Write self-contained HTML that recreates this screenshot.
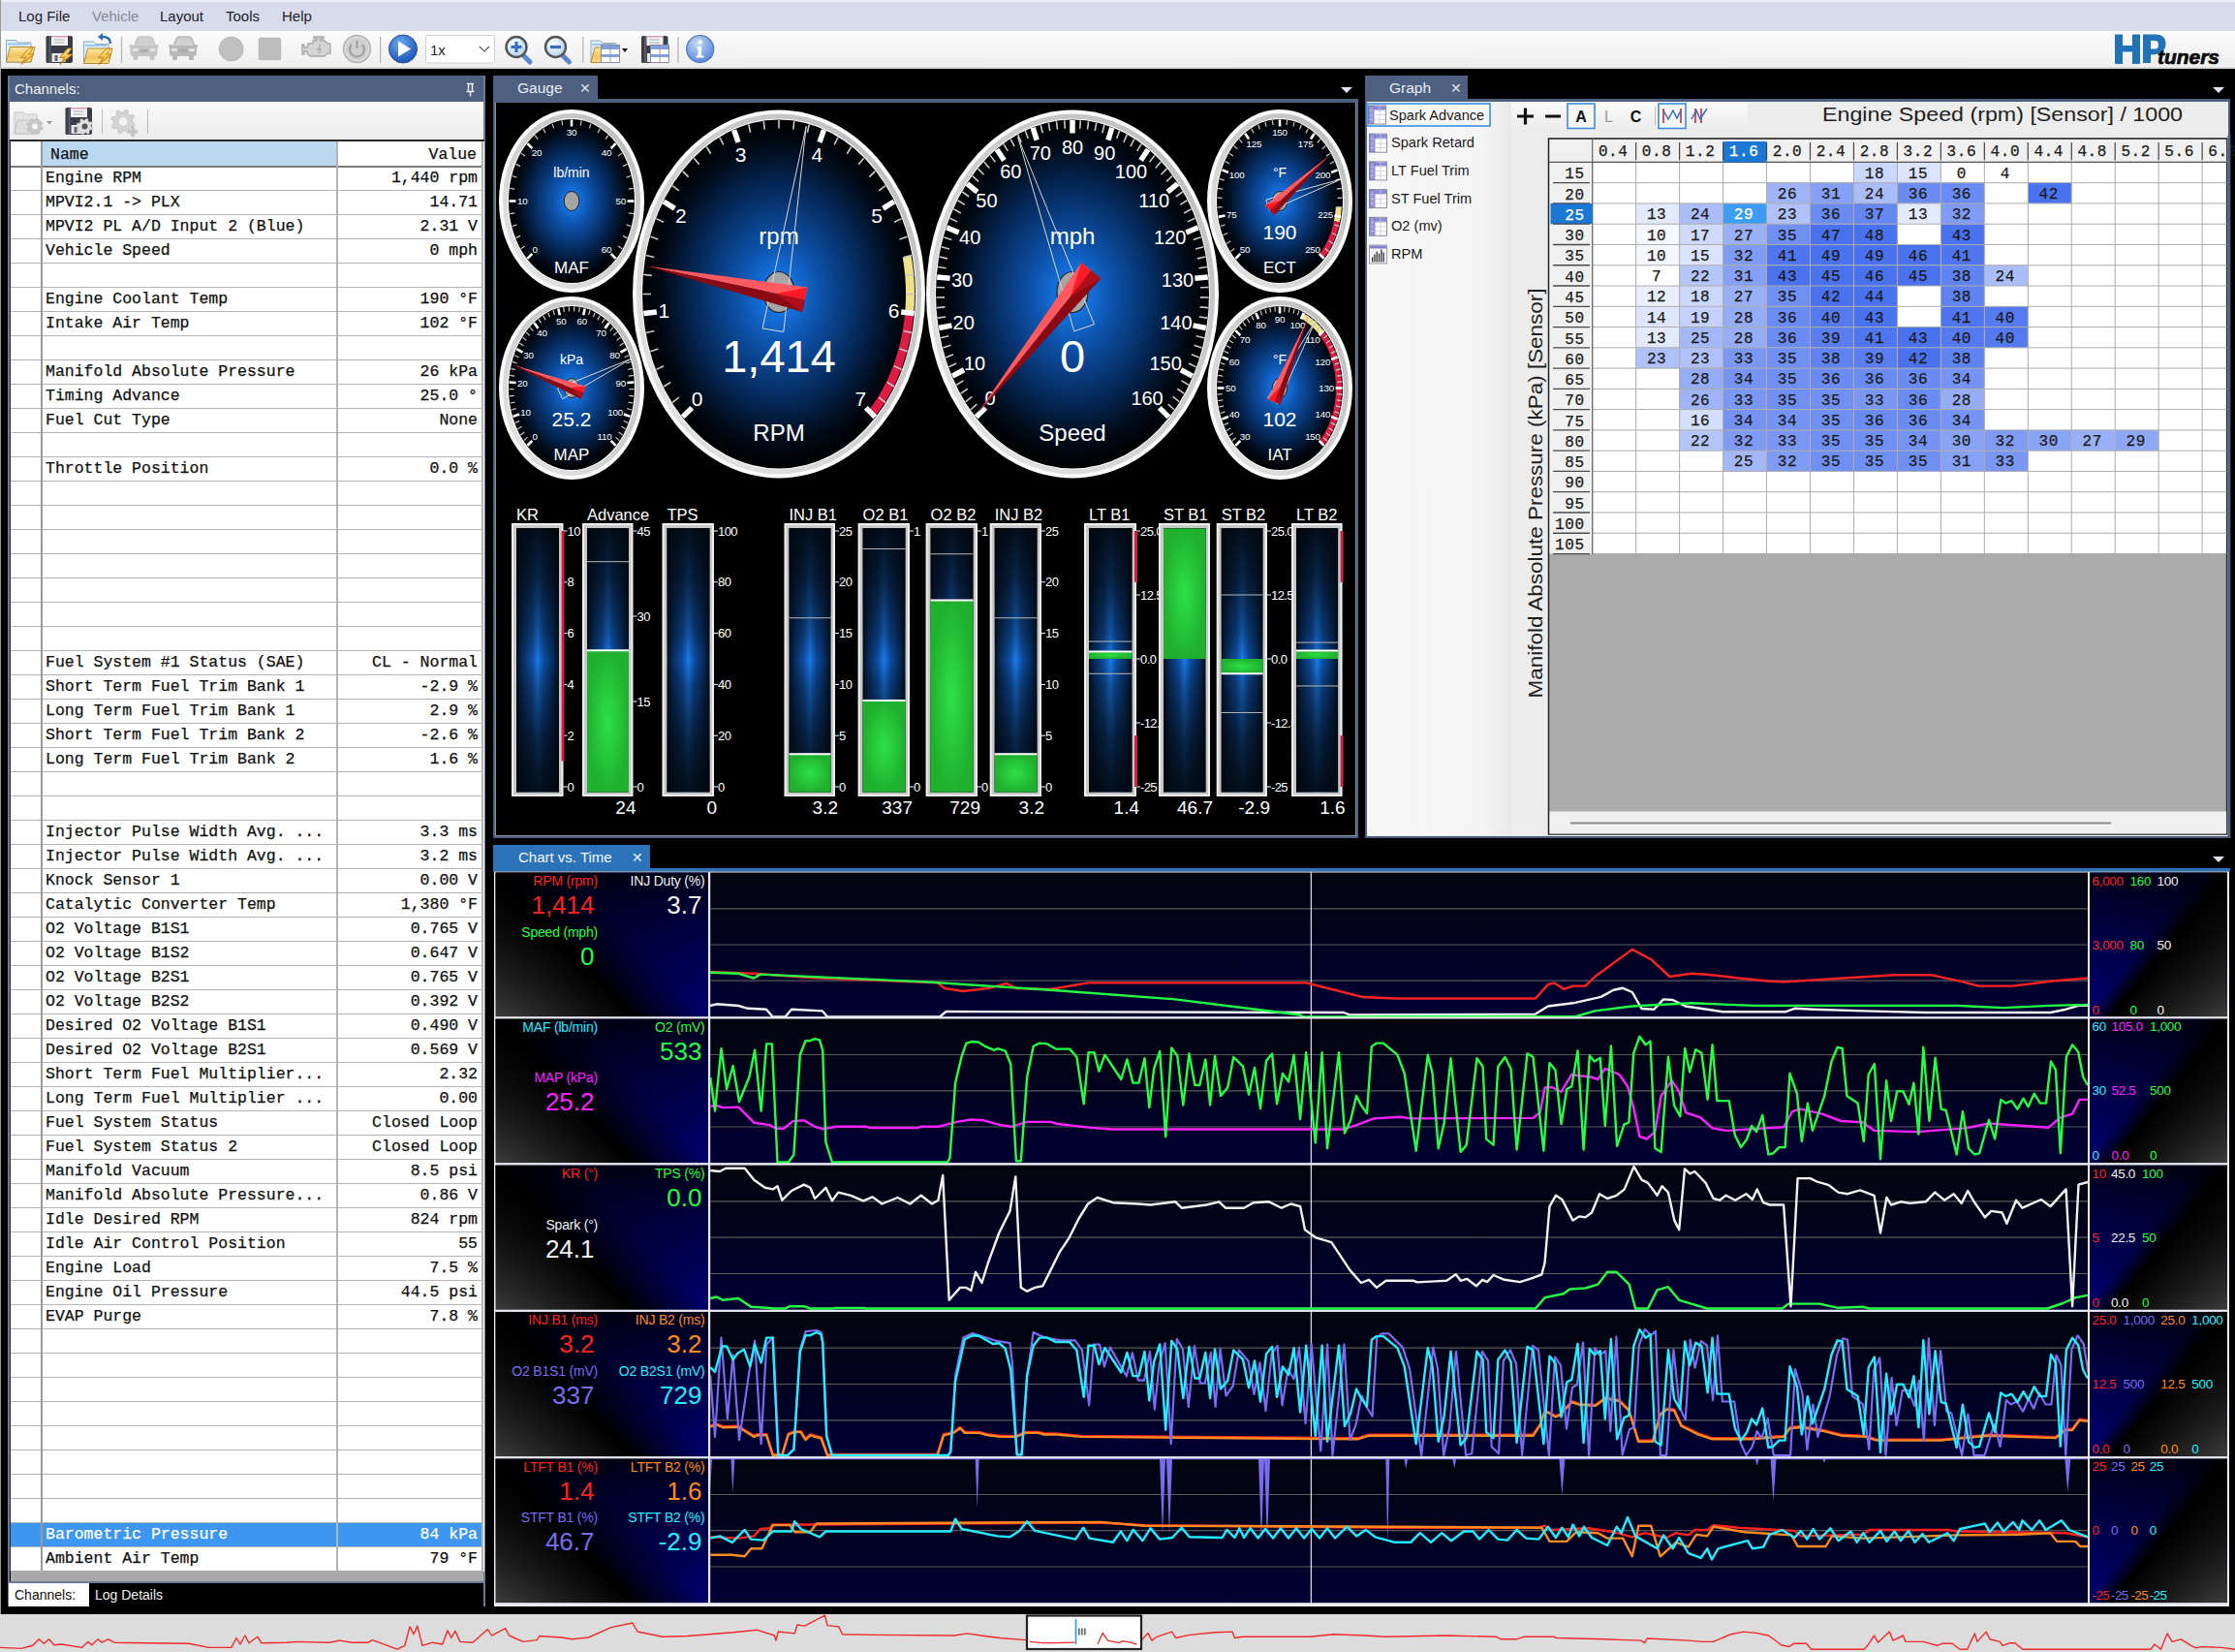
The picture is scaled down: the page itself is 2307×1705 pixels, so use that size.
<!DOCTYPE html><html><head><meta charset="utf-8"><style>html,body{margin:0;padding:0;width:2307px;height:1705px;overflow:hidden;background:#000}</style></head><body><div style="position:relative;width:2307px;height:1705px;overflow:hidden"><div style="position:absolute;left:0px;top:0px;width:2307px;height:1705px;background:#000"></div>
<div style="position:absolute;left:0px;top:0px;width:2307px;height:32px;background:#d8dbe9"></div>
<div style="position:absolute;left:0px;top:0px;width:2307px;height:2px;background:#eeeff5"></div>
<div style="position:absolute;left:19px;top:8px;white-space:pre;font-family:'Liberation Sans',sans-serif;font-size:15px;color:#1e1e2e;line-height:18px">Log File</div>
<div style="position:absolute;left:95px;top:8px;white-space:pre;font-family:'Liberation Sans',sans-serif;font-size:15px;color:#8a8a96;line-height:18px">Vehicle</div>
<div style="position:absolute;left:165px;top:8px;white-space:pre;font-family:'Liberation Sans',sans-serif;font-size:15px;color:#1e1e2e;line-height:18px">Layout</div>
<div style="position:absolute;left:233px;top:8px;white-space:pre;font-family:'Liberation Sans',sans-serif;font-size:15px;color:#1e1e2e;line-height:18px">Tools</div>
<div style="position:absolute;left:291px;top:8px;white-space:pre;font-family:'Liberation Sans',sans-serif;font-size:15px;color:#1e1e2e;line-height:18px">Help</div>
<div style="position:absolute;left:0px;top:32px;width:2307px;height:39px;background:linear-gradient(#fbfbfb,#eeeeee)"></div>
<div style="position:absolute;left:0px;top:0px;width:1px;height:1705px;background:#9a9a9a"></div>
<div style="position:absolute;left:9px;top:78px;width:492px;height:27px;background:#4e6080"></div>
<div style="position:absolute;left:15px;top:83px;white-space:pre;font-family:'Liberation Sans',sans-serif;font-size:15px;color:#f2f2f2;line-height:18px">Channels:</div>
<div style="position:absolute;left:9px;top:105px;width:492px;height:39px;background:linear-gradient(#f9f9f9,#ececec)"></div>
<div style="position:absolute;left:8px;top:78px;width:2px;height:1580px;background:#6c7a96"></div>
<div style="position:absolute;left:499px;top:78px;width:2px;height:1580px;background:#6c7a96"></div>
<div style="position:absolute;left:10px;top:144px;width:490px;height:1478px;background:#fff;"></div>
<div style="position:absolute;left:10px;top:144px;width:490px;height:2px;background:#2a2a2a"></div>
<div style="position:absolute;left:10px;top:144px;width:1px;height:1478px;background:#2a2a2a"></div>
<div style="position:absolute;left:42px;top:146px;width:306px;height:25px;background:#bad8f0"></div>
<div style="position:absolute;left:11px;top:1571px;width:488px;height:25px;background:#3d96f0"></div>
<div style="position:absolute;left:11px;top:171px;width:488px;height:2px;background:#7a7a7a"></div>
<div style="position:absolute;left:11px;top:196px;width:488px;height:1px;background:#b4b4b4"></div>
<div style="position:absolute;left:11px;top:221px;width:488px;height:1px;background:#b4b4b4"></div>
<div style="position:absolute;left:11px;top:246px;width:488px;height:1px;background:#b4b4b4"></div>
<div style="position:absolute;left:11px;top:271px;width:488px;height:1px;background:#b4b4b4"></div>
<div style="position:absolute;left:11px;top:296px;width:488px;height:1px;background:#b4b4b4"></div>
<div style="position:absolute;left:11px;top:321px;width:488px;height:1px;background:#b4b4b4"></div>
<div style="position:absolute;left:11px;top:346px;width:488px;height:1px;background:#b4b4b4"></div>
<div style="position:absolute;left:11px;top:371px;width:488px;height:1px;background:#b4b4b4"></div>
<div style="position:absolute;left:11px;top:396px;width:488px;height:1px;background:#b4b4b4"></div>
<div style="position:absolute;left:11px;top:421px;width:488px;height:1px;background:#b4b4b4"></div>
<div style="position:absolute;left:11px;top:446px;width:488px;height:1px;background:#b4b4b4"></div>
<div style="position:absolute;left:11px;top:471px;width:488px;height:1px;background:#b4b4b4"></div>
<div style="position:absolute;left:11px;top:496px;width:488px;height:1px;background:#b4b4b4"></div>
<div style="position:absolute;left:11px;top:521px;width:488px;height:1px;background:#b4b4b4"></div>
<div style="position:absolute;left:11px;top:546px;width:488px;height:1px;background:#b4b4b4"></div>
<div style="position:absolute;left:11px;top:571px;width:488px;height:1px;background:#b4b4b4"></div>
<div style="position:absolute;left:11px;top:596px;width:488px;height:1px;background:#b4b4b4"></div>
<div style="position:absolute;left:11px;top:621px;width:488px;height:1px;background:#b4b4b4"></div>
<div style="position:absolute;left:11px;top:646px;width:488px;height:1px;background:#b4b4b4"></div>
<div style="position:absolute;left:11px;top:671px;width:488px;height:1px;background:#b4b4b4"></div>
<div style="position:absolute;left:11px;top:696px;width:488px;height:1px;background:#b4b4b4"></div>
<div style="position:absolute;left:11px;top:721px;width:488px;height:1px;background:#b4b4b4"></div>
<div style="position:absolute;left:11px;top:746px;width:488px;height:1px;background:#b4b4b4"></div>
<div style="position:absolute;left:11px;top:771px;width:488px;height:1px;background:#b4b4b4"></div>
<div style="position:absolute;left:11px;top:796px;width:488px;height:1px;background:#b4b4b4"></div>
<div style="position:absolute;left:11px;top:821px;width:488px;height:1px;background:#b4b4b4"></div>
<div style="position:absolute;left:11px;top:846px;width:488px;height:1px;background:#b4b4b4"></div>
<div style="position:absolute;left:11px;top:871px;width:488px;height:1px;background:#b4b4b4"></div>
<div style="position:absolute;left:11px;top:896px;width:488px;height:1px;background:#b4b4b4"></div>
<div style="position:absolute;left:11px;top:921px;width:488px;height:1px;background:#b4b4b4"></div>
<div style="position:absolute;left:11px;top:946px;width:488px;height:1px;background:#b4b4b4"></div>
<div style="position:absolute;left:11px;top:971px;width:488px;height:1px;background:#b4b4b4"></div>
<div style="position:absolute;left:11px;top:996px;width:488px;height:1px;background:#b4b4b4"></div>
<div style="position:absolute;left:11px;top:1021px;width:488px;height:1px;background:#b4b4b4"></div>
<div style="position:absolute;left:11px;top:1046px;width:488px;height:1px;background:#b4b4b4"></div>
<div style="position:absolute;left:11px;top:1071px;width:488px;height:1px;background:#b4b4b4"></div>
<div style="position:absolute;left:11px;top:1096px;width:488px;height:1px;background:#b4b4b4"></div>
<div style="position:absolute;left:11px;top:1121px;width:488px;height:1px;background:#b4b4b4"></div>
<div style="position:absolute;left:11px;top:1146px;width:488px;height:1px;background:#b4b4b4"></div>
<div style="position:absolute;left:11px;top:1171px;width:488px;height:1px;background:#b4b4b4"></div>
<div style="position:absolute;left:11px;top:1196px;width:488px;height:1px;background:#b4b4b4"></div>
<div style="position:absolute;left:11px;top:1221px;width:488px;height:1px;background:#b4b4b4"></div>
<div style="position:absolute;left:11px;top:1246px;width:488px;height:1px;background:#b4b4b4"></div>
<div style="position:absolute;left:11px;top:1271px;width:488px;height:1px;background:#b4b4b4"></div>
<div style="position:absolute;left:11px;top:1296px;width:488px;height:1px;background:#b4b4b4"></div>
<div style="position:absolute;left:11px;top:1321px;width:488px;height:1px;background:#b4b4b4"></div>
<div style="position:absolute;left:11px;top:1346px;width:488px;height:1px;background:#b4b4b4"></div>
<div style="position:absolute;left:11px;top:1371px;width:488px;height:1px;background:#b4b4b4"></div>
<div style="position:absolute;left:11px;top:1396px;width:488px;height:1px;background:#b4b4b4"></div>
<div style="position:absolute;left:11px;top:1421px;width:488px;height:1px;background:#b4b4b4"></div>
<div style="position:absolute;left:11px;top:1446px;width:488px;height:1px;background:#b4b4b4"></div>
<div style="position:absolute;left:11px;top:1471px;width:488px;height:1px;background:#b4b4b4"></div>
<div style="position:absolute;left:11px;top:1496px;width:488px;height:1px;background:#b4b4b4"></div>
<div style="position:absolute;left:11px;top:1521px;width:488px;height:1px;background:#b4b4b4"></div>
<div style="position:absolute;left:11px;top:1546px;width:488px;height:1px;background:#b4b4b4"></div>
<div style="position:absolute;left:11px;top:1571px;width:488px;height:1px;background:#b4b4b4"></div>
<div style="position:absolute;left:11px;top:1596px;width:488px;height:1px;background:#b4b4b4"></div>
<div style="position:absolute;left:11px;top:1621px;width:488px;height:1px;background:#b4b4b4"></div>
<div style="position:absolute;left:42px;top:146px;width:2px;height:1475px;background:#9a9a9a"></div>
<div style="position:absolute;left:347px;top:146px;width:2px;height:1475px;background:#b4b4b4"></div>
<div style="position:absolute;left:497px;top:146px;width:2px;height:1475px;background:#b4b4b4"></div>
<div style="position:absolute;left:52px;top:150px;white-space:pre;font-family:'Liberation Mono',monospace;font-size:16.5px;letter-spacing:0px;line-height:20px;-webkit-text-stroke:0.25px currentColor;color:#111">Name</div>
<div style="position:absolute;right:1815px;top:150px;white-space:pre;text-align:right;font-family:'Liberation Mono',monospace;font-size:16.5px;letter-spacing:0px;line-height:20px;-webkit-text-stroke:0.25px currentColor;color:#111">Value</div>
<div style="position:absolute;left:47px;top:174px;white-space:pre;font-family:'Liberation Mono',monospace;font-size:16.5px;letter-spacing:0px;line-height:20px;-webkit-text-stroke:0.25px currentColor;color:#111">Engine RPM</div>
<div style="position:absolute;right:1814px;top:174px;white-space:pre;text-align:right;font-family:'Liberation Mono',monospace;font-size:16.5px;letter-spacing:0px;line-height:20px;-webkit-text-stroke:0.25px currentColor;color:#111">1,440 rpm</div>
<div style="position:absolute;left:47px;top:199px;white-space:pre;font-family:'Liberation Mono',monospace;font-size:16.5px;letter-spacing:0px;line-height:20px;-webkit-text-stroke:0.25px currentColor;color:#111">MPVI2.1 -> PLX</div>
<div style="position:absolute;right:1814px;top:199px;white-space:pre;text-align:right;font-family:'Liberation Mono',monospace;font-size:16.5px;letter-spacing:0px;line-height:20px;-webkit-text-stroke:0.25px currentColor;color:#111">14.71</div>
<div style="position:absolute;left:47px;top:224px;white-space:pre;font-family:'Liberation Mono',monospace;font-size:16.5px;letter-spacing:0px;line-height:20px;-webkit-text-stroke:0.25px currentColor;color:#111">MPVI2 PL A/D Input 2 (Blue)</div>
<div style="position:absolute;right:1814px;top:224px;white-space:pre;text-align:right;font-family:'Liberation Mono',monospace;font-size:16.5px;letter-spacing:0px;line-height:20px;-webkit-text-stroke:0.25px currentColor;color:#111">2.31 V</div>
<div style="position:absolute;left:47px;top:249px;white-space:pre;font-family:'Liberation Mono',monospace;font-size:16.5px;letter-spacing:0px;line-height:20px;-webkit-text-stroke:0.25px currentColor;color:#111">Vehicle Speed</div>
<div style="position:absolute;right:1814px;top:249px;white-space:pre;text-align:right;font-family:'Liberation Mono',monospace;font-size:16.5px;letter-spacing:0px;line-height:20px;-webkit-text-stroke:0.25px currentColor;color:#111">0 mph</div>
<div style="position:absolute;left:47px;top:299px;white-space:pre;font-family:'Liberation Mono',monospace;font-size:16.5px;letter-spacing:0px;line-height:20px;-webkit-text-stroke:0.25px currentColor;color:#111">Engine Coolant Temp</div>
<div style="position:absolute;right:1814px;top:299px;white-space:pre;text-align:right;font-family:'Liberation Mono',monospace;font-size:16.5px;letter-spacing:0px;line-height:20px;-webkit-text-stroke:0.25px currentColor;color:#111">190 °F</div>
<div style="position:absolute;left:47px;top:324px;white-space:pre;font-family:'Liberation Mono',monospace;font-size:16.5px;letter-spacing:0px;line-height:20px;-webkit-text-stroke:0.25px currentColor;color:#111">Intake Air Temp</div>
<div style="position:absolute;right:1814px;top:324px;white-space:pre;text-align:right;font-family:'Liberation Mono',monospace;font-size:16.5px;letter-spacing:0px;line-height:20px;-webkit-text-stroke:0.25px currentColor;color:#111">102 °F</div>
<div style="position:absolute;left:47px;top:374px;white-space:pre;font-family:'Liberation Mono',monospace;font-size:16.5px;letter-spacing:0px;line-height:20px;-webkit-text-stroke:0.25px currentColor;color:#111">Manifold Absolute Pressure</div>
<div style="position:absolute;right:1814px;top:374px;white-space:pre;text-align:right;font-family:'Liberation Mono',monospace;font-size:16.5px;letter-spacing:0px;line-height:20px;-webkit-text-stroke:0.25px currentColor;color:#111">26 kPa</div>
<div style="position:absolute;left:47px;top:399px;white-space:pre;font-family:'Liberation Mono',monospace;font-size:16.5px;letter-spacing:0px;line-height:20px;-webkit-text-stroke:0.25px currentColor;color:#111">Timing Advance</div>
<div style="position:absolute;right:1814px;top:399px;white-space:pre;text-align:right;font-family:'Liberation Mono',monospace;font-size:16.5px;letter-spacing:0px;line-height:20px;-webkit-text-stroke:0.25px currentColor;color:#111">25.0 °</div>
<div style="position:absolute;left:47px;top:424px;white-space:pre;font-family:'Liberation Mono',monospace;font-size:16.5px;letter-spacing:0px;line-height:20px;-webkit-text-stroke:0.25px currentColor;color:#111">Fuel Cut Type</div>
<div style="position:absolute;right:1814px;top:424px;white-space:pre;text-align:right;font-family:'Liberation Mono',monospace;font-size:16.5px;letter-spacing:0px;line-height:20px;-webkit-text-stroke:0.25px currentColor;color:#111">None</div>
<div style="position:absolute;left:47px;top:474px;white-space:pre;font-family:'Liberation Mono',monospace;font-size:16.5px;letter-spacing:0px;line-height:20px;-webkit-text-stroke:0.25px currentColor;color:#111">Throttle Position</div>
<div style="position:absolute;right:1814px;top:474px;white-space:pre;text-align:right;font-family:'Liberation Mono',monospace;font-size:16.5px;letter-spacing:0px;line-height:20px;-webkit-text-stroke:0.25px currentColor;color:#111">0.0 %</div>
<div style="position:absolute;left:47px;top:674px;white-space:pre;font-family:'Liberation Mono',monospace;font-size:16.5px;letter-spacing:0px;line-height:20px;-webkit-text-stroke:0.25px currentColor;color:#111">Fuel System #1 Status (SAE)</div>
<div style="position:absolute;right:1814px;top:674px;white-space:pre;text-align:right;font-family:'Liberation Mono',monospace;font-size:16.5px;letter-spacing:0px;line-height:20px;-webkit-text-stroke:0.25px currentColor;color:#111">CL - Normal</div>
<div style="position:absolute;left:47px;top:699px;white-space:pre;font-family:'Liberation Mono',monospace;font-size:16.5px;letter-spacing:0px;line-height:20px;-webkit-text-stroke:0.25px currentColor;color:#111">Short Term Fuel Trim Bank 1</div>
<div style="position:absolute;right:1814px;top:699px;white-space:pre;text-align:right;font-family:'Liberation Mono',monospace;font-size:16.5px;letter-spacing:0px;line-height:20px;-webkit-text-stroke:0.25px currentColor;color:#111">-2.9 %</div>
<div style="position:absolute;left:47px;top:724px;white-space:pre;font-family:'Liberation Mono',monospace;font-size:16.5px;letter-spacing:0px;line-height:20px;-webkit-text-stroke:0.25px currentColor;color:#111">Long Term Fuel Trim Bank 1</div>
<div style="position:absolute;right:1814px;top:724px;white-space:pre;text-align:right;font-family:'Liberation Mono',monospace;font-size:16.5px;letter-spacing:0px;line-height:20px;-webkit-text-stroke:0.25px currentColor;color:#111">2.9 %</div>
<div style="position:absolute;left:47px;top:749px;white-space:pre;font-family:'Liberation Mono',monospace;font-size:16.5px;letter-spacing:0px;line-height:20px;-webkit-text-stroke:0.25px currentColor;color:#111">Short Term Fuel Trim Bank 2</div>
<div style="position:absolute;right:1814px;top:749px;white-space:pre;text-align:right;font-family:'Liberation Mono',monospace;font-size:16.5px;letter-spacing:0px;line-height:20px;-webkit-text-stroke:0.25px currentColor;color:#111">-2.6 %</div>
<div style="position:absolute;left:47px;top:774px;white-space:pre;font-family:'Liberation Mono',monospace;font-size:16.5px;letter-spacing:0px;line-height:20px;-webkit-text-stroke:0.25px currentColor;color:#111">Long Term Fuel Trim Bank 2</div>
<div style="position:absolute;right:1814px;top:774px;white-space:pre;text-align:right;font-family:'Liberation Mono',monospace;font-size:16.5px;letter-spacing:0px;line-height:20px;-webkit-text-stroke:0.25px currentColor;color:#111">1.6 %</div>
<div style="position:absolute;left:47px;top:849px;white-space:pre;font-family:'Liberation Mono',monospace;font-size:16.5px;letter-spacing:0px;line-height:20px;-webkit-text-stroke:0.25px currentColor;color:#111">Injector Pulse Width Avg. ...</div>
<div style="position:absolute;right:1814px;top:849px;white-space:pre;text-align:right;font-family:'Liberation Mono',monospace;font-size:16.5px;letter-spacing:0px;line-height:20px;-webkit-text-stroke:0.25px currentColor;color:#111">3.3 ms</div>
<div style="position:absolute;left:47px;top:874px;white-space:pre;font-family:'Liberation Mono',monospace;font-size:16.5px;letter-spacing:0px;line-height:20px;-webkit-text-stroke:0.25px currentColor;color:#111">Injector Pulse Width Avg. ...</div>
<div style="position:absolute;right:1814px;top:874px;white-space:pre;text-align:right;font-family:'Liberation Mono',monospace;font-size:16.5px;letter-spacing:0px;line-height:20px;-webkit-text-stroke:0.25px currentColor;color:#111">3.2 ms</div>
<div style="position:absolute;left:47px;top:899px;white-space:pre;font-family:'Liberation Mono',monospace;font-size:16.5px;letter-spacing:0px;line-height:20px;-webkit-text-stroke:0.25px currentColor;color:#111">Knock Sensor 1</div>
<div style="position:absolute;right:1814px;top:899px;white-space:pre;text-align:right;font-family:'Liberation Mono',monospace;font-size:16.5px;letter-spacing:0px;line-height:20px;-webkit-text-stroke:0.25px currentColor;color:#111">0.00 V</div>
<div style="position:absolute;left:47px;top:924px;white-space:pre;font-family:'Liberation Mono',monospace;font-size:16.5px;letter-spacing:0px;line-height:20px;-webkit-text-stroke:0.25px currentColor;color:#111">Catalytic Converter Temp</div>
<div style="position:absolute;right:1814px;top:924px;white-space:pre;text-align:right;font-family:'Liberation Mono',monospace;font-size:16.5px;letter-spacing:0px;line-height:20px;-webkit-text-stroke:0.25px currentColor;color:#111">1,380 °F</div>
<div style="position:absolute;left:47px;top:949px;white-space:pre;font-family:'Liberation Mono',monospace;font-size:16.5px;letter-spacing:0px;line-height:20px;-webkit-text-stroke:0.25px currentColor;color:#111">O2 Voltage B1S1</div>
<div style="position:absolute;right:1814px;top:949px;white-space:pre;text-align:right;font-family:'Liberation Mono',monospace;font-size:16.5px;letter-spacing:0px;line-height:20px;-webkit-text-stroke:0.25px currentColor;color:#111">0.765 V</div>
<div style="position:absolute;left:47px;top:974px;white-space:pre;font-family:'Liberation Mono',monospace;font-size:16.5px;letter-spacing:0px;line-height:20px;-webkit-text-stroke:0.25px currentColor;color:#111">O2 Voltage B1S2</div>
<div style="position:absolute;right:1814px;top:974px;white-space:pre;text-align:right;font-family:'Liberation Mono',monospace;font-size:16.5px;letter-spacing:0px;line-height:20px;-webkit-text-stroke:0.25px currentColor;color:#111">0.647 V</div>
<div style="position:absolute;left:47px;top:999px;white-space:pre;font-family:'Liberation Mono',monospace;font-size:16.5px;letter-spacing:0px;line-height:20px;-webkit-text-stroke:0.25px currentColor;color:#111">O2 Voltage B2S1</div>
<div style="position:absolute;right:1814px;top:999px;white-space:pre;text-align:right;font-family:'Liberation Mono',monospace;font-size:16.5px;letter-spacing:0px;line-height:20px;-webkit-text-stroke:0.25px currentColor;color:#111">0.765 V</div>
<div style="position:absolute;left:47px;top:1024px;white-space:pre;font-family:'Liberation Mono',monospace;font-size:16.5px;letter-spacing:0px;line-height:20px;-webkit-text-stroke:0.25px currentColor;color:#111">O2 Voltage B2S2</div>
<div style="position:absolute;right:1814px;top:1024px;white-space:pre;text-align:right;font-family:'Liberation Mono',monospace;font-size:16.5px;letter-spacing:0px;line-height:20px;-webkit-text-stroke:0.25px currentColor;color:#111">0.392 V</div>
<div style="position:absolute;left:47px;top:1049px;white-space:pre;font-family:'Liberation Mono',monospace;font-size:16.5px;letter-spacing:0px;line-height:20px;-webkit-text-stroke:0.25px currentColor;color:#111">Desired O2 Voltage B1S1</div>
<div style="position:absolute;right:1814px;top:1049px;white-space:pre;text-align:right;font-family:'Liberation Mono',monospace;font-size:16.5px;letter-spacing:0px;line-height:20px;-webkit-text-stroke:0.25px currentColor;color:#111">0.490 V</div>
<div style="position:absolute;left:47px;top:1074px;white-space:pre;font-family:'Liberation Mono',monospace;font-size:16.5px;letter-spacing:0px;line-height:20px;-webkit-text-stroke:0.25px currentColor;color:#111">Desired O2 Voltage B2S1</div>
<div style="position:absolute;right:1814px;top:1074px;white-space:pre;text-align:right;font-family:'Liberation Mono',monospace;font-size:16.5px;letter-spacing:0px;line-height:20px;-webkit-text-stroke:0.25px currentColor;color:#111">0.569 V</div>
<div style="position:absolute;left:47px;top:1099px;white-space:pre;font-family:'Liberation Mono',monospace;font-size:16.5px;letter-spacing:0px;line-height:20px;-webkit-text-stroke:0.25px currentColor;color:#111">Short Term Fuel Multiplier...</div>
<div style="position:absolute;right:1814px;top:1099px;white-space:pre;text-align:right;font-family:'Liberation Mono',monospace;font-size:16.5px;letter-spacing:0px;line-height:20px;-webkit-text-stroke:0.25px currentColor;color:#111">2.32</div>
<div style="position:absolute;left:47px;top:1124px;white-space:pre;font-family:'Liberation Mono',monospace;font-size:16.5px;letter-spacing:0px;line-height:20px;-webkit-text-stroke:0.25px currentColor;color:#111">Long Term Fuel Multiplier ...</div>
<div style="position:absolute;right:1814px;top:1124px;white-space:pre;text-align:right;font-family:'Liberation Mono',monospace;font-size:16.5px;letter-spacing:0px;line-height:20px;-webkit-text-stroke:0.25px currentColor;color:#111">0.00</div>
<div style="position:absolute;left:47px;top:1149px;white-space:pre;font-family:'Liberation Mono',monospace;font-size:16.5px;letter-spacing:0px;line-height:20px;-webkit-text-stroke:0.25px currentColor;color:#111">Fuel System Status</div>
<div style="position:absolute;right:1814px;top:1149px;white-space:pre;text-align:right;font-family:'Liberation Mono',monospace;font-size:16.5px;letter-spacing:0px;line-height:20px;-webkit-text-stroke:0.25px currentColor;color:#111">Closed Loop</div>
<div style="position:absolute;left:47px;top:1174px;white-space:pre;font-family:'Liberation Mono',monospace;font-size:16.5px;letter-spacing:0px;line-height:20px;-webkit-text-stroke:0.25px currentColor;color:#111">Fuel System Status 2</div>
<div style="position:absolute;right:1814px;top:1174px;white-space:pre;text-align:right;font-family:'Liberation Mono',monospace;font-size:16.5px;letter-spacing:0px;line-height:20px;-webkit-text-stroke:0.25px currentColor;color:#111">Closed Loop</div>
<div style="position:absolute;left:47px;top:1199px;white-space:pre;font-family:'Liberation Mono',monospace;font-size:16.5px;letter-spacing:0px;line-height:20px;-webkit-text-stroke:0.25px currentColor;color:#111">Manifold Vacuum</div>
<div style="position:absolute;right:1814px;top:1199px;white-space:pre;text-align:right;font-family:'Liberation Mono',monospace;font-size:16.5px;letter-spacing:0px;line-height:20px;-webkit-text-stroke:0.25px currentColor;color:#111">8.5 psi</div>
<div style="position:absolute;left:47px;top:1224px;white-space:pre;font-family:'Liberation Mono',monospace;font-size:16.5px;letter-spacing:0px;line-height:20px;-webkit-text-stroke:0.25px currentColor;color:#111">Manifold Absolute Pressure...</div>
<div style="position:absolute;right:1814px;top:1224px;white-space:pre;text-align:right;font-family:'Liberation Mono',monospace;font-size:16.5px;letter-spacing:0px;line-height:20px;-webkit-text-stroke:0.25px currentColor;color:#111">0.86 V</div>
<div style="position:absolute;left:47px;top:1249px;white-space:pre;font-family:'Liberation Mono',monospace;font-size:16.5px;letter-spacing:0px;line-height:20px;-webkit-text-stroke:0.25px currentColor;color:#111">Idle Desired RPM</div>
<div style="position:absolute;right:1814px;top:1249px;white-space:pre;text-align:right;font-family:'Liberation Mono',monospace;font-size:16.5px;letter-spacing:0px;line-height:20px;-webkit-text-stroke:0.25px currentColor;color:#111">824 rpm</div>
<div style="position:absolute;left:47px;top:1274px;white-space:pre;font-family:'Liberation Mono',monospace;font-size:16.5px;letter-spacing:0px;line-height:20px;-webkit-text-stroke:0.25px currentColor;color:#111">Idle Air Control Position</div>
<div style="position:absolute;right:1814px;top:1274px;white-space:pre;text-align:right;font-family:'Liberation Mono',monospace;font-size:16.5px;letter-spacing:0px;line-height:20px;-webkit-text-stroke:0.25px currentColor;color:#111">55</div>
<div style="position:absolute;left:47px;top:1299px;white-space:pre;font-family:'Liberation Mono',monospace;font-size:16.5px;letter-spacing:0px;line-height:20px;-webkit-text-stroke:0.25px currentColor;color:#111">Engine Load</div>
<div style="position:absolute;right:1814px;top:1299px;white-space:pre;text-align:right;font-family:'Liberation Mono',monospace;font-size:16.5px;letter-spacing:0px;line-height:20px;-webkit-text-stroke:0.25px currentColor;color:#111">7.5 %</div>
<div style="position:absolute;left:47px;top:1324px;white-space:pre;font-family:'Liberation Mono',monospace;font-size:16.5px;letter-spacing:0px;line-height:20px;-webkit-text-stroke:0.25px currentColor;color:#111">Engine Oil Pressure</div>
<div style="position:absolute;right:1814px;top:1324px;white-space:pre;text-align:right;font-family:'Liberation Mono',monospace;font-size:16.5px;letter-spacing:0px;line-height:20px;-webkit-text-stroke:0.25px currentColor;color:#111">44.5 psi</div>
<div style="position:absolute;left:47px;top:1349px;white-space:pre;font-family:'Liberation Mono',monospace;font-size:16.5px;letter-spacing:0px;line-height:20px;-webkit-text-stroke:0.25px currentColor;color:#111">EVAP Purge</div>
<div style="position:absolute;right:1814px;top:1349px;white-space:pre;text-align:right;font-family:'Liberation Mono',monospace;font-size:16.5px;letter-spacing:0px;line-height:20px;-webkit-text-stroke:0.25px currentColor;color:#111">7.8 %</div>
<div style="position:absolute;left:47px;top:1574px;white-space:pre;font-family:'Liberation Mono',monospace;font-size:16.5px;letter-spacing:0px;line-height:20px;-webkit-text-stroke:0.25px currentColor;color:#fff">Barometric Pressure</div>
<div style="position:absolute;right:1814px;top:1574px;white-space:pre;text-align:right;font-family:'Liberation Mono',monospace;font-size:16.5px;letter-spacing:0px;line-height:20px;-webkit-text-stroke:0.25px currentColor;color:#fff">84 kPa</div>
<div style="position:absolute;left:47px;top:1599px;white-space:pre;font-family:'Liberation Mono',monospace;font-size:16.5px;letter-spacing:0px;line-height:20px;-webkit-text-stroke:0.25px currentColor;color:#111">Ambient Air Temp</div>
<div style="position:absolute;right:1814px;top:1599px;white-space:pre;text-align:right;font-family:'Liberation Mono',monospace;font-size:16.5px;letter-spacing:0px;line-height:20px;-webkit-text-stroke:0.25px currentColor;color:#111">79 °F</div>
<div style="position:absolute;left:11px;top:1621px;width:488px;height:11px;background:#a9a9a9"></div>
<div style="position:absolute;left:10px;top:1632px;width:490px;height:2px;background:#6c7a96"></div>
<div style="position:absolute;left:9px;top:1634px;width:83px;height:24px;background:#fdfdfd"></div>
<div style="position:absolute;left:15px;top:1638px;white-space:pre;font-family:'Liberation Sans',sans-serif;font-size:14px;color:#111;line-height:17px">Channels:</div>
<div style="position:absolute;left:98px;top:1638px;white-space:pre;font-family:'Liberation Sans',sans-serif;font-size:14px;color:#f0f0f0;line-height:17px">Log Details</div>
<div style="position:absolute;left:0px;top:1666px;width:2307px;height:39px;background:#dcdcdc"></div>
<div style="position:absolute;left:509px;top:78px;width:108px;height:24px;background:#4e6080"></div>
<div style="position:absolute;left:534px;top:82px;white-space:pre;font-family:'Liberation Sans',sans-serif;font-size:15.5px;color:#e8ecf4;line-height:18px">Gauge</div>
<div style="position:absolute;left:598px;top:82px;white-space:pre;font-family:'Liberation Sans',sans-serif;font-size:14px;color:#dfe4ee;line-height:18px">✕</div>
<div style="position:absolute;left:509px;top:102px;width:893px;height:763px;background:#4e6080"></div>
<div style="position:absolute;left:511px;top:106px;width:889px;height:757px;background:#000"></div>
<div style="position:absolute;left:511px;top:106px;width:1px;height:757px;background:#8892aa"></div>
<div style="position:absolute;left:1399px;top:106px;width:1px;height:757px;background:#8892aa"></div>
<div style="position:absolute;left:511px;top:862px;width:889px;height:1px;background:#8892aa"></div>
<svg style="position:absolute;left:0;top:0" width="2307" height="1705" viewBox="0 0 2307 1705"><defs><radialGradient id="facerpm" cx="50%" cy="50%" r="50%"><stop offset="0" stop-color="#1a86ff"/><stop offset="0.3" stop-color="#0d52aa"/><stop offset="0.62" stop-color="#052858"/><stop offset="0.86" stop-color="#010a16"/><stop offset="1" stop-color="#000"/></radialGradient><linearGradient id="bezrpm" x1="0" y1="1" x2="1" y2="0"><stop offset="0" stop-color="#e8e8e8"/><stop offset="0.5" stop-color="#cfcfcf"/><stop offset="1" stop-color="#bcbcbc"/></linearGradient></defs><ellipse cx="804" cy="303.5" rx="151" ry="190" fill="#fafafa"/><ellipse cx="804" cy="303.5" rx="144.5" ry="183.5" fill="none" stroke="url(#bezrpm)" stroke-width="5"/><ellipse cx="804" cy="303.5" rx="141" ry="180" fill="url(#facerpm)"/><polygon fill="#efe08a" points="940.49,263.67 940.83,265.63 941.15,267.59 941.46,269.56 941.75,271.54 942.02,273.52 942.28,275.5 942.51,277.48 942.73,279.47 942.94,281.46 943.12,283.46 943.29,285.46 943.44,287.45 943.57,289.46 943.68,291.46 943.78,293.46 943.86,295.47 943.92,297.48 943.96,299.48 943.99,301.49 944,303.5 943.99,305.51 943.96,307.52 943.92,309.52 943.86,311.53 943.78,313.54 943.68,315.54 943.57,317.54 943.44,319.55 943.29,321.54 943.12,323.54 934.18,322.53 934.33,320.64 934.47,318.74 934.6,316.84 934.7,314.94 934.79,313.03 934.87,311.13 934.93,309.22 934.97,307.31 934.99,305.41 935,303.5 934.99,301.59 934.97,299.69 934.93,297.78 934.87,295.87 934.79,293.97 934.7,292.06 934.6,290.16 934.47,288.26 934.33,286.36 934.18,284.47 934,282.57 933.81,280.68 933.61,278.79 933.39,276.91 933.15,275.02 932.89,273.15 932.62,271.27 932.34,269.4 932.03,267.53 931.72,265.67"/><polygon fill="#dc1c44" points="943.12,323.54 942.73,327.53 942.28,331.5 941.75,335.46 941.15,339.41 940.49,343.33 939.76,347.24 938.95,351.12 938.09,354.98 937.15,358.81 936.14,362.62 935.07,366.4 933.94,370.14 932.73,373.85 931.47,377.53 930.14,381.17 928.74,384.76 927.28,388.32 925.76,391.84 924.18,395.31 922.54,398.73 920.84,402.11 919.08,405.44 917.26,408.71 915.39,411.94 913.46,415.1 911.47,418.22 909.43,421.27 907.34,424.27 905.19,427.2 902.99,430.07 896.63,423.71 898.69,420.98 900.69,418.19 902.65,415.35 904.56,412.45 906.42,409.49 908.23,406.48 909.98,403.42 911.68,400.31 913.33,397.15 914.92,393.95 916.46,390.69 917.94,387.4 919.36,384.06 920.72,380.68 922.03,377.26 923.27,373.8 924.46,370.31 925.58,366.79 926.65,363.23 927.65,359.65 928.59,356.03 929.47,352.39 930.28,348.73 931.03,345.04 931.72,341.33 932.34,337.6 932.89,333.85 933.39,330.09 933.81,326.32 934.18,322.53"/><line x1="704.65" y1="430.43" x2="714.2" y2="420.88" stroke="#ffffff" stroke-width="5.5"/><line x1="694.15" y1="415.42" x2="700.8" y2="410.12" stroke="#c8c8c8" stroke-width="1.6"/><line x1="685.04" y1="399" x2="692.23" y2="394.48" stroke="#c8c8c8" stroke-width="1.6"/><line x1="677.41" y1="381.38" x2="685.07" y2="377.69" stroke="#c8c8c8" stroke-width="1.6"/><line x1="671.38" y1="362.79" x2="679.41" y2="359.98" stroke="#c8c8c8" stroke-width="1.6"/><line x1="667.02" y1="343.44" x2="675.31" y2="341.55" stroke="#c8c8c8" stroke-width="1.6"/><line x1="664.38" y1="323.6" x2="677.8" y2="322.09" stroke="#ffffff" stroke-width="5.5"/><line x1="663.5" y1="303.5" x2="672" y2="303.5" stroke="#c8c8c8" stroke-width="1.6"/><line x1="664.38" y1="283.4" x2="672.83" y2="284.35" stroke="#c8c8c8" stroke-width="1.6"/><line x1="667.02" y1="263.56" x2="675.31" y2="265.45" stroke="#c8c8c8" stroke-width="1.6"/><line x1="671.38" y1="244.21" x2="679.41" y2="247.02" stroke="#c8c8c8" stroke-width="1.6"/><line x1="677.41" y1="225.62" x2="685.07" y2="229.31" stroke="#c8c8c8" stroke-width="1.6"/><line x1="685.04" y1="208" x2="696.47" y2="215.18" stroke="#ffffff" stroke-width="5.5"/><line x1="694.15" y1="191.58" x2="700.8" y2="196.88" stroke="#c8c8c8" stroke-width="1.6"/><line x1="704.65" y1="176.57" x2="710.66" y2="182.58" stroke="#c8c8c8" stroke-width="1.6"/><line x1="716.4" y1="163.16" x2="721.7" y2="169.81" stroke="#c8c8c8" stroke-width="1.6"/><line x1="729.25" y1="151.51" x2="733.77" y2="158.71" stroke="#c8c8c8" stroke-width="1.6"/><line x1="743.04" y1="141.78" x2="746.73" y2="149.43" stroke="#c8c8c8" stroke-width="1.6"/><line x1="757.6" y1="134.07" x2="762.05" y2="146.82" stroke="#ffffff" stroke-width="5.5"/><line x1="772.74" y1="128.5" x2="774.63" y2="136.79" stroke="#c8c8c8" stroke-width="1.6"/><line x1="788.27" y1="125.13" x2="789.22" y2="133.58" stroke="#c8c8c8" stroke-width="1.6"/><line x1="804" y1="124" x2="804" y2="132.5" stroke="#c8c8c8" stroke-width="1.6"/><line x1="819.73" y1="125.13" x2="818.78" y2="133.58" stroke="#c8c8c8" stroke-width="1.6"/><line x1="835.26" y1="128.5" x2="833.37" y2="136.79" stroke="#c8c8c8" stroke-width="1.6"/><line x1="850.4" y1="134.07" x2="845.95" y2="146.82" stroke="#ffffff" stroke-width="5.5"/><line x1="864.96" y1="141.78" x2="861.27" y2="149.43" stroke="#c8c8c8" stroke-width="1.6"/><line x1="878.75" y1="151.51" x2="874.23" y2="158.71" stroke="#c8c8c8" stroke-width="1.6"/><line x1="891.6" y1="163.16" x2="886.3" y2="169.81" stroke="#c8c8c8" stroke-width="1.6"/><line x1="903.35" y1="176.57" x2="897.34" y2="182.58" stroke="#c8c8c8" stroke-width="1.6"/><line x1="913.85" y1="191.58" x2="907.2" y2="196.88" stroke="#c8c8c8" stroke-width="1.6"/><line x1="922.96" y1="208" x2="911.53" y2="215.18" stroke="#ffffff" stroke-width="5.5"/><line x1="930.59" y1="225.62" x2="922.93" y2="229.31" stroke="#c8c8c8" stroke-width="1.6"/><line x1="936.62" y1="244.21" x2="928.59" y2="247.02" stroke="#c8c8c8" stroke-width="1.6"/><line x1="940.98" y1="263.56" x2="932.69" y2="265.45" stroke="#c8c8c8" stroke-width="1.6"/><line x1="943.62" y1="283.4" x2="935.17" y2="284.35" stroke="#c8c8c8" stroke-width="1.6"/><line x1="944.5" y1="303.5" x2="936" y2="303.5" stroke="#c8c8c8" stroke-width="1.6"/><line x1="943.62" y1="323.6" x2="930.2" y2="322.09" stroke="#ffffff" stroke-width="5.5"/><line x1="940.98" y1="343.44" x2="932.69" y2="341.55" stroke="#c8c8c8" stroke-width="1.6"/><line x1="936.62" y1="362.79" x2="928.59" y2="359.98" stroke="#c8c8c8" stroke-width="1.6"/><line x1="930.59" y1="381.38" x2="922.93" y2="377.69" stroke="#c8c8c8" stroke-width="1.6"/><line x1="922.96" y1="399" x2="915.77" y2="394.48" stroke="#c8c8c8" stroke-width="1.6"/><line x1="913.85" y1="415.42" x2="907.2" y2="410.12" stroke="#c8c8c8" stroke-width="1.6"/><line x1="903.35" y1="430.43" x2="893.8" y2="420.88" stroke="#ffffff" stroke-width="5.5"/><text x="719.61" y="418.69" fill="#fff" font-size="21" text-anchor="middle" font-family='Liberation Sans',sans-serif>0</text><text x="685.4" y="328.05" fill="#fff" font-size="21" text-anchor="middle" font-family='Liberation Sans',sans-serif>1</text><text x="702.94" y="229.97" fill="#fff" font-size="21" text-anchor="middle" font-family='Liberation Sans',sans-serif>2</text><text x="764.58" y="167.25" fill="#fff" font-size="21" text-anchor="middle" font-family='Liberation Sans',sans-serif>3</text><text x="843.42" y="167.25" fill="#fff" font-size="21" text-anchor="middle" font-family='Liberation Sans',sans-serif>4</text><text x="905.06" y="229.97" fill="#fff" font-size="21" text-anchor="middle" font-family='Liberation Sans',sans-serif>5</text><text x="922.6" y="328.05" fill="#fff" font-size="21" text-anchor="middle" font-family='Liberation Sans',sans-serif>6</text><text x="888.39" y="418.69" fill="#fff" font-size="21" text-anchor="middle" font-family='Liberation Sans',sans-serif>7</text><text x="804" y="252" fill="#fff" font-size="24" text-anchor="middle" font-family='Liberation Sans',sans-serif>rpm</text><text x="804" y="384" fill="#fff" font-size="47" text-anchor="middle" font-family='Liberation Sans',sans-serif>1,414</text><text x="804" y="455" fill="#fff" font-size="24" text-anchor="middle" font-family='Liberation Sans',sans-serif>RPM</text><ellipse cx="804" cy="301.5" rx="16" ry="21" fill="#a6a6a6" stroke="#222" stroke-width="1.2"/><polygon points="832.17,130.39 808.8,342.49 787.09,338.96" fill="none" stroke="#d8d8d8" stroke-width="1"/><polygon points="667,274.53 833.49,296.45 830.8,309.17" fill="#ff5a60"/><polygon points="667,274.53 830.8,309.17 828.11,321.89" fill="#8c0a12"/><polygon points="801.32,302.93 833.49,296.45 830.8,309.17" fill="#ff1a26"/><polygon points="801.32,302.93 830.8,309.17 828.11,321.89" fill="#b0101a"/><defs><radialGradient id="facespd" cx="50%" cy="50%" r="50%"><stop offset="0" stop-color="#1a86ff"/><stop offset="0.3" stop-color="#0d52aa"/><stop offset="0.62" stop-color="#052858"/><stop offset="0.86" stop-color="#010a16"/><stop offset="1" stop-color="#000"/></radialGradient><linearGradient id="bezspd" x1="0" y1="1" x2="1" y2="0"><stop offset="0" stop-color="#e8e8e8"/><stop offset="0.5" stop-color="#cfcfcf"/><stop offset="1" stop-color="#bcbcbc"/></linearGradient></defs><ellipse cx="1107" cy="303.5" rx="151" ry="190" fill="#fafafa"/><ellipse cx="1107" cy="303.5" rx="144.5" ry="183.5" fill="none" stroke="url(#bezspd)" stroke-width="5"/><ellipse cx="1107" cy="303.5" rx="141" ry="180" fill="url(#facespd)"/><line x1="1007.65" y1="430.43" x2="1017.2" y2="420.88" stroke="#ffffff" stroke-width="5.5"/><line x1="1001.98" y1="422.73" x2="1008.33" y2="417.09" stroke="#c8c8c8" stroke-width="1.6"/><line x1="996.66" y1="414.63" x2="1003.34" y2="409.37" stroke="#c8c8c8" stroke-width="1.6"/><line x1="991.73" y1="406.14" x2="998.71" y2="401.28" stroke="#c8c8c8" stroke-width="1.6"/><line x1="987.2" y1="397.29" x2="994.45" y2="392.85" stroke="#c8c8c8" stroke-width="1.6"/><line x1="983.09" y1="388.12" x2="995" y2="381.75" stroke="#ffffff" stroke-width="5.5"/><line x1="979.41" y1="378.65" x2="987.13" y2="375.09" stroke="#c8c8c8" stroke-width="1.6"/><line x1="976.16" y1="368.92" x2="984.08" y2="365.82" stroke="#c8c8c8" stroke-width="1.6"/><line x1="973.38" y1="358.97" x2="981.46" y2="356.34" stroke="#c8c8c8" stroke-width="1.6"/><line x1="971.05" y1="348.82" x2="979.28" y2="346.68" stroke="#c8c8c8" stroke-width="1.6"/><line x1="969.2" y1="338.52" x2="982.44" y2="335.88" stroke="#ffffff" stroke-width="5.5"/><line x1="967.83" y1="328.09" x2="976.24" y2="326.93" stroke="#c8c8c8" stroke-width="1.6"/><line x1="966.93" y1="317.58" x2="975.41" y2="316.92" stroke="#c8c8c8" stroke-width="1.6"/><line x1="966.53" y1="307.02" x2="975.03" y2="306.86" stroke="#c8c8c8" stroke-width="1.6"/><line x1="966.61" y1="296.45" x2="975.1" y2="296.79" stroke="#c8c8c8" stroke-width="1.6"/><line x1="967.18" y1="285.91" x2="980.61" y2="287.23" stroke="#ffffff" stroke-width="5.5"/><line x1="968.23" y1="275.42" x2="976.63" y2="276.75" stroke="#c8c8c8" stroke-width="1.6"/><line x1="969.76" y1="265.03" x2="978.07" y2="266.85" stroke="#c8c8c8" stroke-width="1.6"/><line x1="971.78" y1="254.78" x2="979.96" y2="257.08" stroke="#c8c8c8" stroke-width="1.6"/><line x1="974.25" y1="244.69" x2="982.29" y2="247.48" stroke="#c8c8c8" stroke-width="1.6"/><line x1="977.19" y1="234.81" x2="989.67" y2="239.97" stroke="#ffffff" stroke-width="5.5"/><line x1="980.59" y1="225.16" x2="988.23" y2="228.87" stroke="#c8c8c8" stroke-width="1.6"/><line x1="984.41" y1="215.79" x2="991.83" y2="219.95" stroke="#c8c8c8" stroke-width="1.6"/><line x1="988.67" y1="206.72" x2="995.83" y2="211.31" stroke="#c8c8c8" stroke-width="1.6"/><line x1="993.33" y1="197.99" x2="1000.21" y2="202.99" stroke="#c8c8c8" stroke-width="1.6"/><line x1="998.39" y1="189.63" x2="1008.83" y2="198.19" stroke="#ffffff" stroke-width="5.5"/><line x1="1003.83" y1="181.66" x2="1010.07" y2="187.43" stroke="#c8c8c8" stroke-width="1.6"/><line x1="1009.62" y1="174.11" x2="1015.51" y2="180.23" stroke="#c8c8c8" stroke-width="1.6"/><line x1="1015.75" y1="167.01" x2="1021.27" y2="173.47" stroke="#c8c8c8" stroke-width="1.6"/><line x1="1022.2" y1="160.38" x2="1027.33" y2="167.16" stroke="#c8c8c8" stroke-width="1.6"/><line x1="1028.94" y1="154.25" x2="1036.44" y2="165.48" stroke="#ffffff" stroke-width="5.5"/><line x1="1035.96" y1="148.64" x2="1040.25" y2="155.97" stroke="#c8c8c8" stroke-width="1.6"/><line x1="1043.21" y1="143.56" x2="1047.07" y2="151.14" stroke="#c8c8c8" stroke-width="1.6"/><line x1="1050.69" y1="139.04" x2="1054.1" y2="146.83" stroke="#c8c8c8" stroke-width="1.6"/><line x1="1058.37" y1="135.09" x2="1061.31" y2="143.07" stroke="#c8c8c8" stroke-width="1.6"/><line x1="1066.22" y1="131.73" x2="1070.13" y2="144.65" stroke="#ffffff" stroke-width="5.5"/><line x1="1074.2" y1="128.96" x2="1076.19" y2="137.22" stroke="#c8c8c8" stroke-width="1.6"/><line x1="1082.3" y1="126.8" x2="1083.79" y2="135.16" stroke="#c8c8c8" stroke-width="1.6"/><line x1="1090.49" y1="125.24" x2="1091.49" y2="133.69" stroke="#c8c8c8" stroke-width="1.6"/><line x1="1098.73" y1="124.31" x2="1099.23" y2="132.8" stroke="#c8c8c8" stroke-width="1.6"/><line x1="1107" y1="124" x2="1107" y2="137.5" stroke="#ffffff" stroke-width="5.5"/><line x1="1115.27" y1="124.31" x2="1114.77" y2="132.8" stroke="#c8c8c8" stroke-width="1.6"/><line x1="1123.51" y1="125.24" x2="1122.51" y2="133.69" stroke="#c8c8c8" stroke-width="1.6"/><line x1="1131.7" y1="126.8" x2="1130.21" y2="135.16" stroke="#c8c8c8" stroke-width="1.6"/><line x1="1139.8" y1="128.96" x2="1137.81" y2="137.22" stroke="#c8c8c8" stroke-width="1.6"/><line x1="1147.78" y1="131.73" x2="1143.87" y2="144.65" stroke="#ffffff" stroke-width="5.5"/><line x1="1155.63" y1="135.09" x2="1152.69" y2="143.07" stroke="#c8c8c8" stroke-width="1.6"/><line x1="1163.31" y1="139.04" x2="1159.9" y2="146.83" stroke="#c8c8c8" stroke-width="1.6"/><line x1="1170.79" y1="143.56" x2="1166.93" y2="151.14" stroke="#c8c8c8" stroke-width="1.6"/><line x1="1178.04" y1="148.64" x2="1173.75" y2="155.97" stroke="#c8c8c8" stroke-width="1.6"/><line x1="1185.06" y1="154.25" x2="1177.56" y2="165.48" stroke="#ffffff" stroke-width="5.5"/><line x1="1191.8" y1="160.38" x2="1186.67" y2="167.16" stroke="#c8c8c8" stroke-width="1.6"/><line x1="1198.25" y1="167.01" x2="1192.73" y2="173.47" stroke="#c8c8c8" stroke-width="1.6"/><line x1="1204.38" y1="174.11" x2="1198.49" y2="180.23" stroke="#c8c8c8" stroke-width="1.6"/><line x1="1210.17" y1="181.66" x2="1203.93" y2="187.43" stroke="#c8c8c8" stroke-width="1.6"/><line x1="1215.61" y1="189.63" x2="1205.17" y2="198.19" stroke="#ffffff" stroke-width="5.5"/><line x1="1220.67" y1="197.99" x2="1213.79" y2="202.99" stroke="#c8c8c8" stroke-width="1.6"/><line x1="1225.33" y1="206.72" x2="1218.17" y2="211.31" stroke="#c8c8c8" stroke-width="1.6"/><line x1="1229.59" y1="215.79" x2="1222.17" y2="219.95" stroke="#c8c8c8" stroke-width="1.6"/><line x1="1233.41" y1="225.16" x2="1225.77" y2="228.87" stroke="#c8c8c8" stroke-width="1.6"/><line x1="1236.81" y1="234.81" x2="1224.33" y2="239.97" stroke="#ffffff" stroke-width="5.5"/><line x1="1239.75" y1="244.69" x2="1231.71" y2="247.48" stroke="#c8c8c8" stroke-width="1.6"/><line x1="1242.22" y1="254.78" x2="1234.04" y2="257.08" stroke="#c8c8c8" stroke-width="1.6"/><line x1="1244.24" y1="265.03" x2="1235.93" y2="266.85" stroke="#c8c8c8" stroke-width="1.6"/><line x1="1245.77" y1="275.42" x2="1237.37" y2="276.75" stroke="#c8c8c8" stroke-width="1.6"/><line x1="1246.82" y1="285.91" x2="1233.39" y2="287.23" stroke="#ffffff" stroke-width="5.5"/><line x1="1247.39" y1="296.45" x2="1238.9" y2="296.79" stroke="#c8c8c8" stroke-width="1.6"/><line x1="1247.47" y1="307.02" x2="1238.97" y2="306.86" stroke="#c8c8c8" stroke-width="1.6"/><line x1="1247.07" y1="317.58" x2="1238.59" y2="316.92" stroke="#c8c8c8" stroke-width="1.6"/><line x1="1246.17" y1="328.09" x2="1237.76" y2="326.93" stroke="#c8c8c8" stroke-width="1.6"/><line x1="1244.8" y1="338.52" x2="1231.56" y2="335.88" stroke="#ffffff" stroke-width="5.5"/><line x1="1242.95" y1="348.82" x2="1234.72" y2="346.68" stroke="#c8c8c8" stroke-width="1.6"/><line x1="1240.62" y1="358.97" x2="1232.54" y2="356.34" stroke="#c8c8c8" stroke-width="1.6"/><line x1="1237.84" y1="368.92" x2="1229.92" y2="365.82" stroke="#c8c8c8" stroke-width="1.6"/><line x1="1234.59" y1="378.65" x2="1226.87" y2="375.09" stroke="#c8c8c8" stroke-width="1.6"/><line x1="1230.91" y1="388.12" x2="1219" y2="381.75" stroke="#ffffff" stroke-width="5.5"/><line x1="1226.8" y1="397.29" x2="1219.55" y2="392.85" stroke="#c8c8c8" stroke-width="1.6"/><line x1="1222.27" y1="406.14" x2="1215.29" y2="401.28" stroke="#c8c8c8" stroke-width="1.6"/><line x1="1217.34" y1="414.63" x2="1210.66" y2="409.37" stroke="#c8c8c8" stroke-width="1.6"/><line x1="1212.02" y1="422.73" x2="1205.67" y2="417.09" stroke="#c8c8c8" stroke-width="1.6"/><line x1="1206.35" y1="430.43" x2="1196.8" y2="420.88" stroke="#ffffff" stroke-width="5.5"/><text x="1022.15" y="417.98" fill="#fff" font-size="20" text-anchor="middle" font-family='Liberation Sans',sans-serif>0</text><text x="1006.02" y="382.15" fill="#fff" font-size="20" text-anchor="middle" font-family='Liberation Sans',sans-serif>10</text><text x="994.7" y="340.15" fill="#fff" font-size="20" text-anchor="middle" font-family='Liberation Sans',sans-serif>20</text><text x="993.05" y="295.6" fill="#fff" font-size="20" text-anchor="middle" font-family='Liberation Sans',sans-serif>30</text><text x="1001.22" y="252.33" fill="#fff" font-size="20" text-anchor="middle" font-family='Liberation Sans',sans-serif>40</text><text x="1018.49" y="214.07" fill="#fff" font-size="20" text-anchor="middle" font-family='Liberation Sans',sans-serif>50</text><text x="1043.39" y="184.12" fill="#fff" font-size="20" text-anchor="middle" font-family='Liberation Sans',sans-serif>60</text><text x="1073.76" y="165.05" fill="#fff" font-size="20" text-anchor="middle" font-family='Liberation Sans',sans-serif>70</text><text x="1107" y="158.5" fill="#fff" font-size="20" text-anchor="middle" font-family='Liberation Sans',sans-serif>80</text><text x="1140.24" y="165.05" fill="#fff" font-size="20" text-anchor="middle" font-family='Liberation Sans',sans-serif>90</text><text x="1167.56" y="184.12" fill="#fff" font-size="20" text-anchor="middle" font-family='Liberation Sans',sans-serif>100</text><text x="1191.26" y="214.07" fill="#fff" font-size="20" text-anchor="middle" font-family='Liberation Sans',sans-serif>110</text><text x="1207.7" y="252.33" fill="#fff" font-size="20" text-anchor="middle" font-family='Liberation Sans',sans-serif>120</text><text x="1215.48" y="295.6" fill="#fff" font-size="20" text-anchor="middle" font-family='Liberation Sans',sans-serif>130</text><text x="1213.91" y="340.15" fill="#fff" font-size="20" text-anchor="middle" font-family='Liberation Sans',sans-serif>140</text><text x="1203.13" y="382.15" fill="#fff" font-size="20" text-anchor="middle" font-family='Liberation Sans',sans-serif>150</text><text x="1184.07" y="417.98" fill="#fff" font-size="20" text-anchor="middle" font-family='Liberation Sans',sans-serif>160</text><text x="1107" y="252" fill="#fff" font-size="24" text-anchor="middle" font-family='Liberation Sans',sans-serif>mph</text><text x="1107" y="384" fill="#fff" font-size="47" text-anchor="middle" font-family='Liberation Sans',sans-serif>0</text><text x="1107" y="455" fill="#fff" font-size="24" text-anchor="middle" font-family='Liberation Sans',sans-serif>Speed</text><ellipse cx="1107" cy="301.5" rx="16" ry="21" fill="#a6a6a6" stroke="#222" stroke-width="1.2"/><polygon points="1050.72,141.61 1129.49,334.7 1108.71,341.93" fill="none" stroke="#d8d8d8" stroke-width="1"/><polygon points="1008.77,427.1 1116.04,271.23 1126.22,279.32" fill="#ff5a60"/><polygon points="1008.77,427.1 1126.22,279.32 1136.4,287.41" fill="#8c0a12"/><polygon points="1105.08,305.92 1116.04,271.23 1126.22,279.32" fill="#ff1a26"/><polygon points="1105.08,305.92 1126.22,279.32 1136.4,287.41" fill="#b0101a"/><defs><radialGradient id="facemaf" cx="50%" cy="50%" r="50%"><stop offset="0" stop-color="#1a86ff"/><stop offset="0.3" stop-color="#0d52aa"/><stop offset="0.62" stop-color="#052858"/><stop offset="0.86" stop-color="#010a16"/><stop offset="1" stop-color="#000"/></radialGradient><linearGradient id="bezmaf" x1="0" y1="1" x2="1" y2="0"><stop offset="0" stop-color="#e8e8e8"/><stop offset="0.5" stop-color="#cfcfcf"/><stop offset="1" stop-color="#bcbcbc"/></linearGradient></defs><ellipse cx="590" cy="207.5" rx="75" ry="94.5" fill="#fafafa"/><ellipse cx="590" cy="207.5" rx="68.5" ry="88" fill="none" stroke="url(#bezmaf)" stroke-width="5"/><ellipse cx="590" cy="207.5" rx="65" ry="84.5" fill="url(#facemaf)"/><line x1="544.39" y1="266.9" x2="549.34" y2="261.95" stroke="#ffffff" stroke-width="2.6"/><line x1="537.82" y1="256.87" x2="541.86" y2="253.94" stroke="#c8c8c8" stroke-width="1.2"/><line x1="532.53" y1="245.64" x2="536.99" y2="243.37" stroke="#c8c8c8" stroke-width="1.2"/><line x1="528.66" y1="233.46" x2="533.41" y2="231.91" stroke="#c8c8c8" stroke-width="1.2"/><line x1="526.29" y1="220.64" x2="531.23" y2="219.86" stroke="#c8c8c8" stroke-width="1.2"/><line x1="525.5" y1="207.5" x2="532.5" y2="207.5" stroke="#ffffff" stroke-width="2.6"/><line x1="526.29" y1="194.36" x2="531.23" y2="195.14" stroke="#c8c8c8" stroke-width="1.2"/><line x1="528.66" y1="181.54" x2="533.41" y2="183.09" stroke="#c8c8c8" stroke-width="1.2"/><line x1="532.53" y1="169.36" x2="536.99" y2="171.63" stroke="#c8c8c8" stroke-width="1.2"/><line x1="537.82" y1="158.13" x2="541.86" y2="161.06" stroke="#c8c8c8" stroke-width="1.2"/><line x1="544.39" y1="148.1" x2="549.34" y2="153.05" stroke="#ffffff" stroke-width="2.6"/><line x1="552.09" y1="139.54" x2="555.03" y2="143.59" stroke="#c8c8c8" stroke-width="1.2"/><line x1="560.72" y1="132.66" x2="562.99" y2="137.11" stroke="#c8c8c8" stroke-width="1.2"/><line x1="570.07" y1="127.61" x2="571.61" y2="132.37" stroke="#c8c8c8" stroke-width="1.2"/><line x1="579.91" y1="124.53" x2="580.69" y2="129.47" stroke="#c8c8c8" stroke-width="1.2"/><line x1="590" y1="123.5" x2="590" y2="130.5" stroke="#ffffff" stroke-width="2.6"/><line x1="600.09" y1="124.53" x2="599.31" y2="129.47" stroke="#c8c8c8" stroke-width="1.2"/><line x1="609.93" y1="127.61" x2="608.39" y2="132.37" stroke="#c8c8c8" stroke-width="1.2"/><line x1="619.28" y1="132.66" x2="617.01" y2="137.11" stroke="#c8c8c8" stroke-width="1.2"/><line x1="627.91" y1="139.54" x2="624.97" y2="143.59" stroke="#c8c8c8" stroke-width="1.2"/><line x1="635.61" y1="148.1" x2="630.66" y2="153.05" stroke="#ffffff" stroke-width="2.6"/><line x1="642.18" y1="158.13" x2="638.14" y2="161.06" stroke="#c8c8c8" stroke-width="1.2"/><line x1="647.47" y1="169.36" x2="643.01" y2="171.63" stroke="#c8c8c8" stroke-width="1.2"/><line x1="651.34" y1="181.54" x2="646.59" y2="183.09" stroke="#c8c8c8" stroke-width="1.2"/><line x1="653.71" y1="194.36" x2="648.77" y2="195.14" stroke="#c8c8c8" stroke-width="1.2"/><line x1="654.5" y1="207.5" x2="647.5" y2="207.5" stroke="#ffffff" stroke-width="2.6"/><line x1="653.71" y1="220.64" x2="648.77" y2="219.86" stroke="#c8c8c8" stroke-width="1.2"/><line x1="651.34" y1="233.46" x2="646.59" y2="231.91" stroke="#c8c8c8" stroke-width="1.2"/><line x1="647.47" y1="245.64" x2="643.01" y2="243.37" stroke="#c8c8c8" stroke-width="1.2"/><line x1="642.18" y1="256.87" x2="638.14" y2="253.94" stroke="#c8c8c8" stroke-width="1.2"/><line x1="635.61" y1="266.9" x2="630.66" y2="261.95" stroke="#ffffff" stroke-width="2.6"/><text x="552.17" y="261.3" fill="#fff" font-size="9.8" text-anchor="middle" letter-spacing="-0.2" font-family='Liberation Sans',sans-serif>0</text><text x="539.2" y="211.1" fill="#fff" font-size="9.8" text-anchor="middle" letter-spacing="-0.2" font-family='Liberation Sans',sans-serif>10</text><text x="554.08" y="160.9" fill="#fff" font-size="9.8" text-anchor="middle" letter-spacing="-0.2" font-family='Liberation Sans',sans-serif>20</text><text x="590" y="140.1" fill="#fff" font-size="9.8" text-anchor="middle" letter-spacing="-0.2" font-family='Liberation Sans',sans-serif>30</text><text x="625.92" y="160.9" fill="#fff" font-size="9.8" text-anchor="middle" letter-spacing="-0.2" font-family='Liberation Sans',sans-serif>40</text><text x="640.8" y="211.1" fill="#fff" font-size="9.8" text-anchor="middle" letter-spacing="-0.2" font-family='Liberation Sans',sans-serif>50</text><text x="625.92" y="261.3" fill="#fff" font-size="9.8" text-anchor="middle" letter-spacing="-0.2" font-family='Liberation Sans',sans-serif>60</text><text x="590" y="182.5" fill="#fff" font-size="14" text-anchor="middle" font-family='Liberation Sans',sans-serif>lb/min</text><text x="590" y="281.5" fill="#fff" font-size="17" text-anchor="middle" font-family='Liberation Sans',sans-serif>MAF</text><ellipse cx="590" cy="207.5" rx="7.8" ry="10" fill="#a6a6a6" stroke="#222" stroke-width="1"/><defs><radialGradient id="facemap" cx="50%" cy="50%" r="50%"><stop offset="0" stop-color="#1a86ff"/><stop offset="0.3" stop-color="#0d52aa"/><stop offset="0.62" stop-color="#052858"/><stop offset="0.86" stop-color="#010a16"/><stop offset="1" stop-color="#000"/></radialGradient><linearGradient id="bezmap" x1="0" y1="1" x2="1" y2="0"><stop offset="0" stop-color="#e8e8e8"/><stop offset="0.5" stop-color="#cfcfcf"/><stop offset="1" stop-color="#bcbcbc"/></linearGradient></defs><ellipse cx="590" cy="400.5" rx="75" ry="94.5" fill="#fafafa"/><ellipse cx="590" cy="400.5" rx="68.5" ry="88" fill="none" stroke="url(#bezmap)" stroke-width="5"/><ellipse cx="590" cy="400.5" rx="65" ry="84.5" fill="url(#facemap)"/><line x1="544.39" y1="459.9" x2="549.34" y2="454.95" stroke="#ffffff" stroke-width="2.6"/><line x1="540.66" y1="454.6" x2="544.48" y2="451.38" stroke="#c8c8c8" stroke-width="1.2"/><line x1="537.28" y1="448.9" x2="541.37" y2="446.02" stroke="#c8c8c8" stroke-width="1.2"/><line x1="534.3" y1="442.85" x2="538.61" y2="440.33" stroke="#c8c8c8" stroke-width="1.2"/><line x1="531.72" y1="436.48" x2="536.24" y2="434.34" stroke="#c8c8c8" stroke-width="1.2"/><line x1="529.57" y1="429.85" x2="536.13" y2="427.41" stroke="#ffffff" stroke-width="2.6"/><line x1="527.86" y1="423.01" x2="532.68" y2="421.67" stroke="#c8c8c8" stroke-width="1.2"/><line x1="526.61" y1="416" x2="531.52" y2="415.08" stroke="#c8c8c8" stroke-width="1.2"/><line x1="525.82" y1="408.88" x2="530.8" y2="408.38" stroke="#c8c8c8" stroke-width="1.2"/><line x1="525.51" y1="401.7" x2="530.51" y2="401.63" stroke="#c8c8c8" stroke-width="1.2"/><line x1="525.66" y1="394.51" x2="532.65" y2="395.01" stroke="#ffffff" stroke-width="2.6"/><line x1="526.29" y1="387.36" x2="531.23" y2="388.14" stroke="#c8c8c8" stroke-width="1.2"/><line x1="527.39" y1="380.31" x2="532.24" y2="381.51" stroke="#c8c8c8" stroke-width="1.2"/><line x1="528.95" y1="373.4" x2="533.68" y2="375.02" stroke="#c8c8c8" stroke-width="1.2"/><line x1="530.95" y1="366.7" x2="535.53" y2="368.71" stroke="#c8c8c8" stroke-width="1.2"/><line x1="533.39" y1="360.24" x2="539.53" y2="363.6" stroke="#ffffff" stroke-width="2.6"/><line x1="536.24" y1="354.08" x2="540.41" y2="356.84" stroke="#c8c8c8" stroke-width="1.2"/><line x1="539.49" y1="348.26" x2="543.41" y2="351.37" stroke="#c8c8c8" stroke-width="1.2"/><line x1="543.11" y1="342.82" x2="546.74" y2="346.26" stroke="#c8c8c8" stroke-width="1.2"/><line x1="547.07" y1="337.81" x2="550.4" y2="341.54" stroke="#c8c8c8" stroke-width="1.2"/><line x1="551.35" y1="333.25" x2="555.54" y2="338.86" stroke="#ffffff" stroke-width="2.6"/><line x1="555.91" y1="329.19" x2="558.55" y2="333.44" stroke="#c8c8c8" stroke-width="1.2"/><line x1="560.72" y1="325.66" x2="562.99" y2="330.11" stroke="#c8c8c8" stroke-width="1.2"/><line x1="565.74" y1="322.67" x2="567.62" y2="327.3" stroke="#c8c8c8" stroke-width="1.2"/><line x1="570.95" y1="320.25" x2="572.42" y2="325.03" stroke="#c8c8c8" stroke-width="1.2"/><line x1="576.29" y1="318.42" x2="577.78" y2="325.26" stroke="#ffffff" stroke-width="2.6"/><line x1="581.73" y1="317.19" x2="582.37" y2="322.15" stroke="#c8c8c8" stroke-width="1.2"/><line x1="587.24" y1="316.58" x2="587.45" y2="321.57" stroke="#c8c8c8" stroke-width="1.2"/><line x1="592.76" y1="316.58" x2="592.55" y2="321.57" stroke="#c8c8c8" stroke-width="1.2"/><line x1="598.27" y1="317.19" x2="597.63" y2="322.15" stroke="#c8c8c8" stroke-width="1.2"/><line x1="603.71" y1="318.42" x2="602.22" y2="325.26" stroke="#ffffff" stroke-width="2.6"/><line x1="609.05" y1="320.25" x2="607.58" y2="325.03" stroke="#c8c8c8" stroke-width="1.2"/><line x1="614.26" y1="322.67" x2="612.38" y2="327.3" stroke="#c8c8c8" stroke-width="1.2"/><line x1="619.28" y1="325.66" x2="617.01" y2="330.11" stroke="#c8c8c8" stroke-width="1.2"/><line x1="624.09" y1="329.19" x2="621.45" y2="333.44" stroke="#c8c8c8" stroke-width="1.2"/><line x1="628.65" y1="333.25" x2="624.46" y2="338.86" stroke="#ffffff" stroke-width="2.6"/><line x1="632.93" y1="337.81" x2="629.6" y2="341.54" stroke="#c8c8c8" stroke-width="1.2"/><line x1="636.89" y1="342.82" x2="633.26" y2="346.26" stroke="#c8c8c8" stroke-width="1.2"/><line x1="640.51" y1="348.26" x2="636.59" y2="351.37" stroke="#c8c8c8" stroke-width="1.2"/><line x1="643.76" y1="354.08" x2="639.59" y2="356.84" stroke="#c8c8c8" stroke-width="1.2"/><line x1="646.61" y1="360.24" x2="640.47" y2="363.6" stroke="#ffffff" stroke-width="2.6"/><line x1="649.05" y1="366.7" x2="644.47" y2="368.71" stroke="#c8c8c8" stroke-width="1.2"/><line x1="651.05" y1="373.4" x2="646.32" y2="375.02" stroke="#c8c8c8" stroke-width="1.2"/><line x1="652.61" y1="380.31" x2="647.76" y2="381.51" stroke="#c8c8c8" stroke-width="1.2"/><line x1="653.71" y1="387.36" x2="648.77" y2="388.14" stroke="#c8c8c8" stroke-width="1.2"/><line x1="654.34" y1="394.51" x2="647.35" y2="395.01" stroke="#ffffff" stroke-width="2.6"/><line x1="654.49" y1="401.7" x2="649.49" y2="401.63" stroke="#c8c8c8" stroke-width="1.2"/><line x1="654.18" y1="408.88" x2="649.2" y2="408.38" stroke="#c8c8c8" stroke-width="1.2"/><line x1="653.39" y1="416" x2="648.48" y2="415.08" stroke="#c8c8c8" stroke-width="1.2"/><line x1="652.14" y1="423.01" x2="647.32" y2="421.67" stroke="#c8c8c8" stroke-width="1.2"/><line x1="650.43" y1="429.85" x2="643.87" y2="427.41" stroke="#ffffff" stroke-width="2.6"/><line x1="648.28" y1="436.48" x2="643.76" y2="434.34" stroke="#c8c8c8" stroke-width="1.2"/><line x1="645.7" y1="442.85" x2="641.39" y2="440.33" stroke="#c8c8c8" stroke-width="1.2"/><line x1="642.72" y1="448.9" x2="638.63" y2="446.02" stroke="#c8c8c8" stroke-width="1.2"/><line x1="639.34" y1="454.6" x2="635.52" y2="451.38" stroke="#c8c8c8" stroke-width="1.2"/><line x1="635.61" y1="459.9" x2="630.66" y2="454.95" stroke="#ffffff" stroke-width="2.6"/><text x="552.17" y="454.3" fill="#fff" font-size="9.8" text-anchor="middle" letter-spacing="-0.2" font-family='Liberation Sans',sans-serif>0</text><text x="542.4" y="428.91" fill="#fff" font-size="9.8" text-anchor="middle" letter-spacing="-0.2" font-family='Liberation Sans',sans-serif>10</text><text x="539.33" y="399.03" fill="#fff" font-size="9.8" text-anchor="middle" letter-spacing="-0.2" font-family='Liberation Sans',sans-serif>20</text><text x="545.41" y="370.07" fill="#fff" font-size="9.8" text-anchor="middle" letter-spacing="-0.2" font-family='Liberation Sans',sans-serif>30</text><text x="559.56" y="347.26" fill="#fff" font-size="9.8" text-anchor="middle" letter-spacing="-0.2" font-family='Liberation Sans',sans-serif>40</text><text x="579.2" y="334.72" fill="#fff" font-size="9.8" text-anchor="middle" letter-spacing="-0.2" font-family='Liberation Sans',sans-serif>50</text><text x="600.8" y="334.72" fill="#fff" font-size="9.8" text-anchor="middle" letter-spacing="-0.2" font-family='Liberation Sans',sans-serif>60</text><text x="620.44" y="347.26" fill="#fff" font-size="9.8" text-anchor="middle" letter-spacing="-0.2" font-family='Liberation Sans',sans-serif>70</text><text x="634.59" y="370.07" fill="#fff" font-size="9.8" text-anchor="middle" letter-spacing="-0.2" font-family='Liberation Sans',sans-serif>80</text><text x="640.67" y="399.03" fill="#fff" font-size="9.8" text-anchor="middle" letter-spacing="-0.2" font-family='Liberation Sans',sans-serif>90</text><text x="635.07" y="428.91" fill="#fff" font-size="9.8" text-anchor="middle" letter-spacing="-0.2" font-family='Liberation Sans',sans-serif>100</text><text x="624.01" y="454.3" fill="#fff" font-size="9.8" text-anchor="middle" letter-spacing="-0.2" font-family='Liberation Sans',sans-serif>110</text><text x="590" y="375.5" fill="#fff" font-size="14" text-anchor="middle" font-family='Liberation Sans',sans-serif>kPa</text><text x="590" y="439.5" fill="#fff" font-size="21" text-anchor="middle" font-family='Liberation Sans',sans-serif>25.2</text><text x="590" y="474.5" fill="#fff" font-size="17" text-anchor="middle" font-family='Liberation Sans',sans-serif>MAP</text><ellipse cx="590" cy="400.5" rx="7.8" ry="10" fill="#a6a6a6" stroke="#222" stroke-width="1"/><polygon points="651.5,370.33 580.76,411.72 575.48,400.94" fill="none" stroke="#d8d8d8" stroke-width="1"/><polygon points="528.43,376.27 604.73,398.78 602.17,405.29" fill="#ff5a60"/><polygon points="528.43,376.27 602.17,405.29 599.61,411.8" fill="#8c0a12"/><polygon points="588.9,400.07 604.73,398.78 602.17,405.29" fill="#ff1a26"/><polygon points="588.9,400.07 602.17,405.29 599.61,411.8" fill="#b0101a"/><defs><radialGradient id="faceect" cx="50%" cy="50%" r="50%"><stop offset="0" stop-color="#1a86ff"/><stop offset="0.3" stop-color="#0d52aa"/><stop offset="0.62" stop-color="#052858"/><stop offset="0.86" stop-color="#010a16"/><stop offset="1" stop-color="#000"/></radialGradient><linearGradient id="bezect" x1="0" y1="1" x2="1" y2="0"><stop offset="0" stop-color="#e8e8e8"/><stop offset="0.5" stop-color="#cfcfcf"/><stop offset="1" stop-color="#bcbcbc"/></linearGradient></defs><ellipse cx="1321" cy="207.5" rx="75" ry="94.5" fill="#fafafa"/><ellipse cx="1321" cy="207.5" rx="68.5" ry="88" fill="none" stroke="url(#bezect)" stroke-width="5"/><ellipse cx="1321" cy="207.5" rx="65" ry="84.5" fill="url(#faceect)"/><polygon fill="#efe08a" points="1384.8,214.05 1384.77,214.57 1384.73,215.1 1384.7,215.62 1384.66,216.14 1384.61,216.66 1384.57,217.18 1384.52,217.71 1384.47,218.23 1384.42,218.75 1384.36,219.27 1384.3,219.78 1384.24,220.3 1384.18,220.82 1384.11,221.34 1384.05,221.86 1383.98,222.37 1383.9,222.89 1383.83,223.4 1383.75,223.92 1383.67,224.43 1383.59,224.95 1383.5,225.46 1383.41,225.97 1383.32,226.48 1383.23,226.99 1383.14,227.5 1383.04,228.01 1382.94,228.52 1382.84,229.03 1382.73,229.53 1376.94,227.95 1377.04,227.48 1377.13,227.01 1377.22,226.54 1377.31,226.07 1377.4,225.59 1377.48,225.12 1377.56,224.64 1377.64,224.17 1377.72,223.69 1377.79,223.22 1377.87,222.74 1377.94,222.26 1378.01,221.78 1378.07,221.3 1378.14,220.82 1378.2,220.34 1378.26,219.86 1378.31,219.38 1378.37,218.9 1378.42,218.42 1378.47,217.94 1378.52,217.45 1378.57,216.97 1378.61,216.49 1378.65,216 1378.69,215.52 1378.73,215.04 1378.76,214.55 1378.79,214.07 1378.82,213.58"/><polygon fill="#dc1c44" points="1382.73,229.53 1382.43,230.92 1382.11,232.3 1381.77,233.68 1381.42,235.04 1381.04,236.4 1380.65,237.75 1380.24,239.09 1379.82,240.42 1379.37,241.74 1378.91,243.05 1378.43,244.35 1377.93,245.64 1377.42,246.92 1376.89,248.19 1376.34,249.44 1375.78,250.68 1375.2,251.91 1374.6,253.12 1373.99,254.33 1373.36,255.51 1372.72,256.69 1372.06,257.84 1371.38,258.99 1370.7,260.12 1369.99,261.23 1369.27,262.32 1368.54,263.4 1367.79,264.47 1367.03,265.51 1366.25,266.54 1362.01,262.3 1362.71,261.35 1363.4,260.37 1364.08,259.39 1364.75,258.39 1365.4,257.37 1366.04,256.34 1366.66,255.29 1367.27,254.23 1367.87,253.15 1368.45,252.06 1369.02,250.96 1369.58,249.85 1370.12,248.72 1370.64,247.58 1371.15,246.43 1371.65,245.26 1372.13,244.09 1372.6,242.9 1373.05,241.7 1373.48,240.5 1373.9,239.28 1374.3,238.06 1374.69,236.82 1375.06,235.58 1375.42,234.32 1375.75,233.06 1376.08,231.8 1376.38,230.52 1376.67,229.24 1376.94,227.95"/><line x1="1275.39" y1="266.9" x2="1280.34" y2="261.95" stroke="#ffffff" stroke-width="2.6"/><line x1="1270.35" y1="259.5" x2="1274.27" y2="256.41" stroke="#c8c8c8" stroke-width="1.2"/><line x1="1266" y1="251.39" x2="1270.27" y2="248.78" stroke="#c8c8c8" stroke-width="1.2"/><line x1="1262.42" y1="242.67" x2="1266.97" y2="240.57" stroke="#c8c8c8" stroke-width="1.2"/><line x1="1259.66" y1="233.46" x2="1264.41" y2="231.91" stroke="#c8c8c8" stroke-width="1.2"/><line x1="1257.74" y1="223.89" x2="1264.6" y2="222.52" stroke="#ffffff" stroke-width="2.6"/><line x1="1256.7" y1="214.09" x2="1261.68" y2="213.7" stroke="#c8c8c8" stroke-width="1.2"/><line x1="1256.55" y1="204.2" x2="1261.55" y2="204.4" stroke="#c8c8c8" stroke-width="1.2"/><line x1="1257.29" y1="194.36" x2="1262.23" y2="195.14" stroke="#c8c8c8" stroke-width="1.2"/><line x1="1258.92" y1="184.7" x2="1263.73" y2="186.06" stroke="#c8c8c8" stroke-width="1.2"/><line x1="1261.41" y1="175.35" x2="1267.88" y2="178.03" stroke="#ffffff" stroke-width="2.6"/><line x1="1264.72" y1="166.46" x2="1269.09" y2="168.9" stroke="#c8c8c8" stroke-width="1.2"/><line x1="1268.82" y1="158.13" x2="1272.86" y2="161.06" stroke="#c8c8c8" stroke-width="1.2"/><line x1="1273.64" y1="150.48" x2="1277.31" y2="153.87" stroke="#c8c8c8" stroke-width="1.2"/><line x1="1279.11" y1="143.63" x2="1282.36" y2="147.43" stroke="#c8c8c8" stroke-width="1.2"/><line x1="1285.17" y1="137.66" x2="1289.05" y2="143.48" stroke="#ffffff" stroke-width="2.6"/><line x1="1291.72" y1="132.66" x2="1293.99" y2="137.11" stroke="#c8c8c8" stroke-width="1.2"/><line x1="1298.68" y1="128.69" x2="1300.41" y2="133.38" stroke="#c8c8c8" stroke-width="1.2"/><line x1="1305.94" y1="125.82" x2="1307.11" y2="130.68" stroke="#c8c8c8" stroke-width="1.2"/><line x1="1313.42" y1="124.08" x2="1314.01" y2="129.05" stroke="#c8c8c8" stroke-width="1.2"/><line x1="1321" y1="123.5" x2="1321" y2="130.5" stroke="#ffffff" stroke-width="2.6"/><line x1="1328.58" y1="124.08" x2="1327.99" y2="129.05" stroke="#c8c8c8" stroke-width="1.2"/><line x1="1336.06" y1="125.82" x2="1334.89" y2="130.68" stroke="#c8c8c8" stroke-width="1.2"/><line x1="1343.32" y1="128.69" x2="1341.59" y2="133.38" stroke="#c8c8c8" stroke-width="1.2"/><line x1="1350.28" y1="132.66" x2="1348.01" y2="137.11" stroke="#c8c8c8" stroke-width="1.2"/><line x1="1356.83" y1="137.66" x2="1352.95" y2="143.48" stroke="#ffffff" stroke-width="2.6"/><line x1="1362.89" y1="143.63" x2="1359.64" y2="147.43" stroke="#c8c8c8" stroke-width="1.2"/><line x1="1368.36" y1="150.48" x2="1364.69" y2="153.87" stroke="#c8c8c8" stroke-width="1.2"/><line x1="1373.18" y1="158.13" x2="1369.14" y2="161.06" stroke="#c8c8c8" stroke-width="1.2"/><line x1="1377.28" y1="166.46" x2="1372.91" y2="168.9" stroke="#c8c8c8" stroke-width="1.2"/><line x1="1380.59" y1="175.35" x2="1374.12" y2="178.03" stroke="#ffffff" stroke-width="2.6"/><line x1="1383.08" y1="184.7" x2="1378.27" y2="186.06" stroke="#c8c8c8" stroke-width="1.2"/><line x1="1384.71" y1="194.36" x2="1379.77" y2="195.14" stroke="#c8c8c8" stroke-width="1.2"/><line x1="1385.45" y1="204.2" x2="1380.45" y2="204.4" stroke="#c8c8c8" stroke-width="1.2"/><line x1="1385.3" y1="214.09" x2="1380.32" y2="213.7" stroke="#c8c8c8" stroke-width="1.2"/><line x1="1384.26" y1="223.89" x2="1377.4" y2="222.52" stroke="#ffffff" stroke-width="2.6"/><line x1="1382.34" y1="233.46" x2="1377.59" y2="231.91" stroke="#c8c8c8" stroke-width="1.2"/><line x1="1379.58" y1="242.67" x2="1375.03" y2="240.57" stroke="#c8c8c8" stroke-width="1.2"/><line x1="1376" y1="251.39" x2="1371.73" y2="248.78" stroke="#c8c8c8" stroke-width="1.2"/><line x1="1371.65" y1="259.5" x2="1367.73" y2="256.41" stroke="#c8c8c8" stroke-width="1.2"/><line x1="1366.61" y1="266.9" x2="1361.66" y2="261.95" stroke="#ffffff" stroke-width="2.6"/><text x="1285.08" y="261.3" fill="#fff" font-size="9.8" text-anchor="middle" letter-spacing="-0.2" font-family='Liberation Sans',sans-serif>50</text><text x="1271.18" y="224.95" fill="#fff" font-size="9.8" text-anchor="middle" letter-spacing="-0.2" font-family='Liberation Sans',sans-serif>75</text><text x="1276.56" y="183.93" fill="#fff" font-size="9.8" text-anchor="middle" letter-spacing="-0.2" font-family='Liberation Sans',sans-serif>100</text><text x="1294.28" y="152.07" fill="#fff" font-size="9.8" text-anchor="middle" letter-spacing="-0.2" font-family='Liberation Sans',sans-serif>125</text><text x="1321" y="140.1" fill="#fff" font-size="9.8" text-anchor="middle" letter-spacing="-0.2" font-family='Liberation Sans',sans-serif>150</text><text x="1347.72" y="152.07" fill="#fff" font-size="9.8" text-anchor="middle" letter-spacing="-0.2" font-family='Liberation Sans',sans-serif>175</text><text x="1365.44" y="183.93" fill="#fff" font-size="9.8" text-anchor="middle" letter-spacing="-0.2" font-family='Liberation Sans',sans-serif>200</text><text x="1368.18" y="224.95" fill="#fff" font-size="9.8" text-anchor="middle" letter-spacing="-0.2" font-family='Liberation Sans',sans-serif>225</text><text x="1355.01" y="261.3" fill="#fff" font-size="9.8" text-anchor="middle" letter-spacing="-0.2" font-family='Liberation Sans',sans-serif>250</text><text x="1321" y="182.5" fill="#fff" font-size="14" text-anchor="middle" font-family='Liberation Sans',sans-serif>°F</text><text x="1321" y="246.5" fill="#fff" font-size="21" text-anchor="middle" font-family='Liberation Sans',sans-serif>190</text><text x="1321" y="281.5" fill="#fff" font-size="17" text-anchor="middle" font-family='Liberation Sans',sans-serif>ECT</text><ellipse cx="1321" cy="207.5" rx="7.8" ry="10" fill="#a6a6a6" stroke="#222" stroke-width="1"/><polygon points="1384.52,184.93 1310.74,217.51 1306.72,206.21" fill="none" stroke="#d8d8d8" stroke-width="1"/><polygon points="1373.18,159.73 1305.96,211.78 1310.69,216.94" fill="#ff5a60"/><polygon points="1373.18,159.73 1310.69,216.94 1315.41,222.11" fill="#8c0a12"/><polygon points="1321.93,206.64 1305.96,211.78 1310.69,216.94" fill="#ff1a26"/><polygon points="1321.93,206.64 1310.69,216.94 1315.41,222.11" fill="#b0101a"/><defs><radialGradient id="faceiat" cx="50%" cy="50%" r="50%"><stop offset="0" stop-color="#1a86ff"/><stop offset="0.3" stop-color="#0d52aa"/><stop offset="0.62" stop-color="#052858"/><stop offset="0.86" stop-color="#010a16"/><stop offset="1" stop-color="#000"/></radialGradient><linearGradient id="beziat" x1="0" y1="1" x2="1" y2="0"><stop offset="0" stop-color="#e8e8e8"/><stop offset="0.5" stop-color="#cfcfcf"/><stop offset="1" stop-color="#bcbcbc"/></linearGradient></defs><ellipse cx="1321" cy="400.5" rx="75" ry="94.5" fill="#fafafa"/><ellipse cx="1321" cy="400.5" rx="68.5" ry="88" fill="none" stroke="url(#beziat)" stroke-width="5"/><ellipse cx="1321" cy="400.5" rx="65" ry="84.5" fill="url(#faceiat)"/><polygon fill="#efe08a" points="1345.49,323.36 1346.26,323.78 1347.03,324.22 1347.79,324.67 1348.55,325.13 1349.31,325.61 1350.06,326.1 1350.8,326.6 1351.54,327.12 1352.27,327.65 1353,328.19 1353.72,328.74 1354.44,329.3 1355.15,329.88 1355.86,330.47 1356.56,331.07 1357.25,331.69 1357.94,332.31 1358.62,332.95 1359.29,333.6 1359.96,334.25 1360.62,334.93 1361.28,335.61 1361.92,336.3 1362.56,337.01 1363.2,337.72 1363.82,338.45 1364.44,339.18 1365.05,339.93 1365.66,340.69 1366.25,341.46 1362.01,345.7 1361.47,344.99 1360.92,344.28 1360.37,343.59 1359.81,342.91 1359.24,342.23 1358.67,341.57 1358.09,340.91 1357.5,340.27 1356.91,339.64 1356.31,339.02 1355.7,338.4 1355.09,337.8 1354.47,337.21 1353.85,336.63 1353.22,336.06 1352.59,335.5 1351.95,334.96 1351.3,334.42 1350.65,333.9 1350,333.38 1349.34,332.88 1348.68,332.39 1348.01,331.91 1347.33,331.45 1346.65,330.99 1345.97,330.55 1345.28,330.12 1344.59,329.7 1343.9,329.29 1343.2,328.9"/><polygon fill="#dc1c44" points="1366.25,341.46 1368.56,344.63 1370.74,347.95 1372.78,351.42 1374.67,355.02 1376.43,358.75 1378.02,362.59 1379.47,366.54 1380.75,370.58 1381.87,374.7 1382.82,378.89 1383.6,383.14 1384.21,387.44 1384.65,391.77 1384.91,396.13 1385,400.5 1384.91,404.87 1384.65,409.23 1384.21,413.56 1383.6,417.86 1382.82,422.11 1381.87,426.3 1380.75,430.42 1379.47,434.46 1378.02,438.41 1376.43,442.25 1374.67,445.98 1372.78,449.58 1370.74,453.05 1368.56,456.37 1366.25,459.54 1362.01,455.3 1364.1,452.36 1366.07,449.27 1367.92,446.05 1369.64,442.71 1371.23,439.25 1372.68,435.68 1373.99,432.02 1375.15,428.27 1376.16,424.45 1377.02,420.56 1377.73,416.61 1378.29,412.62 1378.68,408.6 1378.92,404.56 1379,400.5 1378.92,396.44 1378.68,392.4 1378.29,388.38 1377.73,384.39 1377.02,380.44 1376.16,376.55 1375.15,372.73 1373.99,368.98 1372.68,365.32 1371.23,361.75 1369.64,358.29 1367.92,354.95 1366.07,351.73 1364.1,348.64 1362.01,345.7"/><line x1="1275.39" y1="459.9" x2="1280.34" y2="454.95" stroke="#ffffff" stroke-width="2.6"/><line x1="1271.95" y1="455.05" x2="1275.76" y2="451.81" stroke="#c8c8c8" stroke-width="1.2"/><line x1="1268.82" y1="449.87" x2="1272.86" y2="446.94" stroke="#c8c8c8" stroke-width="1.2"/><line x1="1266" y1="444.39" x2="1270.27" y2="441.78" stroke="#c8c8c8" stroke-width="1.2"/><line x1="1263.53" y1="438.64" x2="1267.99" y2="436.37" stroke="#c8c8c8" stroke-width="1.2"/><line x1="1261.41" y1="432.65" x2="1267.88" y2="429.97" stroke="#ffffff" stroke-width="2.6"/><line x1="1259.66" y1="426.46" x2="1264.41" y2="424.91" stroke="#c8c8c8" stroke-width="1.2"/><line x1="1258.28" y1="420.11" x2="1263.14" y2="418.94" stroke="#c8c8c8" stroke-width="1.2"/><line x1="1257.29" y1="413.64" x2="1262.23" y2="412.86" stroke="#c8c8c8" stroke-width="1.2"/><line x1="1256.7" y1="407.09" x2="1261.68" y2="406.7" stroke="#c8c8c8" stroke-width="1.2"/><line x1="1256.5" y1="400.5" x2="1263.5" y2="400.5" stroke="#ffffff" stroke-width="2.6"/><line x1="1256.7" y1="393.91" x2="1261.68" y2="394.3" stroke="#c8c8c8" stroke-width="1.2"/><line x1="1257.29" y1="387.36" x2="1262.23" y2="388.14" stroke="#c8c8c8" stroke-width="1.2"/><line x1="1258.28" y1="380.89" x2="1263.14" y2="382.06" stroke="#c8c8c8" stroke-width="1.2"/><line x1="1259.66" y1="374.54" x2="1264.41" y2="376.09" stroke="#c8c8c8" stroke-width="1.2"/><line x1="1261.41" y1="368.35" x2="1267.88" y2="371.03" stroke="#ffffff" stroke-width="2.6"/><line x1="1263.53" y1="362.36" x2="1267.99" y2="364.63" stroke="#c8c8c8" stroke-width="1.2"/><line x1="1266" y1="356.61" x2="1270.27" y2="359.22" stroke="#c8c8c8" stroke-width="1.2"/><line x1="1268.82" y1="351.13" x2="1272.86" y2="354.06" stroke="#c8c8c8" stroke-width="1.2"/><line x1="1271.95" y1="345.95" x2="1275.76" y2="349.19" stroke="#c8c8c8" stroke-width="1.2"/><line x1="1275.39" y1="341.1" x2="1280.34" y2="346.05" stroke="#ffffff" stroke-width="2.6"/><line x1="1279.11" y1="336.63" x2="1282.36" y2="340.43" stroke="#c8c8c8" stroke-width="1.2"/><line x1="1283.09" y1="332.54" x2="1286.03" y2="336.59" stroke="#c8c8c8" stroke-width="1.2"/><line x1="1287.3" y1="328.88" x2="1289.91" y2="333.14" stroke="#c8c8c8" stroke-width="1.2"/><line x1="1291.72" y1="325.66" x2="1293.99" y2="330.11" stroke="#c8c8c8" stroke-width="1.2"/><line x1="1296.32" y1="322.89" x2="1299" y2="329.36" stroke="#ffffff" stroke-width="2.6"/><line x1="1301.07" y1="320.61" x2="1302.61" y2="325.37" stroke="#c8c8c8" stroke-width="1.2"/><line x1="1305.94" y1="318.82" x2="1307.11" y2="323.68" stroke="#c8c8c8" stroke-width="1.2"/><line x1="1310.91" y1="317.53" x2="1311.69" y2="322.47" stroke="#c8c8c8" stroke-width="1.2"/><line x1="1315.94" y1="316.76" x2="1316.33" y2="321.74" stroke="#c8c8c8" stroke-width="1.2"/><line x1="1321" y1="316.5" x2="1321" y2="323.5" stroke="#ffffff" stroke-width="2.6"/><line x1="1326.06" y1="316.76" x2="1325.67" y2="321.74" stroke="#c8c8c8" stroke-width="1.2"/><line x1="1331.09" y1="317.53" x2="1330.31" y2="322.47" stroke="#c8c8c8" stroke-width="1.2"/><line x1="1336.06" y1="318.82" x2="1334.89" y2="323.68" stroke="#c8c8c8" stroke-width="1.2"/><line x1="1340.93" y1="320.61" x2="1339.39" y2="325.37" stroke="#c8c8c8" stroke-width="1.2"/><line x1="1345.68" y1="322.89" x2="1343" y2="329.36" stroke="#ffffff" stroke-width="2.6"/><line x1="1350.28" y1="325.66" x2="1348.01" y2="330.11" stroke="#c8c8c8" stroke-width="1.2"/><line x1="1354.7" y1="328.88" x2="1352.09" y2="333.14" stroke="#c8c8c8" stroke-width="1.2"/><line x1="1358.91" y1="332.54" x2="1355.97" y2="336.59" stroke="#c8c8c8" stroke-width="1.2"/><line x1="1362.89" y1="336.63" x2="1359.64" y2="340.43" stroke="#c8c8c8" stroke-width="1.2"/><line x1="1366.61" y1="341.1" x2="1361.66" y2="346.05" stroke="#ffffff" stroke-width="2.6"/><line x1="1370.05" y1="345.95" x2="1366.24" y2="349.19" stroke="#c8c8c8" stroke-width="1.2"/><line x1="1373.18" y1="351.13" x2="1369.14" y2="354.06" stroke="#c8c8c8" stroke-width="1.2"/><line x1="1376" y1="356.61" x2="1371.73" y2="359.22" stroke="#c8c8c8" stroke-width="1.2"/><line x1="1378.47" y1="362.36" x2="1374.01" y2="364.63" stroke="#c8c8c8" stroke-width="1.2"/><line x1="1380.59" y1="368.35" x2="1374.12" y2="371.03" stroke="#ffffff" stroke-width="2.6"/><line x1="1382.34" y1="374.54" x2="1377.59" y2="376.09" stroke="#c8c8c8" stroke-width="1.2"/><line x1="1383.72" y1="380.89" x2="1378.86" y2="382.06" stroke="#c8c8c8" stroke-width="1.2"/><line x1="1384.71" y1="387.36" x2="1379.77" y2="388.14" stroke="#c8c8c8" stroke-width="1.2"/><line x1="1385.3" y1="393.91" x2="1380.32" y2="394.3" stroke="#c8c8c8" stroke-width="1.2"/><line x1="1385.5" y1="400.5" x2="1378.5" y2="400.5" stroke="#ffffff" stroke-width="2.6"/><line x1="1385.3" y1="407.09" x2="1380.32" y2="406.7" stroke="#c8c8c8" stroke-width="1.2"/><line x1="1384.71" y1="413.64" x2="1379.77" y2="412.86" stroke="#c8c8c8" stroke-width="1.2"/><line x1="1383.72" y1="420.11" x2="1378.86" y2="418.94" stroke="#c8c8c8" stroke-width="1.2"/><line x1="1382.34" y1="426.46" x2="1377.59" y2="424.91" stroke="#c8c8c8" stroke-width="1.2"/><line x1="1380.59" y1="432.65" x2="1374.12" y2="429.97" stroke="#ffffff" stroke-width="2.6"/><line x1="1378.47" y1="438.64" x2="1374.01" y2="436.37" stroke="#c8c8c8" stroke-width="1.2"/><line x1="1376" y1="444.39" x2="1371.73" y2="441.78" stroke="#c8c8c8" stroke-width="1.2"/><line x1="1373.18" y1="449.87" x2="1369.14" y2="446.94" stroke="#c8c8c8" stroke-width="1.2"/><line x1="1370.05" y1="455.05" x2="1366.24" y2="451.81" stroke="#c8c8c8" stroke-width="1.2"/><line x1="1366.61" y1="459.9" x2="1361.66" y2="454.95" stroke="#ffffff" stroke-width="2.6"/><text x="1285.08" y="454.3" fill="#fff" font-size="9.8" text-anchor="middle" letter-spacing="-0.2" font-family='Liberation Sans',sans-serif>30</text><text x="1274.07" y="431.27" fill="#fff" font-size="9.8" text-anchor="middle" letter-spacing="-0.2" font-family='Liberation Sans',sans-serif>40</text><text x="1270.2" y="404.1" fill="#fff" font-size="9.8" text-anchor="middle" letter-spacing="-0.2" font-family='Liberation Sans',sans-serif>50</text><text x="1274.07" y="376.93" fill="#fff" font-size="9.8" text-anchor="middle" letter-spacing="-0.2" font-family='Liberation Sans',sans-serif>60</text><text x="1285.08" y="353.9" fill="#fff" font-size="9.8" text-anchor="middle" letter-spacing="-0.2" font-family='Liberation Sans',sans-serif>70</text><text x="1301.56" y="338.5" fill="#fff" font-size="9.8" text-anchor="middle" letter-spacing="-0.2" font-family='Liberation Sans',sans-serif>80</text><text x="1321" y="333.1" fill="#fff" font-size="9.8" text-anchor="middle" letter-spacing="-0.2" font-family='Liberation Sans',sans-serif>90</text><text x="1339.41" y="338.5" fill="#fff" font-size="9.8" text-anchor="middle" letter-spacing="-0.2" font-family='Liberation Sans',sans-serif>100</text><text x="1355.01" y="353.9" fill="#fff" font-size="9.8" text-anchor="middle" letter-spacing="-0.2" font-family='Liberation Sans',sans-serif>110</text><text x="1365.44" y="376.93" fill="#fff" font-size="9.8" text-anchor="middle" letter-spacing="-0.2" font-family='Liberation Sans',sans-serif>120</text><text x="1369.1" y="404.1" fill="#fff" font-size="9.8" text-anchor="middle" letter-spacing="-0.2" font-family='Liberation Sans',sans-serif>130</text><text x="1365.44" y="431.27" fill="#fff" font-size="9.8" text-anchor="middle" letter-spacing="-0.2" font-family='Liberation Sans',sans-serif>140</text><text x="1355.01" y="454.3" fill="#fff" font-size="9.8" text-anchor="middle" letter-spacing="-0.2" font-family='Liberation Sans',sans-serif>150</text><text x="1321" y="375.5" fill="#fff" font-size="14" text-anchor="middle" font-family='Liberation Sans',sans-serif>°F</text><text x="1321" y="439.5" fill="#fff" font-size="21" text-anchor="middle" font-family='Liberation Sans',sans-serif>102</text><text x="1321" y="474.5" fill="#fff" font-size="17" text-anchor="middle" font-family='Liberation Sans',sans-serif>IAT</text><ellipse cx="1321" cy="400.5" rx="7.8" ry="10" fill="#a6a6a6" stroke="#222" stroke-width="1"/><polygon points="1357.67,331.35 1319.22,416.67 1308.62,411.05" fill="none" stroke="#d8d8d8" stroke-width="1"/><polygon points="1350.28,328.09 1308.72,412.19 1315.21,414.81" fill="#ff5a60"/><polygon points="1350.28,328.09 1315.21,414.81 1321.7,417.44" fill="#8c0a12"/><polygon points="1321.52,399.2 1308.72,412.19 1315.21,414.81" fill="#ff1a26"/><polygon points="1321.52,399.2 1315.21,414.81 1321.7,417.44" fill="#b0101a"/></svg>
<svg style="position:absolute;left:0;top:0" width="2307" height="1705" viewBox="0 0 2307 1705"><defs>
<linearGradient id="barH" x1="0" y1="0" x2="1" y2="0"><stop offset="0" stop-color="#03101e"/><stop offset="0.14" stop-color="#082e62"/><stop offset="0.36" stop-color="#0f52ac"/><stop offset="0.5" stop-color="#1c80f4"/><stop offset="0.64" stop-color="#0f52ac"/><stop offset="0.86" stop-color="#082e62"/><stop offset="1" stop-color="#03101e"/></linearGradient>
<linearGradient id="barV" x1="0" y1="0" x2="0" y2="1"><stop offset="0" stop-color="#02070c" stop-opacity="0.93"/><stop offset="0.2" stop-color="#02070c" stop-opacity="0.72"/><stop offset="0.4" stop-color="#02070c" stop-opacity="0.35"/><stop offset="0.5" stop-color="#02070c" stop-opacity="0.05"/><stop offset="0.6" stop-color="#02070c" stop-opacity="0.35"/><stop offset="0.8" stop-color="#02070c" stop-opacity="0.72"/><stop offset="1" stop-color="#02070c" stop-opacity="0.93"/></linearGradient>
<radialGradient id="barG" cx="50%" cy="50%" r="50%"><stop offset="0" stop-color="#2ee048"/><stop offset="1" stop-color="#1fb02e"/></radialGradient>
</defs><line x1="581.5" y1="812" x2="585.5" y2="812" stroke="#fff" stroke-width="1"/><text x="585.5" y="816.6" fill="#fff" font-size="13" font-family='Liberation Sans',sans-serif letter-spacing="-0.6">0</text><line x1="581.5" y1="759.2" x2="585.5" y2="759.2" stroke="#fff" stroke-width="1"/><text x="585.5" y="763.8" fill="#fff" font-size="13" font-family='Liberation Sans',sans-serif letter-spacing="-0.6">2</text><line x1="581.5" y1="706.4" x2="585.5" y2="706.4" stroke="#fff" stroke-width="1"/><text x="585.5" y="711" fill="#fff" font-size="13" font-family='Liberation Sans',sans-serif letter-spacing="-0.6">4</text><line x1="581.5" y1="653.6" x2="585.5" y2="653.6" stroke="#fff" stroke-width="1"/><text x="585.5" y="658.2" fill="#fff" font-size="13" font-family='Liberation Sans',sans-serif letter-spacing="-0.6">6</text><line x1="581.5" y1="600.8" x2="585.5" y2="600.8" stroke="#fff" stroke-width="1"/><text x="585.5" y="605.4" fill="#fff" font-size="13" font-family='Liberation Sans',sans-serif letter-spacing="-0.6">8</text><line x1="581.5" y1="548" x2="585.5" y2="548" stroke="#fff" stroke-width="1"/><text x="585.5" y="552.6" fill="#fff" font-size="13" font-family='Liberation Sans',sans-serif letter-spacing="-0.6">10</text><line x1="653.5" y1="812" x2="657.5" y2="812" stroke="#fff" stroke-width="1"/><text x="657.5" y="816.6" fill="#fff" font-size="13" font-family='Liberation Sans',sans-serif letter-spacing="-0.6">0</text><line x1="653.5" y1="724" x2="657.5" y2="724" stroke="#fff" stroke-width="1"/><text x="657.5" y="728.6" fill="#fff" font-size="13" font-family='Liberation Sans',sans-serif letter-spacing="-0.6">15</text><line x1="653.5" y1="636" x2="657.5" y2="636" stroke="#fff" stroke-width="1"/><text x="657.5" y="640.6" fill="#fff" font-size="13" font-family='Liberation Sans',sans-serif letter-spacing="-0.6">30</text><line x1="653.5" y1="548" x2="657.5" y2="548" stroke="#fff" stroke-width="1"/><text x="657.5" y="552.6" fill="#fff" font-size="13" font-family='Liberation Sans',sans-serif letter-spacing="-0.6">45</text><line x1="737" y1="812" x2="741" y2="812" stroke="#fff" stroke-width="1"/><text x="741" y="816.6" fill="#fff" font-size="13" font-family='Liberation Sans',sans-serif letter-spacing="-0.6">0</text><line x1="737" y1="759.2" x2="741" y2="759.2" stroke="#fff" stroke-width="1"/><text x="741" y="763.8" fill="#fff" font-size="13" font-family='Liberation Sans',sans-serif letter-spacing="-0.6">20</text><line x1="737" y1="706.4" x2="741" y2="706.4" stroke="#fff" stroke-width="1"/><text x="741" y="711" fill="#fff" font-size="13" font-family='Liberation Sans',sans-serif letter-spacing="-0.6">40</text><line x1="737" y1="653.6" x2="741" y2="653.6" stroke="#fff" stroke-width="1"/><text x="741" y="658.2" fill="#fff" font-size="13" font-family='Liberation Sans',sans-serif letter-spacing="-0.6">60</text><line x1="737" y1="600.8" x2="741" y2="600.8" stroke="#fff" stroke-width="1"/><text x="741" y="605.4" fill="#fff" font-size="13" font-family='Liberation Sans',sans-serif letter-spacing="-0.6">80</text><line x1="737" y1="548" x2="741" y2="548" stroke="#fff" stroke-width="1"/><text x="741" y="552.6" fill="#fff" font-size="13" font-family='Liberation Sans',sans-serif letter-spacing="-0.6">100</text><line x1="862" y1="812" x2="866" y2="812" stroke="#fff" stroke-width="1"/><text x="866" y="816.6" fill="#fff" font-size="13" font-family='Liberation Sans',sans-serif letter-spacing="-0.6">0</text><line x1="862" y1="759.2" x2="866" y2="759.2" stroke="#fff" stroke-width="1"/><text x="866" y="763.8" fill="#fff" font-size="13" font-family='Liberation Sans',sans-serif letter-spacing="-0.6">5</text><line x1="862" y1="706.4" x2="866" y2="706.4" stroke="#fff" stroke-width="1"/><text x="866" y="711" fill="#fff" font-size="13" font-family='Liberation Sans',sans-serif letter-spacing="-0.6">10</text><line x1="862" y1="653.6" x2="866" y2="653.6" stroke="#fff" stroke-width="1"/><text x="866" y="658.2" fill="#fff" font-size="13" font-family='Liberation Sans',sans-serif letter-spacing="-0.6">15</text><line x1="862" y1="600.8" x2="866" y2="600.8" stroke="#fff" stroke-width="1"/><text x="866" y="605.4" fill="#fff" font-size="13" font-family='Liberation Sans',sans-serif letter-spacing="-0.6">20</text><line x1="862" y1="548" x2="866" y2="548" stroke="#fff" stroke-width="1"/><text x="866" y="552.6" fill="#fff" font-size="13" font-family='Liberation Sans',sans-serif letter-spacing="-0.6">25</text><line x1="939" y1="812" x2="943" y2="812" stroke="#fff" stroke-width="1"/><text x="943" y="816.6" fill="#fff" font-size="13" font-family='Liberation Sans',sans-serif letter-spacing="-0.6">0</text><line x1="939" y1="548" x2="943" y2="548" stroke="#fff" stroke-width="1"/><text x="943" y="552.6" fill="#fff" font-size="13" font-family='Liberation Sans',sans-serif letter-spacing="-0.6">1</text><line x1="1009" y1="812" x2="1013" y2="812" stroke="#fff" stroke-width="1"/><text x="1013" y="816.6" fill="#fff" font-size="13" font-family='Liberation Sans',sans-serif letter-spacing="-0.6">0</text><line x1="1009" y1="548" x2="1013" y2="548" stroke="#fff" stroke-width="1"/><text x="1013" y="552.6" fill="#fff" font-size="13" font-family='Liberation Sans',sans-serif letter-spacing="-0.6">1</text><line x1="1075" y1="812" x2="1079" y2="812" stroke="#fff" stroke-width="1"/><text x="1079" y="816.6" fill="#fff" font-size="13" font-family='Liberation Sans',sans-serif letter-spacing="-0.6">0</text><line x1="1075" y1="759.2" x2="1079" y2="759.2" stroke="#fff" stroke-width="1"/><text x="1079" y="763.8" fill="#fff" font-size="13" font-family='Liberation Sans',sans-serif letter-spacing="-0.6">5</text><line x1="1075" y1="706.4" x2="1079" y2="706.4" stroke="#fff" stroke-width="1"/><text x="1079" y="711" fill="#fff" font-size="13" font-family='Liberation Sans',sans-serif letter-spacing="-0.6">10</text><line x1="1075" y1="653.6" x2="1079" y2="653.6" stroke="#fff" stroke-width="1"/><text x="1079" y="658.2" fill="#fff" font-size="13" font-family='Liberation Sans',sans-serif letter-spacing="-0.6">15</text><line x1="1075" y1="600.8" x2="1079" y2="600.8" stroke="#fff" stroke-width="1"/><text x="1079" y="605.4" fill="#fff" font-size="13" font-family='Liberation Sans',sans-serif letter-spacing="-0.6">20</text><line x1="1075" y1="548" x2="1079" y2="548" stroke="#fff" stroke-width="1"/><text x="1079" y="552.6" fill="#fff" font-size="13" font-family='Liberation Sans',sans-serif letter-spacing="-0.6">25</text><line x1="1173" y1="548" x2="1177" y2="548" stroke="#fff" stroke-width="1"/><text x="1177" y="552.6" fill="#fff" font-size="13" font-family='Liberation Sans',sans-serif letter-spacing="-0.6">25.0</text><line x1="1173" y1="614" x2="1177" y2="614" stroke="#fff" stroke-width="1"/><text x="1177" y="618.6" fill="#fff" font-size="13" font-family='Liberation Sans',sans-serif letter-spacing="-0.6">12.5</text><line x1="1173" y1="680" x2="1177" y2="680" stroke="#fff" stroke-width="1"/><text x="1177" y="684.6" fill="#fff" font-size="13" font-family='Liberation Sans',sans-serif letter-spacing="-0.6">0.0</text><line x1="1173" y1="746" x2="1177" y2="746" stroke="#fff" stroke-width="1"/><text x="1177" y="750.6" fill="#fff" font-size="13" font-family='Liberation Sans',sans-serif letter-spacing="-0.6">-12.5</text><line x1="1173" y1="812" x2="1177" y2="812" stroke="#fff" stroke-width="1"/><text x="1177" y="816.6" fill="#fff" font-size="13" font-family='Liberation Sans',sans-serif letter-spacing="-0.6">-25</text><line x1="1308" y1="548" x2="1312" y2="548" stroke="#fff" stroke-width="1"/><text x="1312" y="552.6" fill="#fff" font-size="13" font-family='Liberation Sans',sans-serif letter-spacing="-0.6">25.0</text><line x1="1308" y1="614" x2="1312" y2="614" stroke="#fff" stroke-width="1"/><text x="1312" y="618.6" fill="#fff" font-size="13" font-family='Liberation Sans',sans-serif letter-spacing="-0.6">12.5</text><line x1="1308" y1="680" x2="1312" y2="680" stroke="#fff" stroke-width="1"/><text x="1312" y="684.6" fill="#fff" font-size="13" font-family='Liberation Sans',sans-serif letter-spacing="-0.6">0.0</text><line x1="1308" y1="746" x2="1312" y2="746" stroke="#fff" stroke-width="1"/><text x="1312" y="750.6" fill="#fff" font-size="13" font-family='Liberation Sans',sans-serif letter-spacing="-0.6">-12.5</text><line x1="1308" y1="812" x2="1312" y2="812" stroke="#fff" stroke-width="1"/><text x="1312" y="816.6" fill="#fff" font-size="13" font-family='Liberation Sans',sans-serif letter-spacing="-0.6">-25</text><rect x="528" y="540" width="53.5" height="282" fill="#f0f0f0"/><rect x="530" y="542" width="49.5" height="278" fill="#c8c8c8"/><rect x="533" y="545" width="44" height="272.5" fill="url(#barH)"/><rect x="533" y="545" width="44" height="272.5" fill="url(#barV)"/><rect x="579.5" y="548" width="3" height="237.6" fill="#d81b48"/><text x="533" y="537" fill="#fff" font-size="16.5" font-family='Liberation Sans',sans-serif>KR</text><rect x="601" y="540" width="52.5" height="282" fill="#f0f0f0"/><rect x="603" y="542" width="48.5" height="278" fill="#c8c8c8"/><rect x="606" y="545" width="43" height="272.5" fill="url(#barH)"/><rect x="606" y="545" width="43" height="272.5" fill="url(#barV)"/><rect x="606" y="671.2" width="43" height="146.3" fill="url(#barG)"/><line x1="606" y1="671.2" x2="649" y2="671.2" stroke="#fff" stroke-width="2"/><line x1="606" y1="579.68" x2="649" y2="579.68" stroke="#b8b8b8" stroke-width="1"/><text x="606" y="537" fill="#fff" font-size="16.5" font-family='Liberation Sans',sans-serif>Advance</text><text x="656.5" y="840" fill="#fff" font-size="19" text-anchor="end" font-family='Liberation Sans',sans-serif>24</text><rect x="683.5" y="540" width="53.5" height="282" fill="#f0f0f0"/><rect x="685.5" y="542" width="49.5" height="278" fill="#c8c8c8"/><rect x="688.5" y="545" width="44" height="272.5" fill="url(#barH)"/><rect x="688.5" y="545" width="44" height="272.5" fill="url(#barV)"/><text x="688.5" y="537" fill="#fff" font-size="16.5" font-family='Liberation Sans',sans-serif>TPS</text><text x="740" y="840" fill="#fff" font-size="19" text-anchor="end" font-family='Liberation Sans',sans-serif>0</text><rect x="809.5" y="540" width="52.5" height="282" fill="#f0f0f0"/><rect x="811.5" y="542" width="48.5" height="278" fill="#c8c8c8"/><rect x="814.5" y="545" width="43" height="272.5" fill="url(#barH)"/><rect x="814.5" y="545" width="43" height="272.5" fill="url(#barV)"/><rect x="814.5" y="778.21" width="43" height="39.29" fill="url(#barG)"/><line x1="814.5" y1="778.21" x2="857.5" y2="778.21" stroke="#fff" stroke-width="2"/><line x1="814.5" y1="637.76" x2="857.5" y2="637.76" stroke="#b8b8b8" stroke-width="1"/><text x="814.5" y="537" fill="#fff" font-size="16.5" font-family='Liberation Sans',sans-serif>INJ B1</text><text x="865" y="840" fill="#fff" font-size="19" text-anchor="end" font-family='Liberation Sans',sans-serif>3.2</text><rect x="885.6" y="540" width="53.4" height="282" fill="#f0f0f0"/><rect x="887.6" y="542" width="49.4" height="278" fill="#c8c8c8"/><rect x="890.6" y="545" width="43.9" height="272.5" fill="url(#barH)"/><rect x="890.6" y="545" width="43.9" height="272.5" fill="url(#barV)"/><rect x="890.6" y="723.03" width="43.9" height="94.47" fill="url(#barG)"/><line x1="890.6" y1="723.03" x2="934.5" y2="723.03" stroke="#fff" stroke-width="2"/><line x1="890.6" y1="566.48" x2="934.5" y2="566.48" stroke="#b8b8b8" stroke-width="1"/><text x="890.6" y="537" fill="#fff" font-size="16.5" font-family='Liberation Sans',sans-serif>O2 B1</text><text x="942" y="840" fill="#fff" font-size="19" text-anchor="end" font-family='Liberation Sans',sans-serif>337</text><rect x="955.6" y="540" width="53.4" height="282" fill="#f0f0f0"/><rect x="957.6" y="542" width="49.4" height="278" fill="#c8c8c8"/><rect x="960.6" y="545" width="43.9" height="272.5" fill="url(#barH)"/><rect x="960.6" y="545" width="43.9" height="272.5" fill="url(#barV)"/><rect x="960.6" y="619.54" width="43.9" height="197.96" fill="url(#barG)"/><line x1="960.6" y1="619.54" x2="1004.5" y2="619.54" stroke="#fff" stroke-width="2"/><line x1="960.6" y1="571.76" x2="1004.5" y2="571.76" stroke="#b8b8b8" stroke-width="1"/><text x="960.6" y="537" fill="#fff" font-size="16.5" font-family='Liberation Sans',sans-serif>O2 B2</text><text x="1012" y="840" fill="#fff" font-size="19" text-anchor="end" font-family='Liberation Sans',sans-serif>729</text><rect x="1021.7" y="540" width="53.3" height="282" fill="#f0f0f0"/><rect x="1023.7" y="542" width="49.3" height="278" fill="#c8c8c8"/><rect x="1026.7" y="545" width="43.8" height="272.5" fill="url(#barH)"/><rect x="1026.7" y="545" width="43.8" height="272.5" fill="url(#barV)"/><rect x="1026.7" y="778.21" width="43.8" height="39.29" fill="url(#barG)"/><line x1="1026.7" y1="778.21" x2="1070.5" y2="778.21" stroke="#fff" stroke-width="2"/><line x1="1026.7" y1="637.76" x2="1070.5" y2="637.76" stroke="#b8b8b8" stroke-width="1"/><text x="1026.7" y="537" fill="#fff" font-size="16.5" font-family='Liberation Sans',sans-serif>INJ B2</text><text x="1078" y="840" fill="#fff" font-size="19" text-anchor="end" font-family='Liberation Sans',sans-serif>3.2</text><rect x="1119" y="540" width="54" height="282" fill="#f0f0f0"/><rect x="1121" y="542" width="50" height="278" fill="#c8c8c8"/><rect x="1124" y="545" width="44.5" height="272.5" fill="url(#barH)"/><rect x="1124" y="545" width="44.5" height="272.5" fill="url(#barV)"/><rect x="1124" y="672.61" width="44.5" height="7.39" fill="url(#barG)"/><line x1="1124" y1="672.61" x2="1168.5" y2="672.61" stroke="#fff" stroke-width="2"/><line x1="1124" y1="662.05" x2="1168.5" y2="662.05" stroke="#b8b8b8" stroke-width="1"/><line x1="1124" y1="695.31" x2="1168.5" y2="695.31" stroke="#b8b8b8" stroke-width="1"/><rect x="1171" y="548" width="3" height="52.8" fill="#d81b48"/><rect x="1171" y="759.2" width="3" height="52.8" fill="#d81b48"/><text x="1124" y="537" fill="#fff" font-size="16.5" font-family='Liberation Sans',sans-serif>LT B1</text><text x="1176" y="840" fill="#fff" font-size="19" text-anchor="end" font-family='Liberation Sans',sans-serif>1.4</text><rect x="1196" y="540" width="53" height="282" fill="#f0f0f0"/><rect x="1198" y="542" width="49" height="278" fill="#c8c8c8"/><rect x="1201" y="545" width="43.5" height="272.5" fill="url(#barH)"/><rect x="1201" y="545" width="43.5" height="272.5" fill="url(#barV)"/><rect x="1201" y="545.36" width="43.5" height="134.64" fill="url(#barG)"/><text x="1201" y="537" fill="#fff" font-size="16.5" font-family='Liberation Sans',sans-serif>ST B1</text><text x="1252" y="840" fill="#fff" font-size="19" text-anchor="end" font-family='Liberation Sans',sans-serif>46.7</text><rect x="1255.7" y="540" width="52.3" height="282" fill="#f0f0f0"/><rect x="1257.7" y="542" width="48.3" height="278" fill="#c8c8c8"/><rect x="1260.7" y="545" width="42.8" height="272.5" fill="url(#barH)"/><rect x="1260.7" y="545" width="42.8" height="272.5" fill="url(#barV)"/><rect x="1260.7" y="680" width="42.8" height="15.31" fill="url(#barG)"/><line x1="1260.7" y1="695.31" x2="1303.5" y2="695.31" stroke="#fff" stroke-width="2"/><line x1="1260.7" y1="614" x2="1303.5" y2="614" stroke="#b8b8b8" stroke-width="1"/><line x1="1260.7" y1="735.44" x2="1303.5" y2="735.44" stroke="#b8b8b8" stroke-width="1"/><text x="1260.7" y="537" fill="#fff" font-size="16.5" font-family='Liberation Sans',sans-serif>ST B2</text><text x="1311" y="840" fill="#fff" font-size="19" text-anchor="end" font-family='Liberation Sans',sans-serif>-2.9</text><rect x="1333" y="540" width="52.6" height="282" fill="#f0f0f0"/><rect x="1335" y="542" width="48.6" height="278" fill="#c8c8c8"/><rect x="1338" y="545" width="43.1" height="272.5" fill="url(#barH)"/><rect x="1338" y="545" width="43.1" height="272.5" fill="url(#barV)"/><rect x="1338" y="671.55" width="43.1" height="8.45" fill="url(#barG)"/><line x1="1338" y1="671.55" x2="1381.1" y2="671.55" stroke="#fff" stroke-width="2"/><line x1="1338" y1="663.1" x2="1381.1" y2="663.1" stroke="#b8b8b8" stroke-width="1"/><line x1="1338" y1="707.98" x2="1381.1" y2="707.98" stroke="#b8b8b8" stroke-width="1"/><rect x="1383.6" y="548" width="3" height="52.8" fill="#d81b48"/><rect x="1383.6" y="759.2" width="3" height="52.8" fill="#d81b48"/><text x="1338" y="537" fill="#fff" font-size="16.5" font-family='Liberation Sans',sans-serif>LT B2</text><text x="1388.6" y="840" fill="#fff" font-size="19" text-anchor="end" font-family='Liberation Sans',sans-serif>1.6</text></svg>
<div style="position:absolute;left:1409px;top:78px;width:106px;height:24px;background:#4e6080"></div>
<div style="position:absolute;left:1434px;top:82px;white-space:pre;font-family:'Liberation Sans',sans-serif;font-size:15.5px;color:#e8ecf4;line-height:18px">Graph</div>
<div style="position:absolute;left:1497px;top:82px;white-space:pre;font-family:'Liberation Sans',sans-serif;font-size:14px;color:#dfe4ee;line-height:18px">✕</div>
<div style="position:absolute;left:1409px;top:102px;width:893px;height:763px;background:#4e6080"></div>
<div style="position:absolute;left:1411px;top:105px;width:889px;height:758px;background:#ececec"></div>
<svg style="position:absolute;left:0;top:0" width="2307" height="1705" viewBox="0 0 2307 1705"><defs><linearGradient id="lst" x1="0" y1="0" x2="1" y2="0"><stop offset="0" stop-color="#f7f7f7"/><stop offset="0.8" stop-color="#f4f4f4"/><stop offset="1" stop-color="#e9e9e9"/></linearGradient><linearGradient id="tbg" x1="0" y1="0" x2="0" y2="1"><stop offset="0" stop-color="#fafafa"/><stop offset="1" stop-color="#ebebeb"/></linearGradient></defs><rect x="1411" y="105" width="149" height="757" fill="url(#lst)"/><rect x="1560" y="105" width="244" height="31" fill="url(#tbg)"/><rect x="1411" y="107" width="127" height="23" fill="#f8f8f8" stroke="#3d8ee0" stroke-width="1.6"/><rect x="1412.5" y="109.0" width="18" height="19" fill="#fff" stroke="#8c8ca0"/><rect x="1413" y="109.5" width="17" height="4" fill="#8a8ad8"/><rect x="1413" y="109.5" width="5" height="18" fill="#9a9ae0"/><line x1="1413" y1="114.1" x2="1430" y2="114.1" stroke="#c8c8d8" stroke-width="0.8"/><line x1="1413" y1="118.7" x2="1430" y2="118.7" stroke="#c8c8d8" stroke-width="0.8"/><line x1="1413" y1="123.3" x2="1430" y2="123.3" stroke="#c8c8d8" stroke-width="0.8"/><line x1="1424" y1="109.5" x2="1424" y2="127.5" stroke="#c8c8d8" stroke-width="0.8"/><rect x="1413" y="109.5" width="5" height="18" fill="none" stroke="#6060b0" stroke-width="0.6"/><text x="1434" y="123.6" fill="#1a1a1a" font-size="14.6" font-family='Liberation Sans',sans-serif>Spark Advance</text><rect x="1413.5" y="138.2" width="18" height="19" fill="#fff" stroke="#8c8ca0"/><rect x="1414" y="138.7" width="17" height="4" fill="#8a8ad8"/><rect x="1414" y="138.7" width="5" height="18" fill="#9a9ae0"/><line x1="1414" y1="143.29999999999998" x2="1431" y2="143.29999999999998" stroke="#c8c8d8" stroke-width="0.8"/><line x1="1414" y1="147.89999999999998" x2="1431" y2="147.89999999999998" stroke="#c8c8d8" stroke-width="0.8"/><line x1="1414" y1="152.5" x2="1431" y2="152.5" stroke="#c8c8d8" stroke-width="0.8"/><line x1="1425" y1="138.7" x2="1425" y2="156.7" stroke="#c8c8d8" stroke-width="0.8"/><rect x="1414" y="138.7" width="5" height="18" fill="none" stroke="#6060b0" stroke-width="0.6"/><text x="1436" y="152.3" fill="#1a1a1a" font-size="14.6" font-family='Liberation Sans',sans-serif>Spark Retard</text><rect x="1413.5" y="166.9" width="18" height="19" fill="#fff" stroke="#8c8ca0"/><rect x="1414" y="167.4" width="17" height="4" fill="#8a8ad8"/><rect x="1414" y="167.4" width="5" height="18" fill="#9a9ae0"/><line x1="1414" y1="172.0" x2="1431" y2="172.0" stroke="#c8c8d8" stroke-width="0.8"/><line x1="1414" y1="176.6" x2="1431" y2="176.6" stroke="#c8c8d8" stroke-width="0.8"/><line x1="1414" y1="181.20000000000002" x2="1431" y2="181.20000000000002" stroke="#c8c8d8" stroke-width="0.8"/><line x1="1425" y1="167.4" x2="1425" y2="185.4" stroke="#c8c8d8" stroke-width="0.8"/><rect x="1414" y="167.4" width="5" height="18" fill="none" stroke="#6060b0" stroke-width="0.6"/><text x="1436" y="181" fill="#1a1a1a" font-size="14.6" font-family='Liberation Sans',sans-serif>LT Fuel Trim</text><rect x="1413.5" y="195.6" width="18" height="19" fill="#fff" stroke="#8c8ca0"/><rect x="1414" y="196.1" width="17" height="4" fill="#8a8ad8"/><rect x="1414" y="196.1" width="5" height="18" fill="#9a9ae0"/><line x1="1414" y1="200.7" x2="1431" y2="200.7" stroke="#c8c8d8" stroke-width="0.8"/><line x1="1414" y1="205.29999999999998" x2="1431" y2="205.29999999999998" stroke="#c8c8d8" stroke-width="0.8"/><line x1="1414" y1="209.9" x2="1431" y2="209.9" stroke="#c8c8d8" stroke-width="0.8"/><line x1="1425" y1="196.1" x2="1425" y2="214.1" stroke="#c8c8d8" stroke-width="0.8"/><rect x="1414" y="196.1" width="5" height="18" fill="none" stroke="#6060b0" stroke-width="0.6"/><text x="1436" y="209.7" fill="#1a1a1a" font-size="14.6" font-family='Liberation Sans',sans-serif>ST Fuel Trim</text><rect x="1413.5" y="224.3" width="18" height="19" fill="#fff" stroke="#8c8ca0"/><rect x="1414" y="224.8" width="17" height="4" fill="#8a8ad8"/><rect x="1414" y="224.8" width="5" height="18" fill="#9a9ae0"/><line x1="1414" y1="229.4" x2="1431" y2="229.4" stroke="#c8c8d8" stroke-width="0.8"/><line x1="1414" y1="234.0" x2="1431" y2="234.0" stroke="#c8c8d8" stroke-width="0.8"/><line x1="1414" y1="238.60000000000002" x2="1431" y2="238.60000000000002" stroke="#c8c8d8" stroke-width="0.8"/><line x1="1425" y1="224.8" x2="1425" y2="242.8" stroke="#c8c8d8" stroke-width="0.8"/><rect x="1414" y="224.8" width="5" height="18" fill="none" stroke="#6060b0" stroke-width="0.6"/><text x="1436" y="238.4" fill="#1a1a1a" font-size="14.6" font-family='Liberation Sans',sans-serif>O2 (mv)</text><rect x="1413.5" y="253.0" width="18" height="19" fill="#f4f4f4" stroke="#9a9aa8"/><rect x="1414" y="253.5" width="17" height="3" fill="#8080d0"/><rect x="1416.0" y="265.5" width="1.3" height="5" fill="#333"/><rect x="1418.3" y="262.5" width="1.3" height="8" fill="#333"/><rect x="1420.6" y="259.5" width="1.3" height="11" fill="#333"/><rect x="1422.9" y="261.5" width="1.3" height="9" fill="#333"/><rect x="1425.2" y="257.5" width="1.3" height="13" fill="#333"/><rect x="1427.5" y="260.5" width="1.3" height="10" fill="#333"/><text x="1436" y="267.1" fill="#1a1a1a" font-size="14.6" font-family='Liberation Sans',sans-serif>RPM</text><path d="M1566 120h17M1574.5 111.5v17" stroke="#111" stroke-width="3.2"/><path d="M1595 120h16" stroke="#111" stroke-width="3"/><rect x="1618" y="107" width="28" height="25.5" fill="#f6f6f6" stroke="#3d8ee0" stroke-width="1.6"/><text x="1632" y="126" fill="#111" font-size="16" font-weight="bold" text-anchor="middle" font-family='Liberation Sans',sans-serif>A</text><text x="1660.5" y="126" fill="#9a9a9a" font-size="16" text-anchor="middle" font-family='Liberation Sans',sans-serif>L</text><text x="1688.5" y="126" fill="#111" font-size="16" font-weight="bold" text-anchor="middle" font-family='Liberation Sans',sans-serif>C</text><line x1="1708.5" y1="110" x2="1708.5" y2="129" stroke="#bbb" stroke-width="1"/><rect x="1712" y="107" width="28" height="25.5" fill="#f6f6f6" stroke="#3d8ee0" stroke-width="1.6"/><path d="M1717 127v-15M1735 127v-15" stroke="#c0303a" stroke-width="1.6"/><path d="M1717 114l5 9 5-9 4 8 4-8" fill="none" stroke="#3a6ab8" stroke-width="1.5"/><path d="M1750 127v-15M1756 127v-15" stroke="#c0303a" stroke-width="1.6"/><path d="M1746 123l5-9 4 9 7-11" fill="none" stroke="#3a6ab8" stroke-width="1.5"/><text x="1881" y="125.4" fill="#1e1e1e" font-size="20" textLength="372" lengthAdjust="spacingAndGlyphs" font-family='Liberation Sans',sans-serif>Engine Speed (rpm) [Sensor] / 1000</text><text x="0" y="0" transform="translate(1591.5,509) rotate(-90)" fill="#1e1e1e" font-size="19.5" text-anchor="middle" textLength="423" lengthAdjust="spacingAndGlyphs" font-family='Liberation Sans',sans-serif>Manifold Absolute Pressure (kPa) [Sensor]</text><rect x="1598.5" y="143" width="700.1" height="718" fill="#ababab" stroke="#222" stroke-width="1.5"/><rect x="1599.5" y="144" width="698.6" height="23.4" fill="#f0f0f0"/><rect x="1599.5" y="167.4" width="44.2" height="404.13" fill="#f0f0f0"/><rect x="1643.7" y="167.4" width="654.1" height="404.13" fill="#fff"/><rect x="1599.5" y="837.5" width="698.6" height="23" fill="#f0f0f0"/><line x1="1621" y1="849.5" x2="2179" y2="849.5" stroke="#8a8a8a" stroke-width="2"/><rect x="1913.46" y="167.4" width="44.96" height="21.27" fill="#cad6fa"/><rect x="1958.42" y="167.4" width="44.96" height="21.27" fill="#dae2fc"/><rect x="2003.38" y="167.4" width="44.96" height="21.27" fill="#ffffff"/><rect x="2048.34" y="167.4" width="44.96" height="21.27" fill="#ffffff"/><rect x="1823.54" y="188.67" width="44.96" height="21.27" fill="#9fb4f7"/><rect x="1868.5" y="188.67" width="44.96" height="21.27" fill="#85a0f4"/><rect x="1913.46" y="188.67" width="44.96" height="21.27" fill="#aabdf7"/><rect x="1958.42" y="188.67" width="44.96" height="21.27" fill="#6a8bf2"/><rect x="2003.38" y="188.67" width="44.96" height="21.27" fill="#6a8bf2"/><rect x="2093.3" y="188.67" width="44.96" height="21.27" fill="#4a72ef"/><rect x="1688.66" y="209.94" width="44.96" height="21.27" fill="#e4eafd"/><rect x="1733.62" y="209.94" width="44.96" height="21.27" fill="#aabdf7"/><rect x="1778.58" y="209.94" width="44.96" height="21.27" fill="#3d9cf4"/><rect x="1823.54" y="209.94" width="44.96" height="21.27" fill="#afc1f8"/><rect x="1868.5" y="209.94" width="44.96" height="21.27" fill="#6a8bf2"/><rect x="1913.46" y="209.94" width="44.96" height="21.27" fill="#6587f1"/><rect x="1958.42" y="209.94" width="44.96" height="21.27" fill="#e4eafd"/><rect x="2003.38" y="209.94" width="44.96" height="21.27" fill="#7f9bf4"/><rect x="1688.66" y="231.21" width="44.96" height="21.27" fill="#f4f7fe"/><rect x="1733.62" y="231.21" width="44.96" height="21.27" fill="#cfdafb"/><rect x="1778.58" y="231.21" width="44.96" height="21.27" fill="#9ab0f6"/><rect x="1823.54" y="231.21" width="44.96" height="21.27" fill="#6f8ff2"/><rect x="1868.5" y="231.21" width="44.96" height="21.27" fill="#4a72ef"/><rect x="1913.46" y="231.21" width="44.96" height="21.27" fill="#4a72ef"/><rect x="2003.38" y="231.21" width="44.96" height="21.27" fill="#4a72ef"/><rect x="1688.66" y="252.48" width="44.96" height="21.27" fill="#f4f7fe"/><rect x="1733.62" y="252.48" width="44.96" height="21.27" fill="#dae2fc"/><rect x="1778.58" y="252.48" width="44.96" height="21.27" fill="#7f9bf4"/><rect x="1823.54" y="252.48" width="44.96" height="21.27" fill="#4f76ef"/><rect x="1868.5" y="252.48" width="44.96" height="21.27" fill="#4a72ef"/><rect x="1913.46" y="252.48" width="44.96" height="21.27" fill="#4a72ef"/><rect x="1958.42" y="252.48" width="44.96" height="21.27" fill="#4a72ef"/><rect x="2003.38" y="252.48" width="44.96" height="21.27" fill="#4f76ef"/><rect x="1688.66" y="273.75" width="44.96" height="21.27" fill="#ffffff"/><rect x="1733.62" y="273.75" width="44.96" height="21.27" fill="#b4c5f8"/><rect x="1778.58" y="273.75" width="44.96" height="21.27" fill="#85a0f4"/><rect x="1823.54" y="273.75" width="44.96" height="21.27" fill="#4a72ef"/><rect x="1868.5" y="273.75" width="44.96" height="21.27" fill="#4a72ef"/><rect x="1913.46" y="273.75" width="44.96" height="21.27" fill="#4a72ef"/><rect x="1958.42" y="273.75" width="44.96" height="21.27" fill="#4a72ef"/><rect x="2003.38" y="273.75" width="44.96" height="21.27" fill="#5f83f1"/><rect x="2048.34" y="273.75" width="44.96" height="21.27" fill="#aabdf7"/><rect x="1688.66" y="295.02" width="44.96" height="21.27" fill="#eaeefd"/><rect x="1733.62" y="295.02" width="44.96" height="21.27" fill="#cad6fa"/><rect x="1778.58" y="295.02" width="44.96" height="21.27" fill="#9ab0f6"/><rect x="1823.54" y="295.02" width="44.96" height="21.27" fill="#6f8ff2"/><rect x="1868.5" y="295.02" width="44.96" height="21.27" fill="#4a72ef"/><rect x="1913.46" y="295.02" width="44.96" height="21.27" fill="#4a72ef"/><rect x="2003.38" y="295.02" width="44.96" height="21.27" fill="#5f83f1"/><rect x="1688.66" y="316.29" width="44.96" height="21.27" fill="#dfe6fc"/><rect x="1733.62" y="316.29" width="44.96" height="21.27" fill="#c4d1fa"/><rect x="1778.58" y="316.29" width="44.96" height="21.27" fill="#95acf6"/><rect x="1823.54" y="316.29" width="44.96" height="21.27" fill="#6a8bf2"/><rect x="1868.5" y="316.29" width="44.96" height="21.27" fill="#557af0"/><rect x="1913.46" y="316.29" width="44.96" height="21.27" fill="#4a72ef"/><rect x="2003.38" y="316.29" width="44.96" height="21.27" fill="#4f76ef"/><rect x="2048.34" y="316.29" width="44.96" height="21.27" fill="#557af0"/><rect x="1688.66" y="337.56" width="44.96" height="21.27" fill="#e4eafd"/><rect x="1733.62" y="337.56" width="44.96" height="21.27" fill="#a4b8f7"/><rect x="1778.58" y="337.56" width="44.96" height="21.27" fill="#95acf6"/><rect x="1823.54" y="337.56" width="44.96" height="21.27" fill="#6a8bf2"/><rect x="1868.5" y="337.56" width="44.96" height="21.27" fill="#5a7ef0"/><rect x="1913.46" y="337.56" width="44.96" height="21.27" fill="#4f76ef"/><rect x="1958.42" y="337.56" width="44.96" height="21.27" fill="#4a72ef"/><rect x="2003.38" y="337.56" width="44.96" height="21.27" fill="#557af0"/><rect x="2048.34" y="337.56" width="44.96" height="21.27" fill="#557af0"/><rect x="1688.66" y="358.83" width="44.96" height="21.27" fill="#afc1f8"/><rect x="1733.62" y="358.83" width="44.96" height="21.27" fill="#afc1f8"/><rect x="1778.58" y="358.83" width="44.96" height="21.27" fill="#7a97f3"/><rect x="1823.54" y="358.83" width="44.96" height="21.27" fill="#6f8ff2"/><rect x="1868.5" y="358.83" width="44.96" height="21.27" fill="#5f83f1"/><rect x="1913.46" y="358.83" width="44.96" height="21.27" fill="#5a7ef0"/><rect x="1958.42" y="358.83" width="44.96" height="21.27" fill="#4a72ef"/><rect x="2003.38" y="358.83" width="44.96" height="21.27" fill="#5f83f1"/><rect x="1733.62" y="380.1" width="44.96" height="21.27" fill="#95acf6"/><rect x="1778.58" y="380.1" width="44.96" height="21.27" fill="#7593f3"/><rect x="1823.54" y="380.1" width="44.96" height="21.27" fill="#6f8ff2"/><rect x="1868.5" y="380.1" width="44.96" height="21.27" fill="#6a8bf2"/><rect x="1913.46" y="380.1" width="44.96" height="21.27" fill="#6a8bf2"/><rect x="1958.42" y="380.1" width="44.96" height="21.27" fill="#6a8bf2"/><rect x="2003.38" y="380.1" width="44.96" height="21.27" fill="#7593f3"/><rect x="1733.62" y="401.37" width="44.96" height="21.27" fill="#9fb4f7"/><rect x="1778.58" y="401.37" width="44.96" height="21.27" fill="#7a97f3"/><rect x="1823.54" y="401.37" width="44.96" height="21.27" fill="#6f8ff2"/><rect x="1868.5" y="401.37" width="44.96" height="21.27" fill="#6f8ff2"/><rect x="1913.46" y="401.37" width="44.96" height="21.27" fill="#7a97f3"/><rect x="1958.42" y="401.37" width="44.96" height="21.27" fill="#6a8bf2"/><rect x="2003.38" y="401.37" width="44.96" height="21.27" fill="#95acf6"/><rect x="1733.62" y="422.64" width="44.96" height="21.27" fill="#d4defb"/><rect x="1778.58" y="422.64" width="44.96" height="21.27" fill="#7593f3"/><rect x="1823.54" y="422.64" width="44.96" height="21.27" fill="#7593f3"/><rect x="1868.5" y="422.64" width="44.96" height="21.27" fill="#6f8ff2"/><rect x="1913.46" y="422.64" width="44.96" height="21.27" fill="#6a8bf2"/><rect x="1958.42" y="422.64" width="44.96" height="21.27" fill="#6a8bf2"/><rect x="2003.38" y="422.64" width="44.96" height="21.27" fill="#7593f3"/><rect x="1733.62" y="443.91" width="44.96" height="21.27" fill="#b4c5f8"/><rect x="1778.58" y="443.91" width="44.96" height="21.27" fill="#7f9bf4"/><rect x="1823.54" y="443.91" width="44.96" height="21.27" fill="#7a97f3"/><rect x="1868.5" y="443.91" width="44.96" height="21.27" fill="#6f8ff2"/><rect x="1913.46" y="443.91" width="44.96" height="21.27" fill="#6f8ff2"/><rect x="1958.42" y="443.91" width="44.96" height="21.27" fill="#7593f3"/><rect x="2003.38" y="443.91" width="44.96" height="21.27" fill="#8aa4f5"/><rect x="2048.34" y="443.91" width="44.96" height="21.27" fill="#7f9bf4"/><rect x="2093.3" y="443.91" width="44.96" height="21.27" fill="#8aa4f5"/><rect x="2138.26" y="443.91" width="44.96" height="21.27" fill="#9ab0f6"/><rect x="2183.22" y="443.91" width="44.96" height="21.27" fill="#8fa8f5"/><rect x="1778.58" y="465.18" width="44.96" height="21.27" fill="#a4b8f7"/><rect x="1823.54" y="465.18" width="44.96" height="21.27" fill="#7f9bf4"/><rect x="1868.5" y="465.18" width="44.96" height="21.27" fill="#6f8ff2"/><rect x="1913.46" y="465.18" width="44.96" height="21.27" fill="#6f8ff2"/><rect x="1958.42" y="465.18" width="44.96" height="21.27" fill="#6f8ff2"/><rect x="2003.38" y="465.18" width="44.96" height="21.27" fill="#85a0f4"/><rect x="2048.34" y="465.18" width="44.96" height="21.27" fill="#7a97f3"/><line x1="1643.7" y1="167.4" x2="2298.6" y2="167.4" stroke="#acacac" stroke-width="1"/><line x1="1643.7" y1="188.67" x2="2298.6" y2="188.67" stroke="#acacac" stroke-width="1"/><line x1="1643.7" y1="209.94" x2="2298.6" y2="209.94" stroke="#acacac" stroke-width="1"/><line x1="1643.7" y1="231.21" x2="2298.6" y2="231.21" stroke="#acacac" stroke-width="1"/><line x1="1643.7" y1="252.48" x2="2298.6" y2="252.48" stroke="#acacac" stroke-width="1"/><line x1="1643.7" y1="273.75" x2="2298.6" y2="273.75" stroke="#acacac" stroke-width="1"/><line x1="1643.7" y1="295.02" x2="2298.6" y2="295.02" stroke="#acacac" stroke-width="1"/><line x1="1643.7" y1="316.29" x2="2298.6" y2="316.29" stroke="#acacac" stroke-width="1"/><line x1="1643.7" y1="337.56" x2="2298.6" y2="337.56" stroke="#acacac" stroke-width="1"/><line x1="1643.7" y1="358.83" x2="2298.6" y2="358.83" stroke="#acacac" stroke-width="1"/><line x1="1643.7" y1="380.1" x2="2298.6" y2="380.1" stroke="#acacac" stroke-width="1"/><line x1="1643.7" y1="401.37" x2="2298.6" y2="401.37" stroke="#acacac" stroke-width="1"/><line x1="1643.7" y1="422.64" x2="2298.6" y2="422.64" stroke="#acacac" stroke-width="1"/><line x1="1643.7" y1="443.91" x2="2298.6" y2="443.91" stroke="#acacac" stroke-width="1"/><line x1="1643.7" y1="465.18" x2="2298.6" y2="465.18" stroke="#acacac" stroke-width="1"/><line x1="1643.7" y1="486.45" x2="2298.6" y2="486.45" stroke="#acacac" stroke-width="1"/><line x1="1643.7" y1="507.72" x2="2298.6" y2="507.72" stroke="#acacac" stroke-width="1"/><line x1="1643.7" y1="528.99" x2="2298.6" y2="528.99" stroke="#acacac" stroke-width="1"/><line x1="1643.7" y1="550.26" x2="2298.6" y2="550.26" stroke="#acacac" stroke-width="1"/><line x1="1643.7" y1="571.53" x2="2298.6" y2="571.53" stroke="#acacac" stroke-width="1"/><line x1="1643.7" y1="167.4" x2="1643.7" y2="571.53" stroke="#acacac" stroke-width="1"/><line x1="1688.66" y1="167.4" x2="1688.66" y2="571.53" stroke="#acacac" stroke-width="1"/><line x1="1733.62" y1="167.4" x2="1733.62" y2="571.53" stroke="#acacac" stroke-width="1"/><line x1="1778.58" y1="167.4" x2="1778.58" y2="571.53" stroke="#acacac" stroke-width="1"/><line x1="1823.54" y1="167.4" x2="1823.54" y2="571.53" stroke="#acacac" stroke-width="1"/><line x1="1868.5" y1="167.4" x2="1868.5" y2="571.53" stroke="#acacac" stroke-width="1"/><line x1="1913.46" y1="167.4" x2="1913.46" y2="571.53" stroke="#acacac" stroke-width="1"/><line x1="1958.42" y1="167.4" x2="1958.42" y2="571.53" stroke="#acacac" stroke-width="1"/><line x1="2003.38" y1="167.4" x2="2003.38" y2="571.53" stroke="#acacac" stroke-width="1"/><line x1="2048.34" y1="167.4" x2="2048.34" y2="571.53" stroke="#acacac" stroke-width="1"/><line x1="2093.3" y1="167.4" x2="2093.3" y2="571.53" stroke="#acacac" stroke-width="1"/><line x1="2138.26" y1="167.4" x2="2138.26" y2="571.53" stroke="#acacac" stroke-width="1"/><line x1="2183.22" y1="167.4" x2="2183.22" y2="571.53" stroke="#acacac" stroke-width="1"/><line x1="2228.18" y1="167.4" x2="2228.18" y2="571.53" stroke="#acacac" stroke-width="1"/><line x1="2273.14" y1="167.4" x2="2273.14" y2="571.53" stroke="#acacac" stroke-width="1"/><line x1="1598.5" y1="167.4" x2="2298.6" y2="167.4" stroke="#555" stroke-width="1.2"/><line x1="1643.7" y1="143" x2="1643.7" y2="571.53" stroke="#666" stroke-width="1.2"/><rect x="1778.58" y="146" width="44.96" height="21.4" fill="#1a78d4"/><rect x="1600.5" y="209.94" width="43.2" height="21.27" fill="#1a78d4"/><text x="1665.18" y="161.3" fill="#1a1a1a" font-size="16" text-anchor="middle" letter-spacing="0.6" stroke="#1a1a1a" stroke-width="0.25" font-family='Liberation Mono',monospace>0.4</text><line x1="1688.66" y1="147" x2="1688.66" y2="165.5" stroke="#444" stroke-width="1.2"/><text x="1710.14" y="161.3" fill="#1a1a1a" font-size="16" text-anchor="middle" letter-spacing="0.6" stroke="#1a1a1a" stroke-width="0.25" font-family='Liberation Mono',monospace>0.8</text><line x1="1733.62" y1="147" x2="1733.62" y2="165.5" stroke="#444" stroke-width="1.2"/><text x="1755.1" y="161.3" fill="#1a1a1a" font-size="16" text-anchor="middle" letter-spacing="0.6" stroke="#1a1a1a" stroke-width="0.25" font-family='Liberation Mono',monospace>1.2</text><line x1="1778.58" y1="147" x2="1778.58" y2="165.5" stroke="#444" stroke-width="1.2"/><text x="1800.06" y="161.3" fill="#fff" font-size="16" text-anchor="middle" letter-spacing="0.6" stroke="#fff" stroke-width="0.25" font-family='Liberation Mono',monospace>1.6</text><line x1="1823.54" y1="147" x2="1823.54" y2="165.5" stroke="#444" stroke-width="1.2"/><text x="1845.02" y="161.3" fill="#1a1a1a" font-size="16" text-anchor="middle" letter-spacing="0.6" stroke="#1a1a1a" stroke-width="0.25" font-family='Liberation Mono',monospace>2.0</text><line x1="1868.5" y1="147" x2="1868.5" y2="165.5" stroke="#444" stroke-width="1.2"/><text x="1889.98" y="161.3" fill="#1a1a1a" font-size="16" text-anchor="middle" letter-spacing="0.6" stroke="#1a1a1a" stroke-width="0.25" font-family='Liberation Mono',monospace>2.4</text><line x1="1913.46" y1="147" x2="1913.46" y2="165.5" stroke="#444" stroke-width="1.2"/><text x="1934.94" y="161.3" fill="#1a1a1a" font-size="16" text-anchor="middle" letter-spacing="0.6" stroke="#1a1a1a" stroke-width="0.25" font-family='Liberation Mono',monospace>2.8</text><line x1="1958.42" y1="147" x2="1958.42" y2="165.5" stroke="#444" stroke-width="1.2"/><text x="1979.9" y="161.3" fill="#1a1a1a" font-size="16" text-anchor="middle" letter-spacing="0.6" stroke="#1a1a1a" stroke-width="0.25" font-family='Liberation Mono',monospace>3.2</text><line x1="2003.38" y1="147" x2="2003.38" y2="165.5" stroke="#444" stroke-width="1.2"/><text x="2024.86" y="161.3" fill="#1a1a1a" font-size="16" text-anchor="middle" letter-spacing="0.6" stroke="#1a1a1a" stroke-width="0.25" font-family='Liberation Mono',monospace>3.6</text><line x1="2048.34" y1="147" x2="2048.34" y2="165.5" stroke="#444" stroke-width="1.2"/><text x="2069.82" y="161.3" fill="#1a1a1a" font-size="16" text-anchor="middle" letter-spacing="0.6" stroke="#1a1a1a" stroke-width="0.25" font-family='Liberation Mono',monospace>4.0</text><line x1="2093.3" y1="147" x2="2093.3" y2="165.5" stroke="#444" stroke-width="1.2"/><text x="2114.78" y="161.3" fill="#1a1a1a" font-size="16" text-anchor="middle" letter-spacing="0.6" stroke="#1a1a1a" stroke-width="0.25" font-family='Liberation Mono',monospace>4.4</text><line x1="2138.26" y1="147" x2="2138.26" y2="165.5" stroke="#444" stroke-width="1.2"/><text x="2159.74" y="161.3" fill="#1a1a1a" font-size="16" text-anchor="middle" letter-spacing="0.6" stroke="#1a1a1a" stroke-width="0.25" font-family='Liberation Mono',monospace>4.8</text><line x1="2183.22" y1="147" x2="2183.22" y2="165.5" stroke="#444" stroke-width="1.2"/><text x="2204.7" y="161.3" fill="#1a1a1a" font-size="16" text-anchor="middle" letter-spacing="0.6" stroke="#1a1a1a" stroke-width="0.25" font-family='Liberation Mono',monospace>5.2</text><line x1="2228.18" y1="147" x2="2228.18" y2="165.5" stroke="#444" stroke-width="1.2"/><text x="2249.66" y="161.3" fill="#1a1a1a" font-size="16" text-anchor="middle" letter-spacing="0.6" stroke="#1a1a1a" stroke-width="0.25" font-family='Liberation Mono',monospace>5.6</text><line x1="2273.14" y1="147" x2="2273.14" y2="165.5" stroke="#444" stroke-width="1.2"/><text x="2294.62" y="161.3" fill="#1a1a1a" font-size="16" text-anchor="middle" letter-spacing="0.6" stroke="#1a1a1a" stroke-width="0.25" font-family='Liberation Mono',monospace>6.0</text><text x="1635.7" y="184.4" fill="#1a1a1a" font-size="16" text-anchor="end" letter-spacing="0.6" stroke="#1a1a1a" stroke-width="0.25" font-family='Liberation Mono',monospace>15</text><line x1="1603" y1="188.67" x2="1641" y2="188.67" stroke="#4a4a4a" stroke-width="1.3"/><text x="1934.94" y="183.7" fill="#1a1a1a" font-size="16" text-anchor="middle" letter-spacing="0.6" stroke="#1a1a1a" stroke-width="0.25" font-family='Liberation Mono',monospace>18</text><text x="1979.9" y="183.7" fill="#1a1a1a" font-size="16" text-anchor="middle" letter-spacing="0.6" stroke="#1a1a1a" stroke-width="0.25" font-family='Liberation Mono',monospace>15</text><text x="2024.86" y="183.7" fill="#1a1a1a" font-size="16" text-anchor="middle" letter-spacing="0.6" stroke="#1a1a1a" stroke-width="0.25" font-family='Liberation Mono',monospace>0</text><text x="2069.82" y="183.7" fill="#1a1a1a" font-size="16" text-anchor="middle" letter-spacing="0.6" stroke="#1a1a1a" stroke-width="0.25" font-family='Liberation Mono',monospace>4</text><text x="1635.7" y="205.67" fill="#1a1a1a" font-size="16" text-anchor="end" letter-spacing="0.6" stroke="#1a1a1a" stroke-width="0.25" font-family='Liberation Mono',monospace>20</text><line x1="1603" y1="209.94" x2="1641" y2="209.94" stroke="#4a4a4a" stroke-width="1.3"/><text x="1845.02" y="204.97" fill="#1a1a1a" font-size="16" text-anchor="middle" letter-spacing="0.6" stroke="#1a1a1a" stroke-width="0.25" font-family='Liberation Mono',monospace>26</text><text x="1889.98" y="204.97" fill="#1a1a1a" font-size="16" text-anchor="middle" letter-spacing="0.6" stroke="#1a1a1a" stroke-width="0.25" font-family='Liberation Mono',monospace>31</text><text x="1934.94" y="204.97" fill="#1a1a1a" font-size="16" text-anchor="middle" letter-spacing="0.6" stroke="#1a1a1a" stroke-width="0.25" font-family='Liberation Mono',monospace>24</text><text x="1979.9" y="204.97" fill="#1a1a1a" font-size="16" text-anchor="middle" letter-spacing="0.6" stroke="#1a1a1a" stroke-width="0.25" font-family='Liberation Mono',monospace>36</text><text x="2024.86" y="204.97" fill="#1a1a1a" font-size="16" text-anchor="middle" letter-spacing="0.6" stroke="#1a1a1a" stroke-width="0.25" font-family='Liberation Mono',monospace>36</text><text x="2114.78" y="204.97" fill="#1a1a1a" font-size="16" text-anchor="middle" letter-spacing="0.6" stroke="#1a1a1a" stroke-width="0.25" font-family='Liberation Mono',monospace>42</text><text x="1635.7" y="226.94" fill="#fff" font-size="16" text-anchor="end" letter-spacing="0.6" stroke="#fff" stroke-width="0.25" font-family='Liberation Mono',monospace>25</text><line x1="1603" y1="231.21" x2="1641" y2="231.21" stroke="#4a4a4a" stroke-width="1.3"/><text x="1710.14" y="226.24" fill="#1a1a1a" font-size="16" text-anchor="middle" letter-spacing="0.6" stroke="#1a1a1a" stroke-width="0.25" font-family='Liberation Mono',monospace>13</text><text x="1755.1" y="226.24" fill="#1a1a1a" font-size="16" text-anchor="middle" letter-spacing="0.6" stroke="#1a1a1a" stroke-width="0.25" font-family='Liberation Mono',monospace>24</text><text x="1800.06" y="226.24" fill="#fff" font-size="16" text-anchor="middle" letter-spacing="0.6" stroke="#fff" stroke-width="0.25" font-family='Liberation Mono',monospace>29</text><text x="1845.02" y="226.24" fill="#1a1a1a" font-size="16" text-anchor="middle" letter-spacing="0.6" stroke="#1a1a1a" stroke-width="0.25" font-family='Liberation Mono',monospace>23</text><text x="1889.98" y="226.24" fill="#1a1a1a" font-size="16" text-anchor="middle" letter-spacing="0.6" stroke="#1a1a1a" stroke-width="0.25" font-family='Liberation Mono',monospace>36</text><text x="1934.94" y="226.24" fill="#1a1a1a" font-size="16" text-anchor="middle" letter-spacing="0.6" stroke="#1a1a1a" stroke-width="0.25" font-family='Liberation Mono',monospace>37</text><text x="1979.9" y="226.24" fill="#1a1a1a" font-size="16" text-anchor="middle" letter-spacing="0.6" stroke="#1a1a1a" stroke-width="0.25" font-family='Liberation Mono',monospace>13</text><text x="2024.86" y="226.24" fill="#1a1a1a" font-size="16" text-anchor="middle" letter-spacing="0.6" stroke="#1a1a1a" stroke-width="0.25" font-family='Liberation Mono',monospace>32</text><text x="1635.7" y="248.21" fill="#1a1a1a" font-size="16" text-anchor="end" letter-spacing="0.6" stroke="#1a1a1a" stroke-width="0.25" font-family='Liberation Mono',monospace>30</text><line x1="1603" y1="252.48" x2="1641" y2="252.48" stroke="#4a4a4a" stroke-width="1.3"/><text x="1710.14" y="247.51" fill="#1a1a1a" font-size="16" text-anchor="middle" letter-spacing="0.6" stroke="#1a1a1a" stroke-width="0.25" font-family='Liberation Mono',monospace>10</text><text x="1755.1" y="247.51" fill="#1a1a1a" font-size="16" text-anchor="middle" letter-spacing="0.6" stroke="#1a1a1a" stroke-width="0.25" font-family='Liberation Mono',monospace>17</text><text x="1800.06" y="247.51" fill="#1a1a1a" font-size="16" text-anchor="middle" letter-spacing="0.6" stroke="#1a1a1a" stroke-width="0.25" font-family='Liberation Mono',monospace>27</text><text x="1845.02" y="247.51" fill="#1a1a1a" font-size="16" text-anchor="middle" letter-spacing="0.6" stroke="#1a1a1a" stroke-width="0.25" font-family='Liberation Mono',monospace>35</text><text x="1889.98" y="247.51" fill="#1a1a1a" font-size="16" text-anchor="middle" letter-spacing="0.6" stroke="#1a1a1a" stroke-width="0.25" font-family='Liberation Mono',monospace>47</text><text x="1934.94" y="247.51" fill="#1a1a1a" font-size="16" text-anchor="middle" letter-spacing="0.6" stroke="#1a1a1a" stroke-width="0.25" font-family='Liberation Mono',monospace>48</text><text x="2024.86" y="247.51" fill="#1a1a1a" font-size="16" text-anchor="middle" letter-spacing="0.6" stroke="#1a1a1a" stroke-width="0.25" font-family='Liberation Mono',monospace>43</text><text x="1635.7" y="269.48" fill="#1a1a1a" font-size="16" text-anchor="end" letter-spacing="0.6" stroke="#1a1a1a" stroke-width="0.25" font-family='Liberation Mono',monospace>35</text><line x1="1603" y1="273.75" x2="1641" y2="273.75" stroke="#4a4a4a" stroke-width="1.3"/><text x="1710.14" y="268.78" fill="#1a1a1a" font-size="16" text-anchor="middle" letter-spacing="0.6" stroke="#1a1a1a" stroke-width="0.25" font-family='Liberation Mono',monospace>10</text><text x="1755.1" y="268.78" fill="#1a1a1a" font-size="16" text-anchor="middle" letter-spacing="0.6" stroke="#1a1a1a" stroke-width="0.25" font-family='Liberation Mono',monospace>15</text><text x="1800.06" y="268.78" fill="#1a1a1a" font-size="16" text-anchor="middle" letter-spacing="0.6" stroke="#1a1a1a" stroke-width="0.25" font-family='Liberation Mono',monospace>32</text><text x="1845.02" y="268.78" fill="#1a1a1a" font-size="16" text-anchor="middle" letter-spacing="0.6" stroke="#1a1a1a" stroke-width="0.25" font-family='Liberation Mono',monospace>41</text><text x="1889.98" y="268.78" fill="#1a1a1a" font-size="16" text-anchor="middle" letter-spacing="0.6" stroke="#1a1a1a" stroke-width="0.25" font-family='Liberation Mono',monospace>49</text><text x="1934.94" y="268.78" fill="#1a1a1a" font-size="16" text-anchor="middle" letter-spacing="0.6" stroke="#1a1a1a" stroke-width="0.25" font-family='Liberation Mono',monospace>49</text><text x="1979.9" y="268.78" fill="#1a1a1a" font-size="16" text-anchor="middle" letter-spacing="0.6" stroke="#1a1a1a" stroke-width="0.25" font-family='Liberation Mono',monospace>46</text><text x="2024.86" y="268.78" fill="#1a1a1a" font-size="16" text-anchor="middle" letter-spacing="0.6" stroke="#1a1a1a" stroke-width="0.25" font-family='Liberation Mono',monospace>41</text><text x="1635.7" y="290.75" fill="#1a1a1a" font-size="16" text-anchor="end" letter-spacing="0.6" stroke="#1a1a1a" stroke-width="0.25" font-family='Liberation Mono',monospace>40</text><line x1="1603" y1="295.02" x2="1641" y2="295.02" stroke="#4a4a4a" stroke-width="1.3"/><text x="1710.14" y="290.05" fill="#1a1a1a" font-size="16" text-anchor="middle" letter-spacing="0.6" stroke="#1a1a1a" stroke-width="0.25" font-family='Liberation Mono',monospace>7</text><text x="1755.1" y="290.05" fill="#1a1a1a" font-size="16" text-anchor="middle" letter-spacing="0.6" stroke="#1a1a1a" stroke-width="0.25" font-family='Liberation Mono',monospace>22</text><text x="1800.06" y="290.05" fill="#1a1a1a" font-size="16" text-anchor="middle" letter-spacing="0.6" stroke="#1a1a1a" stroke-width="0.25" font-family='Liberation Mono',monospace>31</text><text x="1845.02" y="290.05" fill="#1a1a1a" font-size="16" text-anchor="middle" letter-spacing="0.6" stroke="#1a1a1a" stroke-width="0.25" font-family='Liberation Mono',monospace>43</text><text x="1889.98" y="290.05" fill="#1a1a1a" font-size="16" text-anchor="middle" letter-spacing="0.6" stroke="#1a1a1a" stroke-width="0.25" font-family='Liberation Mono',monospace>45</text><text x="1934.94" y="290.05" fill="#1a1a1a" font-size="16" text-anchor="middle" letter-spacing="0.6" stroke="#1a1a1a" stroke-width="0.25" font-family='Liberation Mono',monospace>46</text><text x="1979.9" y="290.05" fill="#1a1a1a" font-size="16" text-anchor="middle" letter-spacing="0.6" stroke="#1a1a1a" stroke-width="0.25" font-family='Liberation Mono',monospace>45</text><text x="2024.86" y="290.05" fill="#1a1a1a" font-size="16" text-anchor="middle" letter-spacing="0.6" stroke="#1a1a1a" stroke-width="0.25" font-family='Liberation Mono',monospace>38</text><text x="2069.82" y="290.05" fill="#1a1a1a" font-size="16" text-anchor="middle" letter-spacing="0.6" stroke="#1a1a1a" stroke-width="0.25" font-family='Liberation Mono',monospace>24</text><text x="1635.7" y="312.02" fill="#1a1a1a" font-size="16" text-anchor="end" letter-spacing="0.6" stroke="#1a1a1a" stroke-width="0.25" font-family='Liberation Mono',monospace>45</text><line x1="1603" y1="316.29" x2="1641" y2="316.29" stroke="#4a4a4a" stroke-width="1.3"/><text x="1710.14" y="311.32" fill="#1a1a1a" font-size="16" text-anchor="middle" letter-spacing="0.6" stroke="#1a1a1a" stroke-width="0.25" font-family='Liberation Mono',monospace>12</text><text x="1755.1" y="311.32" fill="#1a1a1a" font-size="16" text-anchor="middle" letter-spacing="0.6" stroke="#1a1a1a" stroke-width="0.25" font-family='Liberation Mono',monospace>18</text><text x="1800.06" y="311.32" fill="#1a1a1a" font-size="16" text-anchor="middle" letter-spacing="0.6" stroke="#1a1a1a" stroke-width="0.25" font-family='Liberation Mono',monospace>27</text><text x="1845.02" y="311.32" fill="#1a1a1a" font-size="16" text-anchor="middle" letter-spacing="0.6" stroke="#1a1a1a" stroke-width="0.25" font-family='Liberation Mono',monospace>35</text><text x="1889.98" y="311.32" fill="#1a1a1a" font-size="16" text-anchor="middle" letter-spacing="0.6" stroke="#1a1a1a" stroke-width="0.25" font-family='Liberation Mono',monospace>42</text><text x="1934.94" y="311.32" fill="#1a1a1a" font-size="16" text-anchor="middle" letter-spacing="0.6" stroke="#1a1a1a" stroke-width="0.25" font-family='Liberation Mono',monospace>44</text><text x="2024.86" y="311.32" fill="#1a1a1a" font-size="16" text-anchor="middle" letter-spacing="0.6" stroke="#1a1a1a" stroke-width="0.25" font-family='Liberation Mono',monospace>38</text><text x="1635.7" y="333.29" fill="#1a1a1a" font-size="16" text-anchor="end" letter-spacing="0.6" stroke="#1a1a1a" stroke-width="0.25" font-family='Liberation Mono',monospace>50</text><line x1="1603" y1="337.56" x2="1641" y2="337.56" stroke="#4a4a4a" stroke-width="1.3"/><text x="1710.14" y="332.59" fill="#1a1a1a" font-size="16" text-anchor="middle" letter-spacing="0.6" stroke="#1a1a1a" stroke-width="0.25" font-family='Liberation Mono',monospace>14</text><text x="1755.1" y="332.59" fill="#1a1a1a" font-size="16" text-anchor="middle" letter-spacing="0.6" stroke="#1a1a1a" stroke-width="0.25" font-family='Liberation Mono',monospace>19</text><text x="1800.06" y="332.59" fill="#1a1a1a" font-size="16" text-anchor="middle" letter-spacing="0.6" stroke="#1a1a1a" stroke-width="0.25" font-family='Liberation Mono',monospace>28</text><text x="1845.02" y="332.59" fill="#1a1a1a" font-size="16" text-anchor="middle" letter-spacing="0.6" stroke="#1a1a1a" stroke-width="0.25" font-family='Liberation Mono',monospace>36</text><text x="1889.98" y="332.59" fill="#1a1a1a" font-size="16" text-anchor="middle" letter-spacing="0.6" stroke="#1a1a1a" stroke-width="0.25" font-family='Liberation Mono',monospace>40</text><text x="1934.94" y="332.59" fill="#1a1a1a" font-size="16" text-anchor="middle" letter-spacing="0.6" stroke="#1a1a1a" stroke-width="0.25" font-family='Liberation Mono',monospace>43</text><text x="2024.86" y="332.59" fill="#1a1a1a" font-size="16" text-anchor="middle" letter-spacing="0.6" stroke="#1a1a1a" stroke-width="0.25" font-family='Liberation Mono',monospace>41</text><text x="2069.82" y="332.59" fill="#1a1a1a" font-size="16" text-anchor="middle" letter-spacing="0.6" stroke="#1a1a1a" stroke-width="0.25" font-family='Liberation Mono',monospace>40</text><text x="1635.7" y="354.56" fill="#1a1a1a" font-size="16" text-anchor="end" letter-spacing="0.6" stroke="#1a1a1a" stroke-width="0.25" font-family='Liberation Mono',monospace>55</text><line x1="1603" y1="358.83" x2="1641" y2="358.83" stroke="#4a4a4a" stroke-width="1.3"/><text x="1710.14" y="353.86" fill="#1a1a1a" font-size="16" text-anchor="middle" letter-spacing="0.6" stroke="#1a1a1a" stroke-width="0.25" font-family='Liberation Mono',monospace>13</text><text x="1755.1" y="353.86" fill="#1a1a1a" font-size="16" text-anchor="middle" letter-spacing="0.6" stroke="#1a1a1a" stroke-width="0.25" font-family='Liberation Mono',monospace>25</text><text x="1800.06" y="353.86" fill="#1a1a1a" font-size="16" text-anchor="middle" letter-spacing="0.6" stroke="#1a1a1a" stroke-width="0.25" font-family='Liberation Mono',monospace>28</text><text x="1845.02" y="353.86" fill="#1a1a1a" font-size="16" text-anchor="middle" letter-spacing="0.6" stroke="#1a1a1a" stroke-width="0.25" font-family='Liberation Mono',monospace>36</text><text x="1889.98" y="353.86" fill="#1a1a1a" font-size="16" text-anchor="middle" letter-spacing="0.6" stroke="#1a1a1a" stroke-width="0.25" font-family='Liberation Mono',monospace>39</text><text x="1934.94" y="353.86" fill="#1a1a1a" font-size="16" text-anchor="middle" letter-spacing="0.6" stroke="#1a1a1a" stroke-width="0.25" font-family='Liberation Mono',monospace>41</text><text x="1979.9" y="353.86" fill="#1a1a1a" font-size="16" text-anchor="middle" letter-spacing="0.6" stroke="#1a1a1a" stroke-width="0.25" font-family='Liberation Mono',monospace>43</text><text x="2024.86" y="353.86" fill="#1a1a1a" font-size="16" text-anchor="middle" letter-spacing="0.6" stroke="#1a1a1a" stroke-width="0.25" font-family='Liberation Mono',monospace>40</text><text x="2069.82" y="353.86" fill="#1a1a1a" font-size="16" text-anchor="middle" letter-spacing="0.6" stroke="#1a1a1a" stroke-width="0.25" font-family='Liberation Mono',monospace>40</text><text x="1635.7" y="375.83" fill="#1a1a1a" font-size="16" text-anchor="end" letter-spacing="0.6" stroke="#1a1a1a" stroke-width="0.25" font-family='Liberation Mono',monospace>60</text><line x1="1603" y1="380.1" x2="1641" y2="380.1" stroke="#4a4a4a" stroke-width="1.3"/><text x="1710.14" y="375.13" fill="#1a1a1a" font-size="16" text-anchor="middle" letter-spacing="0.6" stroke="#1a1a1a" stroke-width="0.25" font-family='Liberation Mono',monospace>23</text><text x="1755.1" y="375.13" fill="#1a1a1a" font-size="16" text-anchor="middle" letter-spacing="0.6" stroke="#1a1a1a" stroke-width="0.25" font-family='Liberation Mono',monospace>23</text><text x="1800.06" y="375.13" fill="#1a1a1a" font-size="16" text-anchor="middle" letter-spacing="0.6" stroke="#1a1a1a" stroke-width="0.25" font-family='Liberation Mono',monospace>33</text><text x="1845.02" y="375.13" fill="#1a1a1a" font-size="16" text-anchor="middle" letter-spacing="0.6" stroke="#1a1a1a" stroke-width="0.25" font-family='Liberation Mono',monospace>35</text><text x="1889.98" y="375.13" fill="#1a1a1a" font-size="16" text-anchor="middle" letter-spacing="0.6" stroke="#1a1a1a" stroke-width="0.25" font-family='Liberation Mono',monospace>38</text><text x="1934.94" y="375.13" fill="#1a1a1a" font-size="16" text-anchor="middle" letter-spacing="0.6" stroke="#1a1a1a" stroke-width="0.25" font-family='Liberation Mono',monospace>39</text><text x="1979.9" y="375.13" fill="#1a1a1a" font-size="16" text-anchor="middle" letter-spacing="0.6" stroke="#1a1a1a" stroke-width="0.25" font-family='Liberation Mono',monospace>42</text><text x="2024.86" y="375.13" fill="#1a1a1a" font-size="16" text-anchor="middle" letter-spacing="0.6" stroke="#1a1a1a" stroke-width="0.25" font-family='Liberation Mono',monospace>38</text><text x="1635.7" y="397.1" fill="#1a1a1a" font-size="16" text-anchor="end" letter-spacing="0.6" stroke="#1a1a1a" stroke-width="0.25" font-family='Liberation Mono',monospace>65</text><line x1="1603" y1="401.37" x2="1641" y2="401.37" stroke="#4a4a4a" stroke-width="1.3"/><text x="1755.1" y="396.4" fill="#1a1a1a" font-size="16" text-anchor="middle" letter-spacing="0.6" stroke="#1a1a1a" stroke-width="0.25" font-family='Liberation Mono',monospace>28</text><text x="1800.06" y="396.4" fill="#1a1a1a" font-size="16" text-anchor="middle" letter-spacing="0.6" stroke="#1a1a1a" stroke-width="0.25" font-family='Liberation Mono',monospace>34</text><text x="1845.02" y="396.4" fill="#1a1a1a" font-size="16" text-anchor="middle" letter-spacing="0.6" stroke="#1a1a1a" stroke-width="0.25" font-family='Liberation Mono',monospace>35</text><text x="1889.98" y="396.4" fill="#1a1a1a" font-size="16" text-anchor="middle" letter-spacing="0.6" stroke="#1a1a1a" stroke-width="0.25" font-family='Liberation Mono',monospace>36</text><text x="1934.94" y="396.4" fill="#1a1a1a" font-size="16" text-anchor="middle" letter-spacing="0.6" stroke="#1a1a1a" stroke-width="0.25" font-family='Liberation Mono',monospace>36</text><text x="1979.9" y="396.4" fill="#1a1a1a" font-size="16" text-anchor="middle" letter-spacing="0.6" stroke="#1a1a1a" stroke-width="0.25" font-family='Liberation Mono',monospace>36</text><text x="2024.86" y="396.4" fill="#1a1a1a" font-size="16" text-anchor="middle" letter-spacing="0.6" stroke="#1a1a1a" stroke-width="0.25" font-family='Liberation Mono',monospace>34</text><text x="1635.7" y="418.37" fill="#1a1a1a" font-size="16" text-anchor="end" letter-spacing="0.6" stroke="#1a1a1a" stroke-width="0.25" font-family='Liberation Mono',monospace>70</text><line x1="1603" y1="422.64" x2="1641" y2="422.64" stroke="#4a4a4a" stroke-width="1.3"/><text x="1755.1" y="417.67" fill="#1a1a1a" font-size="16" text-anchor="middle" letter-spacing="0.6" stroke="#1a1a1a" stroke-width="0.25" font-family='Liberation Mono',monospace>26</text><text x="1800.06" y="417.67" fill="#1a1a1a" font-size="16" text-anchor="middle" letter-spacing="0.6" stroke="#1a1a1a" stroke-width="0.25" font-family='Liberation Mono',monospace>33</text><text x="1845.02" y="417.67" fill="#1a1a1a" font-size="16" text-anchor="middle" letter-spacing="0.6" stroke="#1a1a1a" stroke-width="0.25" font-family='Liberation Mono',monospace>35</text><text x="1889.98" y="417.67" fill="#1a1a1a" font-size="16" text-anchor="middle" letter-spacing="0.6" stroke="#1a1a1a" stroke-width="0.25" font-family='Liberation Mono',monospace>35</text><text x="1934.94" y="417.67" fill="#1a1a1a" font-size="16" text-anchor="middle" letter-spacing="0.6" stroke="#1a1a1a" stroke-width="0.25" font-family='Liberation Mono',monospace>33</text><text x="1979.9" y="417.67" fill="#1a1a1a" font-size="16" text-anchor="middle" letter-spacing="0.6" stroke="#1a1a1a" stroke-width="0.25" font-family='Liberation Mono',monospace>36</text><text x="2024.86" y="417.67" fill="#1a1a1a" font-size="16" text-anchor="middle" letter-spacing="0.6" stroke="#1a1a1a" stroke-width="0.25" font-family='Liberation Mono',monospace>28</text><text x="1635.7" y="439.64" fill="#1a1a1a" font-size="16" text-anchor="end" letter-spacing="0.6" stroke="#1a1a1a" stroke-width="0.25" font-family='Liberation Mono',monospace>75</text><line x1="1603" y1="443.91" x2="1641" y2="443.91" stroke="#4a4a4a" stroke-width="1.3"/><text x="1755.1" y="438.94" fill="#1a1a1a" font-size="16" text-anchor="middle" letter-spacing="0.6" stroke="#1a1a1a" stroke-width="0.25" font-family='Liberation Mono',monospace>16</text><text x="1800.06" y="438.94" fill="#1a1a1a" font-size="16" text-anchor="middle" letter-spacing="0.6" stroke="#1a1a1a" stroke-width="0.25" font-family='Liberation Mono',monospace>34</text><text x="1845.02" y="438.94" fill="#1a1a1a" font-size="16" text-anchor="middle" letter-spacing="0.6" stroke="#1a1a1a" stroke-width="0.25" font-family='Liberation Mono',monospace>34</text><text x="1889.98" y="438.94" fill="#1a1a1a" font-size="16" text-anchor="middle" letter-spacing="0.6" stroke="#1a1a1a" stroke-width="0.25" font-family='Liberation Mono',monospace>35</text><text x="1934.94" y="438.94" fill="#1a1a1a" font-size="16" text-anchor="middle" letter-spacing="0.6" stroke="#1a1a1a" stroke-width="0.25" font-family='Liberation Mono',monospace>36</text><text x="1979.9" y="438.94" fill="#1a1a1a" font-size="16" text-anchor="middle" letter-spacing="0.6" stroke="#1a1a1a" stroke-width="0.25" font-family='Liberation Mono',monospace>36</text><text x="2024.86" y="438.94" fill="#1a1a1a" font-size="16" text-anchor="middle" letter-spacing="0.6" stroke="#1a1a1a" stroke-width="0.25" font-family='Liberation Mono',monospace>34</text><text x="1635.7" y="460.91" fill="#1a1a1a" font-size="16" text-anchor="end" letter-spacing="0.6" stroke="#1a1a1a" stroke-width="0.25" font-family='Liberation Mono',monospace>80</text><line x1="1603" y1="465.18" x2="1641" y2="465.18" stroke="#4a4a4a" stroke-width="1.3"/><text x="1755.1" y="460.21" fill="#1a1a1a" font-size="16" text-anchor="middle" letter-spacing="0.6" stroke="#1a1a1a" stroke-width="0.25" font-family='Liberation Mono',monospace>22</text><text x="1800.06" y="460.21" fill="#1a1a1a" font-size="16" text-anchor="middle" letter-spacing="0.6" stroke="#1a1a1a" stroke-width="0.25" font-family='Liberation Mono',monospace>32</text><text x="1845.02" y="460.21" fill="#1a1a1a" font-size="16" text-anchor="middle" letter-spacing="0.6" stroke="#1a1a1a" stroke-width="0.25" font-family='Liberation Mono',monospace>33</text><text x="1889.98" y="460.21" fill="#1a1a1a" font-size="16" text-anchor="middle" letter-spacing="0.6" stroke="#1a1a1a" stroke-width="0.25" font-family='Liberation Mono',monospace>35</text><text x="1934.94" y="460.21" fill="#1a1a1a" font-size="16" text-anchor="middle" letter-spacing="0.6" stroke="#1a1a1a" stroke-width="0.25" font-family='Liberation Mono',monospace>35</text><text x="1979.9" y="460.21" fill="#1a1a1a" font-size="16" text-anchor="middle" letter-spacing="0.6" stroke="#1a1a1a" stroke-width="0.25" font-family='Liberation Mono',monospace>34</text><text x="2024.86" y="460.21" fill="#1a1a1a" font-size="16" text-anchor="middle" letter-spacing="0.6" stroke="#1a1a1a" stroke-width="0.25" font-family='Liberation Mono',monospace>30</text><text x="2069.82" y="460.21" fill="#1a1a1a" font-size="16" text-anchor="middle" letter-spacing="0.6" stroke="#1a1a1a" stroke-width="0.25" font-family='Liberation Mono',monospace>32</text><text x="2114.78" y="460.21" fill="#1a1a1a" font-size="16" text-anchor="middle" letter-spacing="0.6" stroke="#1a1a1a" stroke-width="0.25" font-family='Liberation Mono',monospace>30</text><text x="2159.74" y="460.21" fill="#1a1a1a" font-size="16" text-anchor="middle" letter-spacing="0.6" stroke="#1a1a1a" stroke-width="0.25" font-family='Liberation Mono',monospace>27</text><text x="2204.7" y="460.21" fill="#1a1a1a" font-size="16" text-anchor="middle" letter-spacing="0.6" stroke="#1a1a1a" stroke-width="0.25" font-family='Liberation Mono',monospace>29</text><text x="1635.7" y="482.18" fill="#1a1a1a" font-size="16" text-anchor="end" letter-spacing="0.6" stroke="#1a1a1a" stroke-width="0.25" font-family='Liberation Mono',monospace>85</text><line x1="1603" y1="486.45" x2="1641" y2="486.45" stroke="#4a4a4a" stroke-width="1.3"/><text x="1800.06" y="481.48" fill="#1a1a1a" font-size="16" text-anchor="middle" letter-spacing="0.6" stroke="#1a1a1a" stroke-width="0.25" font-family='Liberation Mono',monospace>25</text><text x="1845.02" y="481.48" fill="#1a1a1a" font-size="16" text-anchor="middle" letter-spacing="0.6" stroke="#1a1a1a" stroke-width="0.25" font-family='Liberation Mono',monospace>32</text><text x="1889.98" y="481.48" fill="#1a1a1a" font-size="16" text-anchor="middle" letter-spacing="0.6" stroke="#1a1a1a" stroke-width="0.25" font-family='Liberation Mono',monospace>35</text><text x="1934.94" y="481.48" fill="#1a1a1a" font-size="16" text-anchor="middle" letter-spacing="0.6" stroke="#1a1a1a" stroke-width="0.25" font-family='Liberation Mono',monospace>35</text><text x="1979.9" y="481.48" fill="#1a1a1a" font-size="16" text-anchor="middle" letter-spacing="0.6" stroke="#1a1a1a" stroke-width="0.25" font-family='Liberation Mono',monospace>35</text><text x="2024.86" y="481.48" fill="#1a1a1a" font-size="16" text-anchor="middle" letter-spacing="0.6" stroke="#1a1a1a" stroke-width="0.25" font-family='Liberation Mono',monospace>31</text><text x="2069.82" y="481.48" fill="#1a1a1a" font-size="16" text-anchor="middle" letter-spacing="0.6" stroke="#1a1a1a" stroke-width="0.25" font-family='Liberation Mono',monospace>33</text><text x="1635.7" y="503.45" fill="#1a1a1a" font-size="16" text-anchor="end" letter-spacing="0.6" stroke="#1a1a1a" stroke-width="0.25" font-family='Liberation Mono',monospace>90</text><line x1="1603" y1="507.72" x2="1641" y2="507.72" stroke="#4a4a4a" stroke-width="1.3"/><text x="1635.7" y="524.72" fill="#1a1a1a" font-size="16" text-anchor="end" letter-spacing="0.6" stroke="#1a1a1a" stroke-width="0.25" font-family='Liberation Mono',monospace>95</text><line x1="1603" y1="528.99" x2="1641" y2="528.99" stroke="#4a4a4a" stroke-width="1.3"/><text x="1635.7" y="545.99" fill="#1a1a1a" font-size="16" text-anchor="end" letter-spacing="0.6" stroke="#1a1a1a" stroke-width="0.25" font-family='Liberation Mono',monospace>100</text><line x1="1603" y1="550.26" x2="1641" y2="550.26" stroke="#4a4a4a" stroke-width="1.3"/><text x="1635.7" y="567.26" fill="#1a1a1a" font-size="16" text-anchor="end" letter-spacing="0.6" stroke="#1a1a1a" stroke-width="0.25" font-family='Liberation Mono',monospace>105</text><line x1="1603" y1="571.53" x2="1641" y2="571.53" stroke="#4a4a4a" stroke-width="1.3"/><rect x="2299.4" y="140" width="3" height="725" fill="#4e6080"/></svg>
<div style="position:absolute;left:509px;top:872px;width:162px;height:24px;background:#2b73b8"></div>
<div style="position:absolute;left:535px;top:876px;white-space:pre;font-family:'Liberation Sans',sans-serif;font-size:15px;color:#f4f6fa;line-height:18px">Chart vs. Time</div>
<div style="position:absolute;left:652px;top:876px;white-space:pre;font-family:'Liberation Sans',sans-serif;font-size:14px;color:#eef2f8;line-height:18px">✕</div>
<svg style="position:absolute;left:0;top:0" width="2307" height="1705" viewBox="0 0 2307 1705"><defs>
<linearGradient id="plotbg" x1="0" y1="0" x2="0" y2="1"><stop offset="0" stop-color="#04040e"/><stop offset="0.5" stop-color="#020220"/><stop offset="1" stop-color="#000034"/></linearGradient>
<linearGradient id="infoA" x1="0" y1="0" x2="1" y2="1"><stop offset="0" stop-color="#000000"/><stop offset="0.45" stop-color="#030320"/><stop offset="1" stop-color="#0a0a78"/></linearGradient><linearGradient id="infoG" x1="0" y1="1" x2="0.914" y2="0.406"><stop offset="0" stop-color="#3e3e3e" stop-opacity="1"/><stop offset="0.5" stop-color="#000" stop-opacity="1"/><stop offset="0.62" stop-color="#000" stop-opacity="0.55"/><stop offset="0.9" stop-color="#000" stop-opacity="0"/><stop offset="1" stop-color="#000" stop-opacity="0"/></linearGradient>
<linearGradient id="infoB" x1="0" y1="0" x2="0" y2="1"><stop offset="0" stop-color="#000" stop-opacity="0.75"/><stop offset="0.45" stop-color="#000" stop-opacity="0.15"/><stop offset="1" stop-color="#000" stop-opacity="0"/></linearGradient>
<linearGradient id="sclA" x1="1" y1="1" x2="-0.17" y2="0.275"><stop offset="0" stop-color="#3e3e3e"/><stop offset="0.46" stop-color="#000000"/><stop offset="0.62" stop-color="#000060"/><stop offset="1" stop-color="#000084"/></linearGradient><linearGradient id="sclG" x1="1" y1="1" x2="0.06" y2="0.342"><stop offset="0" stop-color="#3e3e3e" stop-opacity="1"/><stop offset="0.5" stop-color="#000" stop-opacity="1"/><stop offset="0.62" stop-color="#000" stop-opacity="0.55"/><stop offset="0.9" stop-color="#000" stop-opacity="0"/><stop offset="1" stop-color="#000" stop-opacity="0"/></linearGradient>
<linearGradient id="vdark" x1="0" y1="0" x2="0" y2="1"><stop offset="0" stop-color="#000" stop-opacity="0.85"/><stop offset="1" stop-color="#000" stop-opacity="0"/></linearGradient><clipPath id="plotclip"><rect x="733" y="900" width="1422" height="755"/></clipPath>
</defs><rect x="509" y="896" width="1793" height="3.5" fill="#2b73b8"/><rect x="510" y="899.5" width="1791" height="758.5" fill="#ededf5"/><linearGradient id="ia0" gradientUnits="userSpaceOnUse" x1="436.6" y1="971.9" x2="626.6" y2="790.8"><stop offset="0" stop-color="#3c3c3c"/><stop offset="0.394" stop-color="#000"/><stop offset="0.605" stop-color="#00006a"/><stop offset="1" stop-color="#0000a0"/></linearGradient><rect x="511.5" y="900.5" width="219.5" height="149" fill="url(#ia0)"/><rect x="511.5" y="900.5" width="219.5" height="149" fill="url(#vdark)"/><rect x="733.2" y="900.5" width="1421.8" height="149" fill="url(#plotbg)"/><linearGradient id="sa0" gradientUnits="userSpaceOnUse" x1="2372.3" y1="959.7" x2="2213" y2="831.1"><stop offset="0" stop-color="#3c3c3c"/><stop offset="0.46" stop-color="#000"/><stop offset="0.56" stop-color="#000070"/><stop offset="1" stop-color="#0000a0"/></linearGradient><rect x="2157" y="900.5" width="142" height="149" fill="url(#sa0)"/><rect x="2157" y="900.5" width="142" height="149" fill="url(#vdark)"/><line x1="733.2" y1="937.8" x2="2155" y2="937.8" stroke="#5a5a5a" stroke-width="1.2"/><line x1="733.2" y1="975" x2="2155" y2="975" stroke="#5a5a5a" stroke-width="1.2"/><line x1="733.2" y1="1012.2" x2="2155" y2="1012.2" stroke="#5a5a5a" stroke-width="1.2"/><linearGradient id="ia1" gradientUnits="userSpaceOnUse" x1="436.6" y1="1122.7" x2="626.6" y2="941.6"><stop offset="0" stop-color="#3c3c3c"/><stop offset="0.394" stop-color="#000"/><stop offset="0.605" stop-color="#00006a"/><stop offset="1" stop-color="#0000a0"/></linearGradient><rect x="511.5" y="1051.3" width="219.5" height="149" fill="url(#ia1)"/><rect x="511.5" y="1051.3" width="219.5" height="149" fill="url(#vdark)"/><rect x="733.2" y="1051.3" width="1421.8" height="149" fill="url(#plotbg)"/><linearGradient id="sa1" gradientUnits="userSpaceOnUse" x1="2372.3" y1="1110.5" x2="2213" y2="981.9"><stop offset="0" stop-color="#3c3c3c"/><stop offset="0.46" stop-color="#000"/><stop offset="0.56" stop-color="#000070"/><stop offset="1" stop-color="#0000a0"/></linearGradient><rect x="2157" y="1051.3" width="142" height="149" fill="url(#sa1)"/><rect x="2157" y="1051.3" width="142" height="149" fill="url(#vdark)"/><line x1="733.2" y1="1088.5" x2="2155" y2="1088.5" stroke="#5a5a5a" stroke-width="1.2"/><line x1="733.2" y1="1125.8" x2="2155" y2="1125.8" stroke="#5a5a5a" stroke-width="1.2"/><line x1="733.2" y1="1163" x2="2155" y2="1163" stroke="#5a5a5a" stroke-width="1.2"/><linearGradient id="ia2" gradientUnits="userSpaceOnUse" x1="436.6" y1="1273.9" x2="626.6" y2="1092.8"><stop offset="0" stop-color="#3c3c3c"/><stop offset="0.394" stop-color="#000"/><stop offset="0.605" stop-color="#00006a"/><stop offset="1" stop-color="#0000a0"/></linearGradient><rect x="511.5" y="1202.5" width="219.5" height="149.3" fill="url(#ia2)"/><rect x="511.5" y="1202.5" width="219.5" height="149.3" fill="url(#vdark)"/><rect x="733.2" y="1202.5" width="1421.8" height="149.3" fill="url(#plotbg)"/><linearGradient id="sa2" gradientUnits="userSpaceOnUse" x1="2372.3" y1="1261.7" x2="2213" y2="1133.1"><stop offset="0" stop-color="#3c3c3c"/><stop offset="0.46" stop-color="#000"/><stop offset="0.56" stop-color="#000070"/><stop offset="1" stop-color="#0000a0"/></linearGradient><rect x="2157" y="1202.5" width="142" height="149.3" fill="url(#sa2)"/><rect x="2157" y="1202.5" width="142" height="149.3" fill="url(#vdark)"/><line x1="733.2" y1="1239.8" x2="2155" y2="1239.8" stroke="#5a5a5a" stroke-width="1.2"/><line x1="733.2" y1="1277.2" x2="2155" y2="1277.2" stroke="#5a5a5a" stroke-width="1.2"/><line x1="733.2" y1="1314.5" x2="2155" y2="1314.5" stroke="#5a5a5a" stroke-width="1.2"/><linearGradient id="ia3" gradientUnits="userSpaceOnUse" x1="436.6" y1="1425.2" x2="626.6" y2="1244.1"><stop offset="0" stop-color="#3c3c3c"/><stop offset="0.394" stop-color="#000"/><stop offset="0.605" stop-color="#00006a"/><stop offset="1" stop-color="#0000a0"/></linearGradient><rect x="511.5" y="1353.8" width="219.5" height="149.5" fill="url(#ia3)"/><rect x="511.5" y="1353.8" width="219.5" height="149.5" fill="url(#vdark)"/><rect x="733.2" y="1353.8" width="1421.8" height="149.5" fill="url(#plotbg)"/><linearGradient id="sa3" gradientUnits="userSpaceOnUse" x1="2372.3" y1="1413" x2="2213" y2="1284.4"><stop offset="0" stop-color="#3c3c3c"/><stop offset="0.46" stop-color="#000"/><stop offset="0.56" stop-color="#000070"/><stop offset="1" stop-color="#0000a0"/></linearGradient><rect x="2157" y="1353.8" width="142" height="149.5" fill="url(#sa3)"/><rect x="2157" y="1353.8" width="142" height="149.5" fill="url(#vdark)"/><line x1="733.2" y1="1391.2" x2="2155" y2="1391.2" stroke="#5a5a5a" stroke-width="1.2"/><line x1="733.2" y1="1428.5" x2="2155" y2="1428.5" stroke="#5a5a5a" stroke-width="1.2"/><line x1="733.2" y1="1465.9" x2="2155" y2="1465.9" stroke="#5a5a5a" stroke-width="1.2"/><linearGradient id="ia4" gradientUnits="userSpaceOnUse" x1="436.6" y1="1576.6" x2="626.6" y2="1395.5"><stop offset="0" stop-color="#3c3c3c"/><stop offset="0.394" stop-color="#000"/><stop offset="0.605" stop-color="#00006a"/><stop offset="1" stop-color="#0000a0"/></linearGradient><rect x="511.5" y="1505.2" width="219.5" height="149" fill="url(#ia4)"/><rect x="511.5" y="1505.2" width="219.5" height="149" fill="url(#vdark)"/><rect x="733.2" y="1505.2" width="1421.8" height="149" fill="url(#plotbg)"/><linearGradient id="sa4" gradientUnits="userSpaceOnUse" x1="2372.3" y1="1564.4" x2="2213" y2="1435.8"><stop offset="0" stop-color="#3c3c3c"/><stop offset="0.46" stop-color="#000"/><stop offset="0.56" stop-color="#000070"/><stop offset="1" stop-color="#0000a0"/></linearGradient><rect x="2157" y="1505.2" width="142" height="149" fill="url(#sa4)"/><rect x="2157" y="1505.2" width="142" height="149" fill="url(#vdark)"/><line x1="733.2" y1="1542.5" x2="2155" y2="1542.5" stroke="#5a5a5a" stroke-width="1.2"/><line x1="733.2" y1="1579.7" x2="2155" y2="1579.7" stroke="#5a5a5a" stroke-width="1.2"/><line x1="733.2" y1="1617" x2="2155" y2="1617" stroke="#5a5a5a" stroke-width="1.2"/><line x1="1353.4" y1="900" x2="1353.4" y2="1655" stroke="#d8d8e8" stroke-width="1.3"/><g clip-path="url(#plotclip)"><polyline fill="none" stroke="#f2f2f2" stroke-width="2.4" stroke-linejoin="round"  points="733,1038 739.7,1036.3 762,1038 772,1040.8 791,1041.7 797.6,1049.5 810.5,1049.5 817,1041.7 849,1043.4 854,1049.5 970,1049.5 976.5,1044 1387,1045 1393.6,1047.5 1585,1046.6 1597.9,1038.5 1623.6,1035.3 1652.6,1028.9 1665.5,1021.8 1675.2,1019.8 1684.8,1024 1694.5,1041 1707.4,1041.7 1717,1031.4 1726.7,1032 1739.6,1038.5 1762,1041.7 1778.3,1044.3 1842.7,1044.3 1852.4,1040.8 1871.7,1041.7 1923.2,1043.4 1987.7,1045 2116.5,1045 2132.6,1041.7 2145.5,1037.9 2155,1037.9"/><polyline fill="none" stroke="#ff2222" stroke-width="2.4" stroke-linejoin="round"  points="733,1003 778,1004.7 836,1009 968,1014.4 975,1020 994,1023 1020,1020 1039,1015 1049,1020 1084,1021 1123,1014.4 1348.5,1014.4 1406.5,1029 1440,1030.5 1585,1030.5 1597.9,1016 1604.3,1014.4 1614,1020.8 1623.6,1017.6 1636.5,1017.6 1646.2,1008 1684.8,979.9 1704.2,990.2 1723.5,1008 1746,1004.7 1762,1005.7 1794.4,1009.5 1826.6,1012.8 1842.7,1013.4 1891,1010.2 1955.5,1006.3 1994,1006.3 2026.3,1013.4 2042.4,1017.6 2077.9,1017.6 2116.5,1012.8 2155,1009.5"/><polyline fill="none" stroke="#22ff44" stroke-width="2.4" stroke-linejoin="round"  points="733,1003.7 762,1004.7 778,1009.5 785,1005.6 955.5,1013.4 1084,1021.8 1213,1031.4 1342,1047.5 1345,1049.5 1626.9,1049 1646.2,1043.4 1684.8,1038.5 1746,1035.3 1810.5,1037.9 2020,1037.9 2068.2,1040.1 2116.5,1037.9 2155,1036.9"/><polyline fill="none" stroke="#ff22ff" stroke-width="2.4" stroke-linejoin="round"  points="733.2,1141.8 739.7,1141 746.1,1143.1 762.2,1142.6 778.3,1158.7 794.4,1161.1 800.9,1164.7 808.9,1164.7 818.6,1157.1 829.9,1156.3 841.1,1162.8 849.2,1165.2 863.7,1162.8 894.3,1162.8 897.5,1164 947.5,1164 950.7,1162.8 968.4,1162.8 987.7,1157.9 1002.2,1155.5 1015.1,1156.3 1032.8,1161.1 1044.1,1162.8 1060.2,1157.9 1084.4,1157.9 1092,1160 1123.5,1163.6 1147.6,1165.5 1386.8,1165.5 1398.9,1161.6 1418.2,1154.4 1444.8,1152.7 1456.9,1154.4 1582.5,1153.9 1589.8,1147.9 1594.6,1122.5 1601.9,1122 1611.5,1126.8 1622.3,1109 1629.7,1110.3 1642,1111.5 1649.4,1114 1656.8,1102.9 1671.5,1109 1680.1,1121.4 1686.3,1143.5 1692.4,1173 1699.8,1175.5 1708.4,1168.1 1714.6,1131.2 1725.7,1115.2 1733,1126.3 1740.4,1148.4 1755.2,1153.4 1767.5,1164.4 1782.3,1166.9 1841.3,1163.2 1849.9,1147.2 1858.5,1144.7 1880.7,1149.7 1900.4,1157 1922.5,1158.3 1934.8,1166.9 1979.1,1168.1 2028.3,1164.4 2053,1159.5 2114.5,1163.7 2126.8,1153.4 2139.1,1149.7 2146.5,1134.9 2155,1134.9"/><polyline fill="none" stroke="#22ff44" stroke-width="2.4" stroke-linejoin="round"  points="733.2,1112 738,1146.6 744.5,1082.2 750.1,1124 756.6,1100 763,1137 773.5,1111.2 779.1,1083.8 785.6,1146.6 791.2,1077.4 796.8,1077.4 802.5,1199.5 813.8,1199.5 819.4,1191.8 825.8,1088.7 831.5,1074.2 836.3,1074.2 841.1,1072.2 846,1073.4 849.2,1083.8 852.4,1178.9 858.9,1199.5 978.1,1199.5 980.5,1195 986.1,1117.7 992.6,1090.3 997.4,1076.6 1003.8,1075 1010.3,1075.8 1016.7,1079.8 1026.4,1083.8 1029.6,1082.2 1037.7,1084.6 1043.3,1098.3 1048.9,1198.2 1053.8,1198.2 1060.2,1111.2 1066.7,1079.8 1073.1,1076.6 1081.2,1077.4 1089.7,1082.6 1104.2,1082.6 1111.4,1091 1118.7,1139.4 1123.5,1086.2 1129.5,1086.2 1134.4,1105.6 1140.4,1088.7 1157.3,1114 1163.4,1093.5 1169.4,1117.6 1175.4,1117.6 1181.5,1092.3 1186.3,1143 1191.1,1103.2 1197.2,1085 1203.2,1173.2 1209.3,1081.4 1215.3,1089.9 1221.3,1140.6 1227.4,1087.4 1233.4,1120 1238.3,1120 1244.3,1093.5 1249.1,1140.6 1254,1089.9 1260,1131 1267.2,1122.5 1273.3,1091 1283,1100.7 1289,1129.7 1295,1102 1301,1144.2 1307.1,1094.7 1313.1,1087.4 1318,1139.4 1324,1108 1330,1116.4 1335.6,1088.7 1342.1,1155.1 1348.2,1086.2 1357.8,1179.3 1364.6,1086.2 1370,1185.3 1382,1086.2 1388,1169.6 1394.1,1156.3 1400.1,1131 1405,1140.6 1411,1149 1415.8,1080.2 1420.7,1076.6 1427.9,1076.6 1442.4,1088.7 1449.7,1108 1461.7,1187.7 1473.8,1088.7 1478.6,1108 1484.7,1185.3 1490.7,1158.7 1497.5,1092.3 1507.6,1188.9 1513.7,1181.7 1524.5,1092.3 1530.6,1100.7 1534.2,1175.6 1541.5,1181.7 1546.3,1100.7 1553.5,1091 1559.6,1103.2 1565.6,1186.5 1576.5,1087.4 1582.5,1091 1593.4,1187.7 1599.5,1097.1 1605.5,1104.4 1611.5,1160 1617.4,1123.8 1622.3,1121.4 1628.5,1084.5 1634.6,1186.6 1640.8,1089.4 1645.7,1095.5 1651.8,1091.8 1656.8,1162 1662.9,1079.5 1669.1,1182.9 1676.4,1160.7 1681.4,1158.3 1686.3,1086.9 1692.4,1069.7 1698.6,1078.3 1703.5,1074.6 1708.4,1185.3 1714.6,1189 1722,1090.6 1728.1,1141 1734.3,1152.1 1739.2,1082 1744.1,1106.6 1750.3,1083.2 1756.4,1086.9 1762.6,1134.9 1767.5,1078.3 1772.4,1136.1 1784.7,1136.1 1790.9,1171.8 1797,1184.1 1803.2,1175.5 1808.1,1162 1813,1168.1 1819.2,1150.9 1825.3,1191.5 1830.2,1190.3 1836.4,1184.1 1842.6,1184.1 1847.5,1107.8 1854.9,1128.7 1859.8,1178 1865.9,1138.6 1870.9,1166.9 1883.2,1131.2 1890.5,1095.5 1896.7,1080.8 1901.6,1082 1906.5,1131.2 1917.6,1138.6 1923.8,1178 1928.7,1109 1934.8,1098 1941,1196.4 1947.1,1115.2 1952,1157 1958.2,1126.3 1964.4,1126.3 1970.5,1139.8 1975.4,1117.7 1980.4,1170.6 1985.3,1080.8 1991.4,1157 1997.6,1091.8 2003.7,1144.7 2008.7,1146 2019.7,1191.5 2025.9,1147.2 2032,1185.3 2038.2,1191.5 2043.1,1190.3 2053,1155.8 2059.1,1175.5 2065.3,1134.9 2070.2,1138.6 2076.3,1136.1 2082.5,1144.7 2088.6,1133.7 2093.6,1142.3 2099.7,1128.7 2105.9,1138.6 2112,1138.6 2117,1095.5 2121.9,1104.1 2126.8,1190.3 2132.9,1090.6 2139.1,1078.3 2145.2,1085.7 2150.2,1111.5 2155,1120.1"/><polyline fill="none" stroke="#22ff44" stroke-width="2.4" stroke-linejoin="round"  points="733.2,1340 739.7,1338.5 746.1,1341.8 762.2,1340 775.1,1348.8 791.2,1349.8 797.7,1350.5 810.5,1350.5 815.4,1348.2 829.9,1348.2 836.3,1350.5 858.9,1350.5 862,1350 891.1,1350 894.3,1350.5 1585,1350.5 1594.6,1339.2 1614,1335.3 1620.4,1330.5 1636.5,1329.5 1649.4,1325.6 1659.1,1312.8 1668.7,1312.8 1681.6,1325.6 1688.1,1350.5 1701,1350.5 1710.6,1331.4 1721.9,1328.2 1733.2,1341.8 1746,1345.6 1762.2,1350.5 1839.5,1350.5 1845.9,1345.6 1878.1,1345.6 1897.5,1349.8 1923.2,1348.8 1929.7,1350.5 2113.3,1350.5 2129.4,1345 2142.3,1339.2 2155,1336.9"/><polyline fill="none" stroke="#f2f2f2" stroke-width="2.4" stroke-linejoin="round"  points="733.2,1208 742.9,1209 749.3,1205.8 768.7,1205.8 778.3,1217.7 789.6,1225.8 797.7,1227.4 802.5,1224.2 807.3,1238.7 817,1229 829.9,1222.6 836.3,1225.8 841.1,1237 852.4,1225.8 858.9,1239.3 865.3,1230.6 878.2,1233.8 891.1,1239.3 900.7,1235.4 910.4,1242.5 926.5,1236 939.4,1242.5 950.7,1233.8 962,1242.5 968.4,1238.7 973.2,1212.9 979.7,1341.8 991,1328.9 997.4,1328.9 1002.2,1332.1 1007.1,1312.8 1013.5,1324 1020,1303.1 1031.2,1272.5 1042.5,1249.9 1048.3,1214.5 1053.8,1328.9 1060.2,1332.7 1068.3,1328.9 1076.3,1327.3 1084.4,1311.1 1094,1291.8 1103.7,1277.3 1113.4,1258 1123,1242.5 1132.7,1236 1148.8,1241.2 1174.6,1242.5 1187.5,1243.5 1213.3,1240.3 1219.7,1246.7 1245.5,1243.5 1258.4,1240.3 1264.9,1246.7 1284.1,1246.7 1293.8,1241.2 1309.9,1240.3 1322.8,1246.7 1332.5,1242.5 1342.1,1245.1 1347,1269.3 1358.2,1277.3 1374.3,1282.2 1393.6,1311.1 1405,1324 1413,1320.8 1421,1328.9 1430.7,1321.8 1459.3,1321.8 1462.6,1323.4 1481.9,1322.4 1493.2,1321.8 1502.8,1315.3 1507.7,1321.8 1514.1,1319.8 1523.8,1327.3 1530.2,1320.8 1535,1323.1 1541.5,1316 1552.8,1320.8 1568.9,1323.1 1581.8,1319.2 1591.4,1315.3 1594.6,1303.1 1599.5,1245.1 1605.9,1233.8 1612.4,1238 1623.6,1259.6 1630.1,1255.4 1636.5,1256.4 1643,1251.5 1651,1232.2 1659.1,1237 1668.7,1233.8 1676.8,1227.4 1686.5,1203.9 1694.5,1217.7 1701,1220.9 1710.6,1233.8 1715.5,1224.2 1721.9,1230.6 1728.3,1259.6 1733.2,1269.3 1739,1206.4 1744.4,1211.3 1749.3,1209 1760.6,1220.9 1768.6,1237 1775.1,1238.7 1781.5,1233.8 1791.2,1238.7 1802.4,1232.2 1808.9,1238 1813.7,1227.4 1820.2,1241.2 1826.6,1243.5 1841.1,1243.5 1848.5,1348.2 1855.6,1216.1 1868.5,1216.1 1874.9,1219.3 1887.8,1223.2 1897.5,1230.6 1907.1,1232.2 1920,1228.4 1934.5,1233.8 1941,1272.5 1947.4,1236 1952.2,1243.5 1961.9,1240.3 1971.6,1241.9 1987.7,1240.3 1997.3,1230.6 2007,1238.7 2016.7,1232.2 2024.7,1241.9 2031.2,1229 2037.6,1240.3 2048.9,1256.4 2055.3,1249.9 2066.6,1251.5 2071.4,1262.8 2081.1,1238.7 2087.5,1246.7 2106.9,1238 2116.5,1245.1 2132.6,1227.4 2139.1,1348.2 2145.5,1222.6 2155,1220"/><polyline fill="none" stroke="#ff2222" stroke-width="2.4" stroke-linejoin="round" transform="translate(0,-1)" points="733.2,1472.4 739.7,1470.5 746.1,1473.2 762.2,1472.7 778.3,1482.9 781.5,1481.3 791.2,1481.3 797.7,1502 807.3,1502 813.8,1480.5 820.2,1478.1 826.6,1478.1 831.5,1486.1 836.3,1481.3 847.6,1484.5 854,1502 967.6,1502 974,1481.3 984.5,1478.9 991,1474 995.8,1478.9 1010.3,1478.9 1020,1481.3 1032.8,1482.9 1048.9,1482.9 1058.6,1478.9 1071.5,1478.9 1077.9,1480.5 1090,1480.5 1116,1482.9 1401.3,1485.3 1413.4,1481.7 1582.5,1481.7 1589.8,1470.8 1594.6,1456.3 1605.5,1462.3 1610,1460.7 1622.3,1447.2 1629.7,1449.7 1646.9,1450.9 1656.8,1443.5 1671.5,1446 1681.4,1455.8 1691.2,1487.8 1706,1487.8 1713.4,1460.7 1720.7,1454.6 1728.1,1455.8 1735.5,1471.8 1752.7,1480.4 1767.5,1485.3 1806.9,1485.3 1841.3,1482.9 1847.5,1474.3 1858.5,1473 1880.7,1476.7 1900.4,1481.7 1925,1482.9 1937.3,1486.6 2003.7,1486.6 2028.3,1484.1 2053,1481.7 2121.9,1484.1 2131.7,1476 2139.1,1476 2146.5,1465.7 2155,1466.9"/><polyline fill="none" stroke="#ff8a22" stroke-width="2.4" stroke-linejoin="round"  points="733.2,1472.4 739.7,1470.5 746.1,1473.2 762.2,1472.7 778.3,1482.9 781.5,1481.3 791.2,1481.3 797.7,1502 807.3,1502 813.8,1480.5 820.2,1478.1 826.6,1478.1 831.5,1486.1 836.3,1481.3 847.6,1484.5 854,1502 967.6,1502 974,1481.3 984.5,1478.9 991,1474 995.8,1478.9 1010.3,1478.9 1020,1481.3 1032.8,1482.9 1048.9,1482.9 1058.6,1478.9 1071.5,1478.9 1077.9,1480.5 1090,1480.5 1116,1482.9 1401.3,1485.3 1413.4,1481.7 1582.5,1481.7 1589.8,1470.8 1594.6,1456.3 1605.5,1462.3 1610,1460.7 1622.3,1447.2 1629.7,1449.7 1646.9,1450.9 1656.8,1443.5 1671.5,1446 1681.4,1455.8 1691.2,1487.8 1706,1487.8 1713.4,1460.7 1720.7,1454.6 1728.1,1455.8 1735.5,1471.8 1752.7,1480.4 1767.5,1485.3 1806.9,1485.3 1841.3,1482.9 1847.5,1474.3 1858.5,1473 1880.7,1476.7 1900.4,1481.7 1925,1482.9 1937.3,1486.6 2003.7,1486.6 2028.3,1484.1 2053,1481.7 2121.9,1484.1 2131.7,1476 2139.1,1476 2146.5,1465.7 2155,1466.9"/><polyline fill="none" stroke="#7a6cf0" stroke-width="2.2" stroke-linejoin="round"  points="733.2,1419.3 738,1482.9 744.5,1380.6 750.9,1464.4 756.6,1398.3 763,1486.1 767.9,1453.1 774.3,1409.6 779.1,1383.8 785.6,1490.1 791.2,1387.9 797.7,1380 803.3,1502 813,1502 819.4,1495.8 825.8,1393 831.5,1374.2 842.8,1373 847.6,1375 849.2,1385.4 853.2,1482.1 858.9,1502 978.9,1502 981.3,1498.2 986.1,1420 994.2,1380.6 1003.8,1376 1028,1383.8 1042.5,1386.2 1044.9,1406.4 1049.7,1501.4 1054.6,1501.4 1060.2,1419.3 1066.7,1375 1073.1,1378.2 1081.2,1381 1095.2,1383.4 1109.7,1383.4 1116.9,1393.3 1124.2,1450.4 1129,1387.6 1135,1387.6 1139.9,1410.5 1145.9,1390.6 1162.8,1420.4 1168.9,1396.2 1174.9,1424.7 1180.9,1424.7 1187,1394.8 1191.8,1454.7 1196.6,1407.7 1202.7,1386.2 1208.7,1490.3 1214.8,1382 1220.8,1392 1226.8,1451.8 1232.9,1389 1238.9,1427.5 1243.8,1427.5 1249.8,1396.2 1254.6,1451.8 1259.5,1392 1265.5,1440.5 1272.7,1430.5 1278.8,1393.3 1288.5,1404.7 1294.5,1439 1300.5,1406.3 1306.5,1456.1 1312.6,1397.7 1318.6,1389 1323.5,1450.4 1329.5,1413.3 1335.5,1423.3 1341.1,1390.6 1347.6,1468.9 1353.7,1387.6 1363.3,1497.5 1370.1,1387.6 1375.5,1502 1387.5,1387.6 1393.5,1486 1399.6,1470.3 1405.6,1440.5 1410.5,1451.8 1416.5,1461.7 1421.3,1380.5 1426.2,1376.3 1433.4,1376.3 1447.9,1390.6 1455.2,1413.3 1467.2,1502 1479.3,1390.6 1484.1,1413.3 1490.2,1502 1496.2,1473.2 1503,1394.8 1513.1,1502 1519.2,1500.3 1530,1394.8 1536.1,1404.7 1539.7,1493.1 1547,1500.3 1551.8,1404.7 1559,1393.3 1565.1,1407.7 1571.1,1502 1582,1389 1588,1393.3 1598.9,1502 1605,1400.5 1611,1409.1 1617,1474.7 1622.9,1432 1627.8,1429.2 1634,1385.6 1640.1,1502 1646.3,1391.4 1651.2,1398.6 1657.3,1394.2 1662.3,1477.1 1668.4,1379.7 1674.6,1501.7 1681.9,1475.5 1686.9,1472.7 1691.8,1388.5 1697.9,1372 1704.1,1378.3 1709,1373.9 1713.9,1502 1720.1,1502 1727.5,1392.8 1733.6,1452.3 1739.8,1465.4 1744.7,1382.7 1749.6,1411.7 1755.8,1384.1 1761.9,1388.5 1768.1,1445.1 1773,1378.3 1777.9,1446.5 1790.2,1446.5 1796.4,1488.6 1802.5,1502 1808.7,1493 1813.6,1477.1 1818.5,1484.3 1824.7,1464 1830.8,1502 1835.7,1502 1841.9,1502 1848.1,1502 1853,1413.1 1860.4,1437.8 1865.3,1496 1871.4,1449.5 1876.4,1482.9 1888.7,1440.7 1896,1398.6 1902.2,1381.3 1907.1,1382.7 1912,1440.7 1923.1,1449.5 1929.3,1496 1934.2,1414.5 1940.3,1401.5 1946.5,1502 1952.6,1421.8 1957.5,1471.2 1963.7,1434.9 1969.9,1434.9 1976,1450.9 1980.9,1424.8 1985.9,1487.2 1990.8,1381.3 1996.9,1471.2 2003.1,1394.2 2009.2,1456.7 2014.2,1458.2 2025.2,1502 2031.4,1459.6 2037.5,1502 2043.7,1502 2048.6,1502 2058.5,1469.8 2064.6,1493 2070.8,1445.1 2075.7,1449.5 2081.8,1446.5 2088,1456.7 2094.1,1443.7 2099.1,1453.8 2105.2,1437.8 2111.4,1449.5 2117.5,1449.5 2122.5,1398.6 2127.4,1408.7 2132.3,1502 2138.4,1392.8 2144.6,1378.3 2150.7,1387 2155.7,1417.5 2160.5,1427.6"/><polyline fill="none" stroke="#22eeff" stroke-width="2.4" stroke-linejoin="round"  points="733.2,1411.2 738,1416 745.3,1389.5 750.1,1389.5 756.6,1403.2 761.4,1396.7 767.9,1392.7 774.3,1410.4 779.1,1387.9 785.6,1406.4 791.2,1380.6 797.7,1380.6 803.3,1502 813,1502 819.4,1495.8 825.8,1395.1 831.5,1378.2 836.3,1378.2 842.8,1375 847.6,1377.4 849.2,1385.4 853.2,1482.1 858.9,1502 978.9,1502 981.3,1498.2 986.1,1425.7 995.8,1382.2 1003.8,1378.2 1010.3,1378.7 1024.8,1387 1031.2,1386.2 1037.7,1391.9 1043.3,1413.6 1049.7,1501.4 1054.6,1501.4 1060.2,1419.3 1066.7,1388.7 1073.1,1380.6 1081.2,1380.6 1089.7,1385.1 1104.2,1385.1 1111.4,1393.5 1118.7,1441.9 1123.5,1388.7 1129.5,1388.7 1134.4,1408.1 1140.4,1391.2 1157.3,1416.5 1163.4,1396 1169.4,1420.1 1175.4,1420.1 1181.5,1394.8 1186.3,1445.5 1191.1,1405.7 1197.2,1387.5 1203.2,1475.7 1209.3,1383.9 1215.3,1392.4 1221.3,1443.1 1227.4,1389.9 1233.4,1422.5 1238.3,1422.5 1244.3,1396 1249.1,1443.1 1254,1392.4 1260,1433.5 1267.2,1425 1273.3,1393.5 1283,1403.2 1289,1432.2 1295,1404.5 1301,1446.7 1307.1,1397.2 1313.1,1389.9 1318,1441.9 1324,1410.5 1330,1418.9 1335.6,1391.2 1342.1,1457.6 1348.2,1388.7 1357.8,1481.8 1364.6,1388.7 1370,1487.8 1382,1388.7 1388,1472.1 1394.1,1458.8 1400.1,1433.5 1405,1443.1 1411,1451.5 1415.8,1382.7 1420.7,1379.1 1427.9,1379.1 1442.4,1391.2 1449.7,1410.5 1461.7,1490.2 1473.8,1391.2 1478.6,1410.5 1484.7,1487.8 1490.7,1461.2 1497.5,1394.8 1507.6,1491.4 1513.7,1484.2 1524.5,1394.8 1530.6,1403.2 1534.2,1478.1 1541.5,1484.2 1546.3,1403.2 1553.5,1393.5 1559.6,1405.7 1565.6,1489 1576.5,1389.9 1582.5,1393.5 1593.4,1490.2 1599.5,1399.6 1605.5,1406.9 1611.5,1462.5 1617.4,1426.3 1622.3,1423.9 1628.5,1387 1634.6,1489.1 1640.8,1391.9 1645.7,1398 1651.8,1394.3 1656.8,1464.5 1662.9,1382 1669.1,1485.4 1676.4,1463.2 1681.4,1460.8 1686.3,1389.4 1692.4,1372.2 1698.6,1380.8 1703.5,1377.1 1708.4,1487.8 1714.6,1491.5 1722,1393.1 1728.1,1443.5 1734.3,1454.6 1739.2,1384.5 1744.1,1409.1 1750.3,1385.7 1756.4,1389.4 1762.6,1437.4 1767.5,1380.8 1772.4,1438.6 1784.7,1438.6 1790.9,1474.3 1797,1486.6 1803.2,1478 1808.1,1464.5 1813,1470.6 1819.2,1453.4 1825.3,1494 1830.2,1492.8 1836.4,1486.6 1842.6,1486.6 1847.5,1410.3 1854.9,1431.2 1859.8,1480.5 1865.9,1441.1 1870.9,1469.4 1883.2,1433.7 1890.5,1398 1896.7,1383.3 1901.6,1384.5 1906.5,1433.7 1917.6,1441.1 1923.8,1480.5 1928.7,1411.5 1934.8,1400.5 1941,1498.9 1947.1,1417.7 1952,1459.5 1958.2,1428.8 1964.4,1428.8 1970.5,1442.3 1975.4,1420.2 1980.4,1473.1 1985.3,1383.3 1991.4,1459.5 1997.6,1394.3 2003.7,1447.2 2008.7,1448.5 2019.7,1494 2025.9,1449.7 2032,1487.8 2038.2,1494 2043.1,1492.8 2053,1458.3 2059.1,1478 2065.3,1437.4 2070.2,1441.1 2076.3,1438.6 2082.5,1447.2 2088.6,1436.2 2093.6,1444.8 2099.7,1431.2 2105.9,1441.1 2112,1441.1 2117,1398 2121.9,1406.6 2126.8,1492.8 2132.9,1393.1 2139.1,1380.8 2145.2,1388.2 2150.2,1414 2155,1422.6"/><polygon fill="#7a6cf0" points="731,1505 735,1505 733,1538.7"/><polygon fill="#7a6cf0" points="754.4,1505 758.4,1505 756.4,1541"/><polygon fill="#7a6cf0" points="1006.7,1505 1010.7,1505 1008.7,1556.4"/><polygon fill="#7a6cf0" points="1197,1505 1203,1505 1200,1583.8"/><polygon fill="#7a6cf0" points="1204,1505 1210,1505 1207,1583.8"/><polygon fill="#7a6cf0" points="1299,1505 1305,1505 1302,1591.8"/><polygon fill="#7a6cf0" points="1305,1505 1311,1505 1308,1591.8"/><polygon fill="#7a6cf0" points="1430.3,1505 1434.3,1505 1432.3,1593.4"/><polygon fill="#7a6cf0" points="1449.3,1505 1453.3,1505 1451.3,1516"/><polygon fill="#7a6cf0" points="1499.2,1505 1503.2,1505 1501.2,1515.5"/><polygon fill="#7a6cf0" points="1609.4,1505 1615.4,1505 1612.4,1543.5"/><polygon fill="#7a6cf0" points="1811.7,1505 1815.7,1505 1813.7,1513"/><polygon fill="#7a6cf0" points="1827.5,1505 1833.5,1505 1830.5,1550"/><polygon fill="#7a6cf0" points="1881,1505 1885,1505 1883,1509.7"/><polygon fill="#7a6cf0" points="2131.3,1505 2137.3,1505 2134.3,1540.3"/><line x1="733" y1="1505.4" x2="2155" y2="1505.4" stroke="#7a6cf0" stroke-width="1.6"/><polyline fill="none" stroke="#ff2222" stroke-width="2.4" stroke-linejoin="round"  points="733.2,1586.3 762.2,1587.6 778.3,1585.4 784.8,1578 794.4,1577.3 797.7,1573.5 839.5,1573.5 1132.7,1571.5 1181,1574.1 1440,1576.7 1588.2,1576.7 1594.6,1574.7 1601.1,1579 1639.7,1577.3 1665.5,1581.2 1684.8,1586.3 1697.7,1582.2 1720.3,1587 1730,1582.2 1742.8,1584.4 1749.3,1579 1762.2,1579 1768.6,1574.1 1794.4,1576.7 1852.4,1579.9 1858.8,1585.4 1923.2,1583.8 1929.7,1579 2010.2,1579 2019.9,1580.5 2132.6,1582.2 2155,1586.3"/><polyline fill="none" stroke="#ff8a22" stroke-width="2.4" stroke-linejoin="round"  points="733.2,1604.7 755.8,1604.7 768.7,1606.3 775.1,1598.3 786.4,1598.3 797.7,1574.1 815.4,1574.1 820.2,1581.2 836.3,1581.2 842.8,1572.5 1135.9,1570.9 1181,1574.7 1440,1575.7 1591.4,1576.7 1599.5,1590.9 1617.2,1590.9 1626.9,1581.2 1649.4,1582.2 1659.1,1587.6 1675.2,1587.6 1684.8,1606.3 1691.3,1574.7 1704.2,1574.7 1713.8,1606.3 1730,1591.8 1742.8,1596.6 1750.9,1583.8 1762.2,1585.4 1768.6,1575.7 1800.8,1581.2 1849.2,1584.4 1855.6,1596 1884.6,1596 1891,1585.4 1923.2,1587.6 2019.9,1584.4 2084.3,1583.8 2116.5,1582.2 2123,1590.9 2142.3,1590.9 2147.1,1596 2155,1596"/><polyline fill="none" stroke="#22eeff" stroke-width="2.4" stroke-linejoin="round"  points="733.2,1587.6 742.9,1585.4 755.8,1591.8 768.7,1578.9 775.1,1588.6 788,1589.6 797.7,1580.5 817,1580.5 820.2,1570.2 826.6,1578 846,1586.3 852.4,1580.5 981.3,1580.5 986.1,1567.7 992.6,1578 1029.6,1585.4 1042.5,1586.3 1052.2,1579.9 1060.2,1570.2 1068.3,1579.9 1110.2,1588.6 1118.2,1576.7 1124.6,1587.6 1148.8,1591.8 1156.9,1580.5 1163.3,1590.2 1169.7,1578.9 1179.4,1590.2 1187.5,1577.3 1197.1,1588.6 1210,1587 1219.7,1576.7 1227.7,1586.3 1261.6,1587 1266.4,1578.9 1274.5,1587 1279.3,1577.3 1284.1,1587 1290.5,1577.3 1298.6,1587.6 1306,1578 1314,1587.6 1322,1577.3 1330,1587.6 1338,1577.3 1346,1587.6 1354,1578 1362,1587.6 1370,1577.3 1378,1587.6 1390.4,1575.7 1400.1,1585.4 1409.8,1578.9 1419.4,1586.3 1440,1591.8 1456.1,1591.8 1465.8,1582.2 1477,1591.8 1488.3,1582.2 1498,1590.2 1510.9,1580.5 1520.5,1580.5 1527,1588.6 1536.6,1579 1546.3,1588.6 1556,1589.6 1565.6,1579 1575.3,1587.6 1588.2,1588.6 1597.9,1575.7 1605.9,1587 1612.4,1576.7 1618.8,1586.3 1623.6,1573.5 1630.1,1585.4 1634.9,1575.7 1643,1587 1659.1,1595 1668.7,1575.7 1673.6,1582.2 1680,1566 1688.1,1585.4 1710.6,1598.3 1717,1584.4 1726.7,1598.3 1733.2,1587 1742.8,1603.1 1755.7,1607.9 1762.2,1598.3 1767,1609.5 1773.4,1598.3 1804,1590.2 1808.9,1598.3 1820.2,1596.6 1826.6,1583.8 1839.5,1579 1852.4,1587 1858.8,1579.9 1865.2,1588.6 1871.7,1578 1878.1,1588.6 1889.4,1577.3 1897.5,1590.2 1910.4,1580.5 1916.8,1591.8 1923.2,1582.2 1929.7,1591.8 1941,1579.9 1947.4,1590.9 1955.5,1580.5 1961.9,1590.2 1970,1579.9 1976.4,1591.8 1984.5,1583.1 1990.9,1591.8 2010.2,1582.2 2016.7,1590.2 2023.1,1578 2048.9,1572.5 2053.7,1581.2 2061.8,1571.5 2068.2,1580.5 2077.9,1570.9 2084.3,1579 2087.5,1569.3 2097.2,1579 2105.3,1569.3 2111.7,1579 2127.8,1569.3 2135.9,1579 2155,1586.3"/></g><rect x="510" y="1049.4" width="1791" height="1.9" fill="#e8e8f0"/><rect x="510" y="1200.4" width="1791" height="1.9" fill="#e8e8f0"/><rect x="510" y="1351.9" width="1791" height="1.9" fill="#e8e8f0"/><rect x="510" y="1503.4" width="1791" height="1.9" fill="#e8e8f0"/><rect x="731" y="900" width="2" height="755" fill="#e8e8f0"/><rect x="2155" y="900" width="2" height="755" fill="#e8e8f0"/><text x="617" y="914" fill="#ff2222" font-size="14" text-anchor="end" letter-spacing="-0.2" font-family='Liberation Sans',sans-serif>RPM (rpm)</text><text x="613.5" y="943" fill="#ff2222" font-size="26" text-anchor="end" letter-spacing="0" font-family='Liberation Sans',sans-serif>1,414</text><text x="727.5" y="914" fill="#f2f2f2" font-size="14" text-anchor="end" letter-spacing="-0.2" font-family='Liberation Sans',sans-serif>INJ Duty (%)</text><text x="724.5" y="943" fill="#f2f2f2" font-size="26" text-anchor="end" letter-spacing="0" font-family='Liberation Sans',sans-serif>3.7</text><text x="617" y="966.5" fill="#22ff44" font-size="14" text-anchor="end" letter-spacing="-0.2" font-family='Liberation Sans',sans-serif>Speed (mph)</text><text x="613.5" y="995.5" fill="#22ff44" font-size="26" text-anchor="end" letter-spacing="0" font-family='Liberation Sans',sans-serif>0</text><text x="617" y="1064.8" fill="#22eeff" font-size="14" text-anchor="end" letter-spacing="-0.2" font-family='Liberation Sans',sans-serif>MAF (lb/min)</text><text x="727.5" y="1064.8" fill="#22ff44" font-size="14" text-anchor="end" letter-spacing="-0.2" font-family='Liberation Sans',sans-serif>O2 (mV)</text><text x="724.5" y="1093.8" fill="#22ff44" font-size="26" text-anchor="end" letter-spacing="0" font-family='Liberation Sans',sans-serif>533</text><text x="617" y="1117.3" fill="#ff22ff" font-size="14" text-anchor="end" letter-spacing="-0.2" font-family='Liberation Sans',sans-serif>MAP (kPa)</text><text x="613.5" y="1146.3" fill="#ff22ff" font-size="26" text-anchor="end" letter-spacing="0" font-family='Liberation Sans',sans-serif>25.2</text><text x="617" y="1216" fill="#ff2222" font-size="14" text-anchor="end" letter-spacing="-0.2" font-family='Liberation Sans',sans-serif>KR (°)</text><text x="727.5" y="1216" fill="#22ff44" font-size="14" text-anchor="end" letter-spacing="-0.2" font-family='Liberation Sans',sans-serif>TPS (%)</text><text x="724.5" y="1245" fill="#22ff44" font-size="26" text-anchor="end" letter-spacing="0" font-family='Liberation Sans',sans-serif>0.0</text><text x="617" y="1268.5" fill="#f2f2f2" font-size="14" text-anchor="end" letter-spacing="-0.2" font-family='Liberation Sans',sans-serif>Spark (°)</text><text x="613.5" y="1297.5" fill="#f2f2f2" font-size="26" text-anchor="end" letter-spacing="0" font-family='Liberation Sans',sans-serif>24.1</text><text x="617" y="1367.3" fill="#ff2222" font-size="14" text-anchor="end" letter-spacing="-0.2" font-family='Liberation Sans',sans-serif>INJ B1 (ms)</text><text x="613.5" y="1396.3" fill="#ff2222" font-size="26" text-anchor="end" letter-spacing="0" font-family='Liberation Sans',sans-serif>3.2</text><text x="727.5" y="1367.3" fill="#ff8a22" font-size="14" text-anchor="end" letter-spacing="-0.2" font-family='Liberation Sans',sans-serif>INJ B2 (ms)</text><text x="724.5" y="1396.3" fill="#ff8a22" font-size="26" text-anchor="end" letter-spacing="0" font-family='Liberation Sans',sans-serif>3.2</text><text x="617" y="1419.8" fill="#7a6cf0" font-size="14" text-anchor="end" letter-spacing="-0.2" font-family='Liberation Sans',sans-serif>O2 B1S1 (mV)</text><text x="613.5" y="1448.8" fill="#7a6cf0" font-size="26" text-anchor="end" letter-spacing="0" font-family='Liberation Sans',sans-serif>337</text><text x="727.5" y="1419.8" fill="#22eeff" font-size="14" text-anchor="end" letter-spacing="-0.2" font-family='Liberation Sans',sans-serif>O2 B2S1 (mV)</text><text x="724.5" y="1448.8" fill="#22eeff" font-size="26" text-anchor="end" letter-spacing="0" font-family='Liberation Sans',sans-serif>729</text><text x="617" y="1518.7" fill="#ff2222" font-size="14" text-anchor="end" letter-spacing="-0.2" font-family='Liberation Sans',sans-serif>LTFT B1 (%)</text><text x="613.5" y="1547.7" fill="#ff2222" font-size="26" text-anchor="end" letter-spacing="0" font-family='Liberation Sans',sans-serif>1.4</text><text x="727.5" y="1518.7" fill="#ff8a22" font-size="14" text-anchor="end" letter-spacing="-0.2" font-family='Liberation Sans',sans-serif>LTFT B2 (%)</text><text x="724.5" y="1547.7" fill="#ff8a22" font-size="26" text-anchor="end" letter-spacing="0" font-family='Liberation Sans',sans-serif>1.6</text><text x="617" y="1571.2" fill="#7a6cf0" font-size="14" text-anchor="end" letter-spacing="-0.2" font-family='Liberation Sans',sans-serif>STFT B1 (%)</text><text x="613.5" y="1600.2" fill="#7a6cf0" font-size="26" text-anchor="end" letter-spacing="0" font-family='Liberation Sans',sans-serif>46.7</text><text x="727.5" y="1571.2" fill="#22eeff" font-size="14" text-anchor="end" letter-spacing="-0.2" font-family='Liberation Sans',sans-serif>STFT B2 (%)</text><text x="724.5" y="1600.2" fill="#22eeff" font-size="26" text-anchor="end" letter-spacing="0" font-family='Liberation Sans',sans-serif>-2.9</text><text x="2159.5" y="913.5" fill="#ff2222" font-size="13.5" text-anchor="start" letter-spacing="-0.3" font-family='Liberation Sans',sans-serif>6,000</text><text x="2159.5" y="979.5" fill="#ff2222" font-size="13.5" text-anchor="start" letter-spacing="-0.3" font-family='Liberation Sans',sans-serif>3,000</text><text x="2159.5" y="1046.5" fill="#ff2222" font-size="13.5" text-anchor="start" letter-spacing="-0.3" font-family='Liberation Sans',sans-serif>0</text><text x="2198.5" y="913.5" fill="#22ff44" font-size="13.5" text-anchor="start" letter-spacing="-0.3" font-family='Liberation Sans',sans-serif>160</text><text x="2198.5" y="979.5" fill="#22ff44" font-size="13.5" text-anchor="start" letter-spacing="-0.3" font-family='Liberation Sans',sans-serif>80</text><text x="2198.5" y="1046.5" fill="#22ff44" font-size="13.5" text-anchor="start" letter-spacing="-0.3" font-family='Liberation Sans',sans-serif>0</text><text x="2226.5" y="913.5" fill="#f2f2f2" font-size="13.5" text-anchor="start" letter-spacing="-0.3" font-family='Liberation Sans',sans-serif>100</text><text x="2226.5" y="979.5" fill="#f2f2f2" font-size="13.5" text-anchor="start" letter-spacing="-0.3" font-family='Liberation Sans',sans-serif>50</text><text x="2226.5" y="1046.5" fill="#f2f2f2" font-size="13.5" text-anchor="start" letter-spacing="-0.3" font-family='Liberation Sans',sans-serif>0</text><text x="2159.5" y="1064.3" fill="#22eeff" font-size="13.5" text-anchor="start" letter-spacing="-0.3" font-family='Liberation Sans',sans-serif>60</text><text x="2159.5" y="1130.3" fill="#22eeff" font-size="13.5" text-anchor="start" letter-spacing="-0.3" font-family='Liberation Sans',sans-serif>30</text><text x="2159.5" y="1197.3" fill="#22eeff" font-size="13.5" text-anchor="start" letter-spacing="-0.3" font-family='Liberation Sans',sans-serif>0</text><text x="2179.5" y="1064.3" fill="#ff22ff" font-size="13.5" text-anchor="start" letter-spacing="-0.3" font-family='Liberation Sans',sans-serif>105.0</text><text x="2179.5" y="1130.3" fill="#ff22ff" font-size="13.5" text-anchor="start" letter-spacing="-0.3" font-family='Liberation Sans',sans-serif>52.5</text><text x="2179.5" y="1197.3" fill="#ff22ff" font-size="13.5" text-anchor="start" letter-spacing="-0.3" font-family='Liberation Sans',sans-serif>0.0</text><text x="2219" y="1064.3" fill="#22ff44" font-size="13.5" text-anchor="start" letter-spacing="-0.3" font-family='Liberation Sans',sans-serif>1,000</text><text x="2219" y="1130.3" fill="#22ff44" font-size="13.5" text-anchor="start" letter-spacing="-0.3" font-family='Liberation Sans',sans-serif>500</text><text x="2219" y="1197.3" fill="#22ff44" font-size="13.5" text-anchor="start" letter-spacing="-0.3" font-family='Liberation Sans',sans-serif>0</text><text x="2159.5" y="1215.5" fill="#ff2222" font-size="13.5" text-anchor="start" letter-spacing="-0.3" font-family='Liberation Sans',sans-serif>10</text><text x="2159.5" y="1281.5" fill="#ff2222" font-size="13.5" text-anchor="start" letter-spacing="-0.3" font-family='Liberation Sans',sans-serif>5</text><text x="2159.5" y="1348.5" fill="#ff2222" font-size="13.5" text-anchor="start" letter-spacing="-0.3" font-family='Liberation Sans',sans-serif>0</text><text x="2179" y="1215.5" fill="#f2f2f2" font-size="13.5" text-anchor="start" letter-spacing="-0.3" font-family='Liberation Sans',sans-serif>45.0</text><text x="2179" y="1281.5" fill="#f2f2f2" font-size="13.5" text-anchor="start" letter-spacing="-0.3" font-family='Liberation Sans',sans-serif>22.5</text><text x="2179" y="1348.5" fill="#f2f2f2" font-size="13.5" text-anchor="start" letter-spacing="-0.3" font-family='Liberation Sans',sans-serif>0.0</text><text x="2211" y="1215.5" fill="#22ff44" font-size="13.5" text-anchor="start" letter-spacing="-0.3" font-family='Liberation Sans',sans-serif>100</text><text x="2211" y="1281.5" fill="#22ff44" font-size="13.5" text-anchor="start" letter-spacing="-0.3" font-family='Liberation Sans',sans-serif>50</text><text x="2211" y="1348.5" fill="#22ff44" font-size="13.5" text-anchor="start" letter-spacing="-0.3" font-family='Liberation Sans',sans-serif>0</text><text x="2159.5" y="1366.8" fill="#ff2222" font-size="13.5" text-anchor="start" letter-spacing="-0.3" font-family='Liberation Sans',sans-serif>25.0</text><text x="2159.5" y="1432.8" fill="#ff2222" font-size="13.5" text-anchor="start" letter-spacing="-0.3" font-family='Liberation Sans',sans-serif>12.5</text><text x="2159.5" y="1499.8" fill="#ff2222" font-size="13.5" text-anchor="start" letter-spacing="-0.3" font-family='Liberation Sans',sans-serif>0.0</text><text x="2191.6" y="1366.8" fill="#7a6cf0" font-size="13.5" text-anchor="start" letter-spacing="-0.3" font-family='Liberation Sans',sans-serif>1,000</text><text x="2191.6" y="1432.8" fill="#7a6cf0" font-size="13.5" text-anchor="start" letter-spacing="-0.3" font-family='Liberation Sans',sans-serif>500</text><text x="2191.6" y="1499.8" fill="#7a6cf0" font-size="13.5" text-anchor="start" letter-spacing="-0.3" font-family='Liberation Sans',sans-serif>0</text><text x="2230.3" y="1366.8" fill="#ff8a22" font-size="13.5" text-anchor="start" letter-spacing="-0.3" font-family='Liberation Sans',sans-serif>25.0</text><text x="2230.3" y="1432.8" fill="#ff8a22" font-size="13.5" text-anchor="start" letter-spacing="-0.3" font-family='Liberation Sans',sans-serif>12.5</text><text x="2230.3" y="1499.8" fill="#ff8a22" font-size="13.5" text-anchor="start" letter-spacing="-0.3" font-family='Liberation Sans',sans-serif>0.0</text><text x="2262.3" y="1366.8" fill="#22eeff" font-size="13.5" text-anchor="start" letter-spacing="-0.3" font-family='Liberation Sans',sans-serif>1,000</text><text x="2262.3" y="1432.8" fill="#22eeff" font-size="13.5" text-anchor="start" letter-spacing="-0.3" font-family='Liberation Sans',sans-serif>500</text><text x="2262.3" y="1499.8" fill="#22eeff" font-size="13.5" text-anchor="start" letter-spacing="-0.3" font-family='Liberation Sans',sans-serif>0</text><text x="2159.5" y="1518.2" fill="#ff2222" font-size="13.5" text-anchor="start" letter-spacing="-0.3" font-family='Liberation Sans',sans-serif>25</text><text x="2159.5" y="1584.2" fill="#ff2222" font-size="13.5" text-anchor="start" letter-spacing="-0.3" font-family='Liberation Sans',sans-serif>0</text><text x="2159.5" y="1651.2" fill="#ff2222" font-size="13.5" text-anchor="start" letter-spacing="-0.6" font-family='Liberation Sans',sans-serif>-25</text><text x="2179" y="1518.2" fill="#7a6cf0" font-size="13.5" text-anchor="start" letter-spacing="-0.3" font-family='Liberation Sans',sans-serif>25</text><text x="2179" y="1584.2" fill="#7a6cf0" font-size="13.5" text-anchor="start" letter-spacing="-0.3" font-family='Liberation Sans',sans-serif>0</text><text x="2179" y="1651.2" fill="#7a6cf0" font-size="13.5" text-anchor="start" letter-spacing="-0.6" font-family='Liberation Sans',sans-serif>-25</text><text x="2199.4" y="1518.2" fill="#ff8a22" font-size="13.5" text-anchor="start" letter-spacing="-0.3" font-family='Liberation Sans',sans-serif>25</text><text x="2199.4" y="1584.2" fill="#ff8a22" font-size="13.5" text-anchor="start" letter-spacing="-0.3" font-family='Liberation Sans',sans-serif>0</text><text x="2199.4" y="1651.2" fill="#ff8a22" font-size="13.5" text-anchor="start" letter-spacing="-0.6" font-family='Liberation Sans',sans-serif>-25</text><text x="2218.7" y="1518.2" fill="#22eeff" font-size="13.5" text-anchor="start" letter-spacing="-0.3" font-family='Liberation Sans',sans-serif>25</text><text x="2218.7" y="1584.2" fill="#22eeff" font-size="13.5" text-anchor="start" letter-spacing="-0.3" font-family='Liberation Sans',sans-serif>0</text><text x="2218.7" y="1651.2" fill="#22eeff" font-size="13.5" text-anchor="start" letter-spacing="-0.6" font-family='Liberation Sans',sans-serif>-25</text><polygon points="2284,884 2296,884 2290,890" fill="#e0e4ee"/><polygon points="1384,90 1396,90 1390,96" fill="#e0e4ee"/><polygon points="2284,90 2296,90 2290,96" fill="#e0e4ee"/><polyline fill="none" stroke="#ee2a2a" stroke-width="1.4" stroke-linejoin="round"  points="0,1700.4 22,1701.4 33.7,1698.3 40.2,1691.8 45.4,1696.3 50.6,1691.8 55.8,1697.8 63.6,1697 84.3,1700.4 90.8,1694.4 94.7,1697.8 101.2,1691.8 105.1,1695.2 111.6,1691.8 118.1,1695.2 150.5,1695.7 194.7,1696.3 215.4,1700.4 238.8,1700.4 244,1690.5 247.9,1697 253,1688 257,1695.7 266,1689.3 269.9,1695.7 295.9,1695.2 306.3,1694.4 340,1695.2 350.4,1693.1 363.4,1695.2 380.2,1695.2 384.1,1692.6 394.5,1696.3 410.1,1702.2 417.9,1698.3 423,1678.9 427,1686.7 430.8,1678.1 436,1698.3 446.4,1695.2 456.8,1697 462,1682.8 465.9,1690.5 469.8,1683.3 475,1694.4 487.9,1695.2 503.5,1681.5 507.4,1688 521.7,1680.7 525.6,1688 539.8,1694.4 554.1,1692.6 556.7,1688.5 580,1690 590.6,1691.8 607.4,1690 630.8,1679.6 652.9,1675 658.1,1684 684,1689.3 710,1688.5 756.7,1684.8 781.3,1682.2 799.5,1688 800.8,1693.1 803.4,1684 820.3,1685.9 822.9,1677 830.6,1678.1 851.4,1667.2 854,1677.6 865.7,1678.9 869.6,1686.7 904.6,1687.4 985.1,1688 998,1685.9 1016.2,1688.5 1031.8,1690.5 1059,1692.6"/><polyline fill="none" stroke="#ee2a2a" stroke-width="1.4" stroke-linejoin="round"  points="1177,1697 1178.5,1692.6 1185,1685.4 1188.9,1693.1 1194.1,1689.3 1209.7,1684.1 1213.6,1690.5 1227.9,1687.4 1253.8,1684.8 1272,1684.1 1274.6,1690.5 1282.4,1689.3 1352.4,1689.3 1375.8,1686.7 1409.5,1688 1430.3,1689.3 1492.6,1688 1544.5,1689.3 1549.7,1691.8 1565.3,1691.8 1573,1689.3 1604.2,1689.3 1606.8,1690.5 1656.1,1691.8 1678.2,1692.6 1693.7,1693.1 1697.6,1695.7 1700.2,1691 1742.6,1693.1 1756.8,1694.4 1768.5,1694.4 1786.7,1686.7 1799.7,1684.1 1812.6,1685.4 1825.6,1688 1838.6,1697.8 1846.4,1699.6 1851.6,1696.3 1864.6,1696.3 1869.7,1702.2 1924.2,1702.2 1928.1,1697.8 1934.6,1688 1938.5,1695.2 1950.2,1684.1 1954.1,1693.1 1964.5,1688 1967.1,1694.4 1985.2,1694.4 1999.5,1698.3 2004.7,1696.3 2015.1,1696.3 2022.9,1702.2 2030.7,1702.2 2038.4,1685.9 2041,1694.4 2050.1,1684.1 2054,1691.8 2064.4,1694.4 2067,1698.3 2074.8,1695.7 2080,1695.7 2087.8,1702.2 2220.1,1702.2 2224,1697 2230.5,1702.2 2237,1685.9 2242.2,1694.4 2251.2,1691.8 2261.6,1698.3 2266.8,1700.9 2272,1699.6 2292.8,1700.4 2307,1702.2"/><rect x="1060" y="1667.5" width="118" height="34.5" fill="#fdfdfd" stroke="#222" stroke-width="2.2"/><polyline fill="none" stroke="#ee2a2a" stroke-width="1.3" stroke-linejoin="round"  points="1063,1694.4 1076,1695.7 1089,1695.7 1109.6,1695.2"/><polyline fill="none" stroke="#ee2a2a" stroke-width="1.3" stroke-linejoin="round"  points="1133,1697 1138.2,1685.4 1143.4,1693.1 1155,1695.7 1159,1693.7 1166.9,1695.2 1173.4,1697"/><line x1="1110.5" y1="1671" x2="1110.5" y2="1697" stroke="#1e90ff" stroke-width="1.5"/><path d="M1113.8 1680.5v7M1116.8 1680.5v7M1119.8 1680.5v7" stroke="#777" stroke-width="1.9"/></svg>
<svg style="position:absolute;left:0;top:0" width="2307" height="1705" viewBox="0 0 2307 1705"><defs><linearGradient id="fold" x1="0" y1="0" x2="0" y2="1"><stop offset="0" stop-color="#fbe7a8"/><stop offset="0.6" stop-color="#f2c45a"/><stop offset="1" stop-color="#f8dc8c"/></linearGradient><linearGradient id="boltg" x1="0" y1="0" x2="0" y2="1"><stop offset="0" stop-color="#fff07a"/><stop offset="1" stop-color="#e89a18"/></linearGradient><radialGradient id="blueb" cx="40%" cy="30%" r="70%"><stop offset="0" stop-color="#6aaaf0"/><stop offset="1" stop-color="#1c56b8"/></radialGradient><radialGradient id="infob" cx="40%" cy="30%" r="70%"><stop offset="0" stop-color="#c4dcf8"/><stop offset="1" stop-color="#5a8ad8"/></radialGradient><radialGradient id="lens" cx="40%" cy="35%" r="60%"><stop offset="0" stop-color="#ffffff"/><stop offset="1" stop-color="#b8d8f0"/></radialGradient></defs><rect x="0" y="69.5" width="2307" height="1.2" fill="#c8c8c8"/><path d="M6.5 41.5h10l2 2.5h13.5v20h-25.5z" fill="#dfeefa" stroke="#8aa8c0" stroke-width="1"/><rect x="8" y="44.5" width="22" height="2" fill="#9cc8f0"/><path d="M6.5 64.0l4-15.5h25.5l-4 15.5z" fill="url(#fold)" stroke="#b88a2a" stroke-width="1"/><path d="M30 50L21.5 59.5H26.5L22 66.5L35 56H29.5L34 50z" fill="url(#boltg)" stroke="#b87a18" stroke-width="0.9"/><path d="M47.5 38.5q0-1.5 1.5-1.5h24q2 0 2 2v24q0 2-2 2h-24q-1.5 0-1.5-1.5z" fill="#3a3d48"/><rect x="50.5" y="37" width="2" height="28" fill="#5a5e6a"/><rect x="53.0" y="37" width="17" height="10" fill="#f4f4f4"/><rect x="53.0" y="37" width="17" height="1.5" fill="#d8a0b8"/><path d="M55.5 41h11M55.5 44h11" stroke="#999" stroke-width="0.8"/><rect x="53.5" y="55" width="14" height="9" fill="#e8e8e8"/><rect x="56.5" y="57" width="3" height="6" fill="#666"/><path d="M70 50L61.5 59.5H66.5L62 66.5L75 56H69.5L74 50z" fill="url(#boltg)" stroke="#b87a18" stroke-width="0.9"/><path d="M86.5 43h10l2 2.5h13.5v20h-25.5z" fill="#dfeefa" stroke="#8aa8c0" stroke-width="1"/><rect x="88" y="46" width="22" height="2" fill="#9cc8f0"/><path d="M86.5 65.5l4-15.5h25.5l-4 15.5z" fill="url(#fold)" stroke="#b88a2a" stroke-width="1"/><path d="M110 50L101.5 59.5H106.5L102 66.5L115 56H109.5L114 50z" fill="url(#boltg)" stroke="#b87a18" stroke-width="0.9"/><path d="M114 45q0-7-8-7h-2" fill="none" stroke="#2a6ab8" stroke-width="2.4"/><path d="M101 38l5-4v8z" fill="#2a6ab8"/><line x1="125.5" y1="38" x2="125.5" y2="65" stroke="#b4b4b4" stroke-width="1.2"/><path d="M138.5 48l3-8q1-2 3-2h10q2 0 3 2l3 8z" fill="#d0d0d0" stroke="#c4c4c4" stroke-width="1.5"/><rect x="134.5" y="47" width="28" height="11" rx="3" fill="#c4c4c4"/><rect x="133.5" y="46" width="4" height="3" rx="1" fill="#c4c4c4"/><rect x="159.5" y="46" width="4" height="3" rx="1" fill="#c4c4c4"/><rect x="137.5" y="57" width="5" height="5" rx="1.5" fill="#c4c4c4"/><rect x="154.5" y="57" width="5" height="5" rx="1.5" fill="#c4c4c4"/><rect x="136.5" y="50" width="6" height="3" rx="1" fill="#e4e4e4"/><rect x="154.5" y="50" width="6" height="3" rx="1" fill="#e4e4e4"/><rect x="144.5" y="51" width="8" height="3" fill="#aaa"/><path d="M179 48l3-8q1-2 3-2h10q2 0 3 2l3 8z" fill="#d0d0d0" stroke="#b8b8b8" stroke-width="1.5"/><rect x="175" y="47" width="28" height="11" rx="3" fill="#b8b8b8"/><rect x="174" y="46" width="4" height="3" rx="1" fill="#b8b8b8"/><rect x="200" y="46" width="4" height="3" rx="1" fill="#b8b8b8"/><rect x="178" y="57" width="5" height="5" rx="1.5" fill="#b8b8b8"/><rect x="195" y="57" width="5" height="5" rx="1.5" fill="#b8b8b8"/><rect x="177" y="50" width="6" height="3" rx="1" fill="#e4e4e4"/><rect x="195" y="50" width="6" height="3" rx="1" fill="#e4e4e4"/><rect x="185" y="51" width="8" height="3" fill="#aaa"/><circle cx="238.7" cy="50.5" r="12.5" fill="#c0c0c0" stroke="#b0b0b0" stroke-width="0.8"/><rect x="267.3" y="39.3" width="22.4" height="22.4" rx="1.5" fill="#bdbdbd" stroke="#ababab" stroke-width="0.8"/><path d="M318 45h5v-3h4v-2h-3v-2h10v2h-3v2h4l3 3h3v10h-3l-3 3h-15l-3-3v-2h-3v3h-2v-10h2v3h3z" fill="#d4d4d4" stroke="#a8a8a8" stroke-width="1.3"/><path d="M331 46l-3 5h3l-2 4" fill="none" stroke="#a8a8a8" stroke-width="1.3"/><circle cx="368.5" cy="50.5" r="14" fill="#d8d8d8" stroke="#b4b4b4" stroke-width="1.5"/><circle cx="368.5" cy="50.5" r="11" fill="#cfcfcf"/><path d="M363 46a7.5 7.5 0 1 0 11 0" fill="none" stroke="#a0a0a0" stroke-width="2.2"/><path d="M368.5 42v8" stroke="#a0a0a0" stroke-width="2.2"/><line x1="392.6" y1="38" x2="392.6" y2="65" stroke="#b4b4b4" stroke-width="1.2"/><circle cx="416" cy="50.5" r="14.5" fill="url(#blueb)" stroke="#2a4a90" stroke-width="1"/><path d="M411 42.5v16l13-8z" fill="#fff"/><rect x="439.5" y="36.5" width="71" height="28.5" rx="1.5" fill="#fff" stroke="#cfcfcf" stroke-width="1"/><text x="444" y="57" fill="#222" font-size="15" font-family='Liberation Sans',sans-serif>1x</text><path d="M495 48l5 5 5-5" fill="none" stroke="#555" stroke-width="1.2"/><line x1="540" y1="57" x2="547" y2="64" stroke="#5a86cc" stroke-width="5" stroke-linecap="round"/><circle cx="533" cy="48.5" r="10.5" fill="url(#lens)" stroke="#555" stroke-width="2.4"/><path d="M527.5 48.5h11" stroke="#3a6ac0" stroke-width="3.2"/><path d="M533 43v11" stroke="#3a6ac0" stroke-width="3.2"/><line x1="580.5" y1="57" x2="587.5" y2="64" stroke="#5a86cc" stroke-width="5" stroke-linecap="round"/><circle cx="573.5" cy="48.5" r="10.5" fill="url(#lens)" stroke="#555" stroke-width="2.4"/><path d="M568.0 48.5h11" stroke="#3a6ac0" stroke-width="3.2"/><line x1="601.8" y1="38" x2="601.8" y2="65" stroke="#b4b4b4" stroke-width="1.2"/><path d="M610.0 42h10l2 2.5h13.5v20h-25.5z" fill="#dfeefa" stroke="#8aa8c0" stroke-width="1"/><rect x="611.5" y="45" width="22" height="2" fill="#9cc8f0"/><path d="M610.0 64.5l4-15.5h25.5l-4 15.5z" fill="url(#fold)" stroke="#b88a2a" stroke-width="1"/><rect x="620.5" y="46.5" width="19" height="18" fill="#fff" stroke="#8a8aa0" stroke-width="1"/><rect x="621" y="47" width="18" height="4" fill="#7ea0e0"/><rect x="621" y="56" width="18" height="3" fill="#7ea0e0"/><line x1="630" y1="47" x2="630" y2="64" stroke="#9a9aaa"/><path d="M642 50h6l-3 4z" fill="#111"/><path d="M662 38.5q0-1.5 1.5-1.5h24q2 0 2 2v24q0 2-2 2h-24q-1.5 0-1.5-1.5z" fill="#3a3d48"/><rect x="665" y="37" width="2" height="28" fill="#5a5e6a"/><rect x="667.5" y="37" width="17" height="10" fill="#f4f4f4"/><rect x="667.5" y="37" width="17" height="1.5" fill="#d8a0b8"/><path d="M670 41h11M670 44h11" stroke="#999" stroke-width="0.8"/><rect x="668" y="55" width="14" height="9" fill="#e8e8e8"/><rect x="671" y="57" width="3" height="6" fill="#666"/><rect x="671.5" y="46.5" width="19" height="18" fill="#fff" stroke="#8a8aa0" stroke-width="1"/><rect x="672" y="47" width="18" height="4" fill="#7ea0e0"/><rect x="672" y="56" width="18" height="3" fill="#7ea0e0"/><line x1="681" y1="47" x2="681" y2="64" stroke="#9a9aaa"/><line x1="699.9" y1="38" x2="699.9" y2="65" stroke="#b4b4b4" stroke-width="1.2"/><circle cx="722.7" cy="50.5" r="14" fill="url(#infob)" stroke="#4a70b8" stroke-width="1.2"/><circle cx="722.7" cy="43.5" r="2.3" fill="#fff"/><path d="M719.5 48h4.5v9.5h2.5v2h-8v-2h2v-7.5h-1z" fill="#fff"/><path d="M2183 35.5h8v11.5h10v-11.5h8v30.5h-8v-12.5h-10v12.5h-8z" fill="#2272b8"/><path d="M2212 35.5h13q10.5 0 10.5 9.5q0 6-4 8.5l-4 2q-3 1-7.5 1v8.5h-8zM2220 42v8.5h4.5q3.5 0 3.5-4.25q0-4.25-3.5-4.25z" fill="#2272b8"/><text x="2227" y="65.5" fill="#0a0a0a" font-size="21" font-weight="bold" font-style="italic" stroke="#0a0a0a" stroke-width="0.7" textLength="64" lengthAdjust="spacingAndGlyphs" font-family='Liberation Sans',sans-serif>tuners</text><path d="M15 116h9l2 2h12v20h-23z" fill="#e4e4e4" stroke="#c4c4c4" stroke-width="1"/><path d="M15 138l3-14h23l-3 14z" fill="#dedede" stroke="#c4c4c4" stroke-width="1"/><polygon points="44.3,132.2 43.8,133.8 41.3,134.1 40.5,135.0 40.7,137.6 39.2,138.4 37.2,136.8 36.0,136.9 34.3,138.8 32.7,138.3 32.4,135.8 31.5,135.0 28.9,135.2 28.1,133.7 29.7,131.7 29.6,130.5 27.7,128.8 28.2,127.2 30.7,126.9 31.5,126.0 31.3,123.4 32.8,122.6 34.8,124.2 36.0,124.1 37.7,122.2 39.3,122.7 39.6,125.2 40.5,126.0 43.1,125.8 43.9,127.3 42.3,129.3 42.4,130.5" fill="#c8c8c8" stroke="#b0b0b0" stroke-width="0.6"/><circle cx="36" cy="130.5" r="3.0" fill="#f4f4f4"/><path d="M48 125h6l-3 3.5z" fill="#999"/><path d="M67.5 112.5q0-1.5 1.5-1.5h24q2 0 2 2v24q0 2-2 2h-24q-1.5 0-1.5-1.5z" fill="#3a3d48"/><rect x="70.5" y="111" width="2" height="28" fill="#5a5e6a"/><rect x="73.0" y="111" width="17" height="10" fill="#f4f4f4"/><rect x="73.0" y="111" width="17" height="1.5" fill="#d8a0b8"/><path d="M75.5 115h11M75.5 118h11" stroke="#999" stroke-width="0.8"/><rect x="73.5" y="129" width="14" height="9" fill="#e8e8e8"/><rect x="76.5" y="131" width="3" height="6" fill="#666"/><polygon points="95.8,132.2 95.3,133.8 92.8,134.1 92.0,135.0 92.2,137.6 90.7,138.4 88.7,136.8 87.5,136.9 85.8,138.8 84.2,138.3 83.9,135.8 83.0,135.0 80.4,135.2 79.6,133.7 81.2,131.7 81.1,130.5 79.2,128.8 79.7,127.2 82.2,126.9 83.0,126.0 82.8,123.4 84.3,122.6 86.3,124.2 87.5,124.1 89.2,122.2 90.8,122.7 91.1,125.2 92.0,126.0 94.6,125.8 95.4,127.3 93.8,129.3 93.9,130.5" fill="#e0e0e0" stroke="#b0b0b0" stroke-width="0.6"/><circle cx="87.5" cy="130.5" r="3.0" fill="#555"/><line x1="105.5" y1="113" x2="105.5" y2="138" stroke="#bbb" stroke-width="1"/><polygon points="139.3,128.0 138.5,130.3 134.8,130.7 133.6,132.2 133.9,135.9 131.7,137.1 128.8,134.7 127.0,134.9 124.5,137.8 122.2,137.0 121.8,133.3 120.3,132.1 116.6,132.4 115.4,130.2 117.8,127.3 117.6,125.5 114.7,123.0 115.5,120.7 119.2,120.3 120.4,118.8 120.1,115.1 122.3,113.9 125.2,116.3 127.0,116.1 129.5,113.2 131.8,114.0 132.2,117.7 133.7,118.9 137.4,118.6 138.6,120.8 136.2,123.7 136.4,125.5" fill="#d4d4d4" stroke="#b0b0b0" stroke-width="0.6"/><circle cx="127" cy="125.5" r="4.4" fill="#f2f2f2"/><path d="M137 131v10M132 136h10" stroke="#c4c4c4" stroke-width="3.5"/><line x1="152.5" y1="113" x2="152.5" y2="138" stroke="#bbb" stroke-width="1"/><path d="M482 86.5h7M483.5 86.5v8M487.5 86.5v8M481.5 94.5h8M485.5 94.5v5" fill="none" stroke="#e8ecf4" stroke-width="1.5"/></svg></div></body></html>
